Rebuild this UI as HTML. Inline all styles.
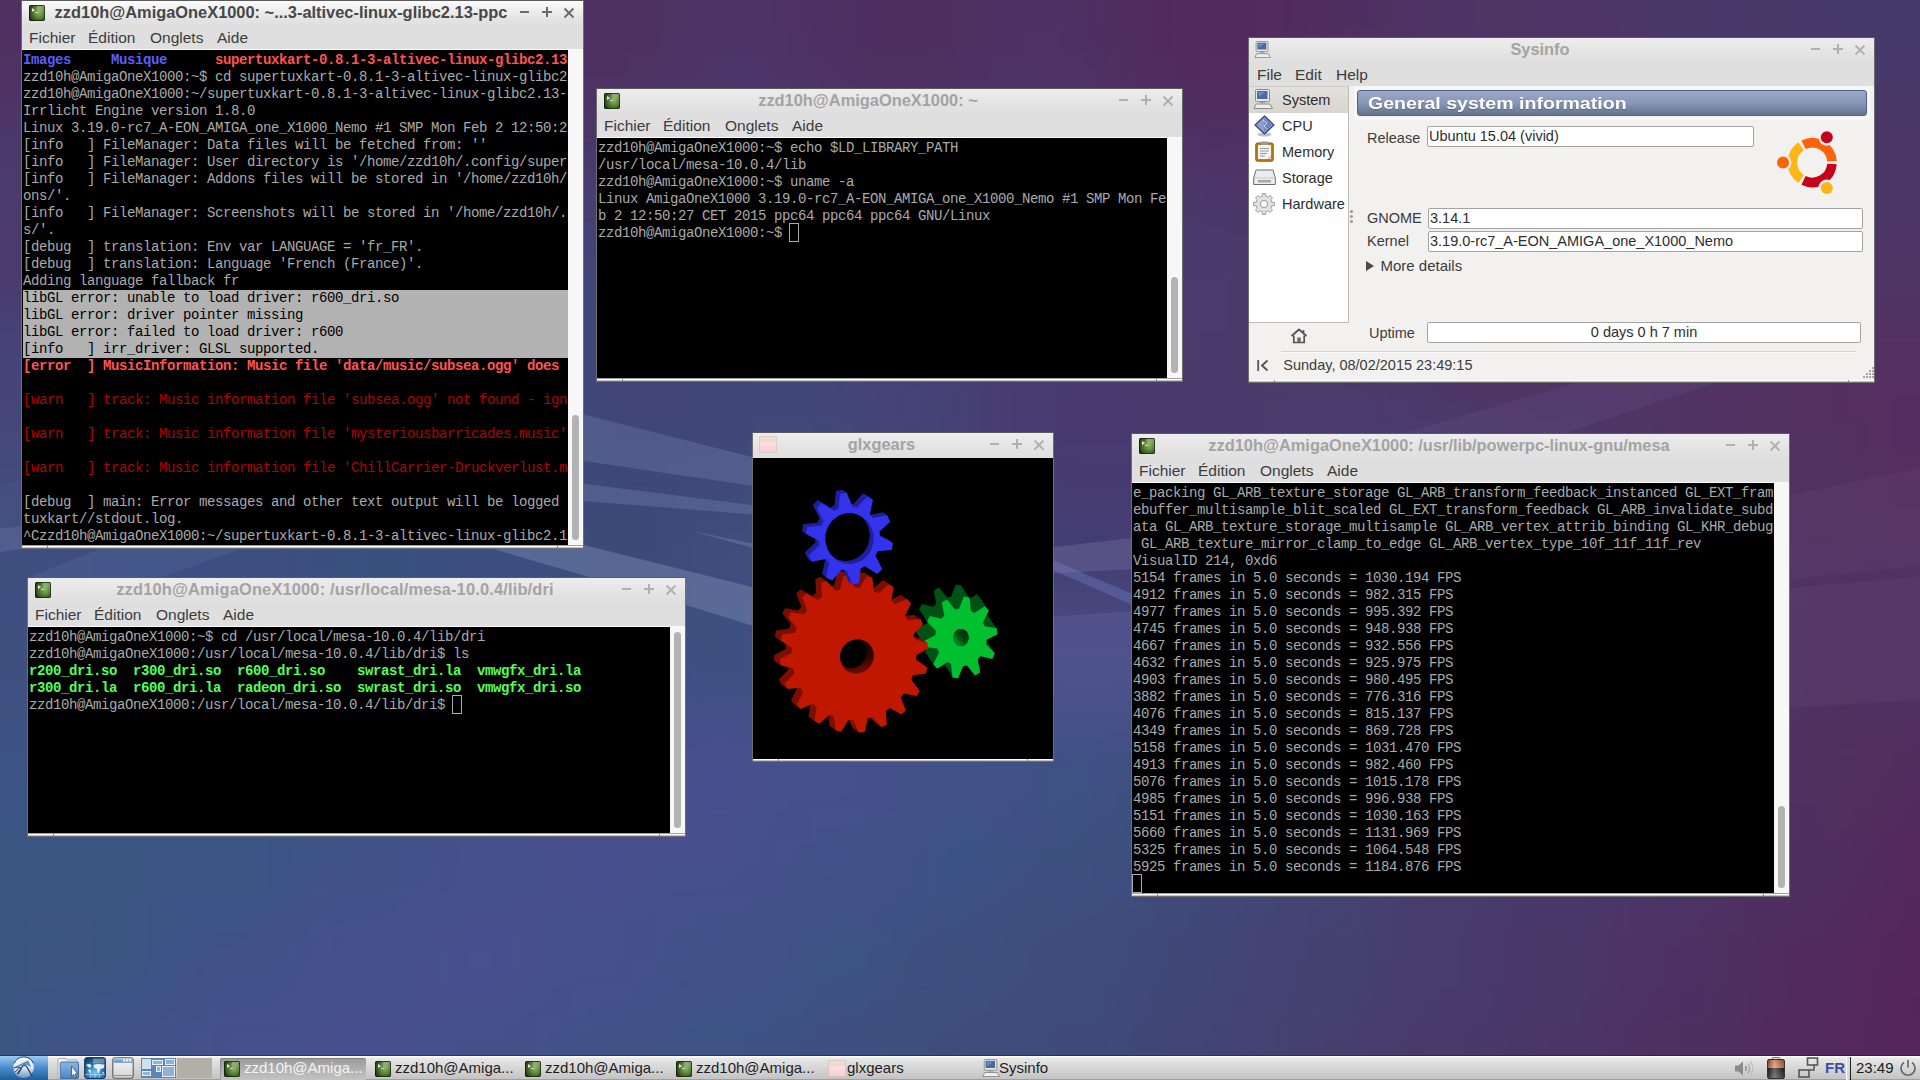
<!DOCTYPE html><html><head><meta charset="utf-8"><title>LXDE desktop</title><style>
*{box-sizing:border-box}
html,body{margin:0;padding:0}
body{width:1920px;height:1080px;overflow:hidden;position:relative;font-family:"Liberation Sans", sans-serif;background:#45407a}
.abs{position:absolute}
.win{position:absolute;background:#dfdfdf;border:1px solid #6e6e6e;border-top-color:#5a5a5a}
.tb{position:absolute;left:0;right:0;top:0;height:25px;background:linear-gradient(#fbfbfb,#e4e4e4 70%,#dfdfdf)}
.tb.in{background:linear-gradient(#ededed,#e2e2e2 70%,#dfdfdf)}
.ttl{position:absolute;top:1px;height:20px;line-height:20px;font-weight:bold;font-size:16.4px;white-space:pre;text-align:center;color:#a3a3a3;overflow:hidden}
.act .ttl{color:#474747}
.btn{position:absolute;background:#a9a9a9}
.act .btn{background:#6a6a6a}
.menu{position:absolute;top:24px;left:0;right:0;height:25px;background:#dfdfdf;font-size:15.5px;color:#3c3c3c}
.menu span{position:absolute;top:4px;line-height:17px;white-space:pre}
.wl{position:absolute;left:0;right:0;top:48px;height:1px;background:#fafafa}
.term{position:absolute;background:#000;overflow:hidden}
.tl{position:absolute;left:0;white-space:pre;font-family:"Liberation Mono", monospace;font-size:14px;letter-spacing:-0.4px;line-height:17px;height:17px;color:#aaaaaa}
.sb{position:absolute;background:#f7f7f7}
.th{position:absolute;background:#b3b3b3;border-radius:4px}
.bf{position:absolute;left:0;right:0;bottom:0;height:3px;background:linear-gradient(#a2a2a2 0,#a2a2a2 33%,#ffffff 34%,#ffffff 66%,#cfcfcf 67%,#b8b8b8 100%)}
.tick{position:absolute;bottom:0;width:1px;height:3px;background:#8a8a8a}
.B{font-weight:bold}
</style></head><body><svg class="abs" style="left:0;top:0" width="1920" height="1080" viewBox="0 0 1920 1080"><defs><filter id="bl" x="0" y="0" width="1920" height="1080" filterUnits="userSpaceOnUse" color-interpolation-filters="sRGB"><feGaussianBlur stdDeviation="24" edgeMode="duplicate" color-interpolation-filters="sRGB"/></filter></defs><g filter="url(#bl)" shape-rendering="crispEdges"><rect x="-60" y="-60" width="30" height="30" fill="#4f3163"/><rect x="-30" y="-60" width="30" height="30" fill="#503163"/><rect x="0" y="-60" width="30" height="30" fill="#503163"/><rect x="30" y="-60" width="30" height="30" fill="#4f3163"/><rect x="60" y="-60" width="30" height="30" fill="#4f3264"/><rect x="90" y="-60" width="30" height="30" fill="#4e3365"/><rect x="120" y="-60" width="30" height="30" fill="#4d3568"/><rect x="150" y="-60" width="30" height="30" fill="#4c376a"/><rect x="180" y="-60" width="30" height="30" fill="#4b396c"/><rect x="210" y="-60" width="30" height="30" fill="#4a3b6d"/><rect x="240" y="-60" width="30" height="30" fill="#493c6e"/><rect x="270" y="-60" width="30" height="30" fill="#493c6f"/><rect x="300" y="-60" width="30" height="30" fill="#493c6f"/><rect x="330" y="-60" width="30" height="30" fill="#493c6e"/><rect x="360" y="-60" width="30" height="30" fill="#493b6d"/><rect x="390" y="-60" width="30" height="30" fill="#4a396c"/><rect x="420" y="-60" width="30" height="30" fill="#4b376a"/><rect x="450" y="-60" width="30" height="30" fill="#4c3567"/><rect x="480" y="-60" width="30" height="30" fill="#4d3365"/><rect x="510" y="-60" width="30" height="30" fill="#4d3264"/><rect x="540" y="-60" width="30" height="30" fill="#4e3163"/><rect x="570" y="-60" width="30" height="30" fill="#4e3163"/><rect x="600" y="-60" width="30" height="30" fill="#4e3163"/><rect x="630" y="-60" width="30" height="30" fill="#4d3164"/><rect x="660" y="-60" width="30" height="30" fill="#4d3265"/><rect x="690" y="-60" width="30" height="30" fill="#4d3366"/><rect x="720" y="-60" width="30" height="30" fill="#4c3467"/><rect x="750" y="-60" width="30" height="30" fill="#4d3366"/><rect x="780" y="-60" width="30" height="30" fill="#4d3265"/><rect x="810" y="-60" width="30" height="30" fill="#4e3164"/><rect x="840" y="-60" width="30" height="30" fill="#4e3063"/><rect x="870" y="-60" width="30" height="30" fill="#4f3063"/><rect x="900" y="-60" width="30" height="30" fill="#4f3063"/><rect x="930" y="-60" width="30" height="30" fill="#4f3063"/><rect x="960" y="-60" width="30" height="30" fill="#4e3164"/><rect x="990" y="-60" width="30" height="30" fill="#4e3164"/><rect x="1020" y="-60" width="30" height="30" fill="#4e3265"/><rect x="1050" y="-60" width="30" height="30" fill="#4e3164"/><rect x="1080" y="-60" width="30" height="30" fill="#4f2f63"/><rect x="1110" y="-60" width="30" height="30" fill="#502d61"/><rect x="1140" y="-60" width="30" height="30" fill="#512c60"/><rect x="1170" y="-60" width="30" height="30" fill="#512b5f"/><rect x="1200" y="-60" width="30" height="30" fill="#522b5f"/><rect x="1230" y="-60" width="30" height="30" fill="#522b5f"/><rect x="1260" y="-60" width="30" height="30" fill="#512b5f"/><rect x="1290" y="-60" width="30" height="30" fill="#512c60"/><rect x="1320" y="-60" width="30" height="30" fill="#502e62"/><rect x="1350" y="-60" width="30" height="30" fill="#4f3063"/><rect x="1380" y="-60" width="30" height="30" fill="#4e3264"/><rect x="1410" y="-60" width="30" height="30" fill="#4e3366"/><rect x="1440" y="-60" width="30" height="30" fill="#4d3467"/><rect x="1470" y="-60" width="30" height="30" fill="#4d3567"/><rect x="1500" y="-60" width="30" height="30" fill="#4c3668"/><rect x="1530" y="-60" width="30" height="30" fill="#4c3668"/><rect x="1560" y="-60" width="30" height="30" fill="#4c3768"/><rect x="1590" y="-60" width="30" height="30" fill="#4b3768"/><rect x="1620" y="-60" width="30" height="30" fill="#4b3869"/><rect x="1650" y="-60" width="30" height="30" fill="#4a3869"/><rect x="1680" y="-60" width="30" height="30" fill="#4a3869"/><rect x="1710" y="-60" width="30" height="30" fill="#493969"/><rect x="1740" y="-60" width="30" height="30" fill="#483969"/><rect x="1770" y="-60" width="30" height="30" fill="#47396a"/><rect x="1800" y="-60" width="30" height="30" fill="#473a6a"/><rect x="1830" y="-60" width="30" height="30" fill="#463a6a"/><rect x="1860" y="-60" width="30" height="30" fill="#463a6a"/><rect x="1890" y="-60" width="30" height="30" fill="#463a6a"/><rect x="1920" y="-60" width="30" height="30" fill="#463a6a"/><rect x="1950" y="-60" width="30" height="30" fill="#463a6a"/><rect x="1980" y="-60" width="30" height="30" fill="#473a6a"/><rect x="-60" y="-30" width="30" height="30" fill="#503163"/><rect x="-30" y="-30" width="30" height="30" fill="#503062"/><rect x="0" y="-30" width="30" height="30" fill="#503062"/><rect x="30" y="-30" width="30" height="30" fill="#503062"/><rect x="60" y="-30" width="30" height="30" fill="#4f3163"/><rect x="90" y="-30" width="30" height="30" fill="#4f3365"/><rect x="120" y="-30" width="30" height="30" fill="#4d3567"/><rect x="150" y="-30" width="30" height="30" fill="#4c376a"/><rect x="180" y="-30" width="30" height="30" fill="#4b396c"/><rect x="210" y="-30" width="30" height="30" fill="#4a3b6d"/><rect x="240" y="-30" width="30" height="30" fill="#493c6f"/><rect x="270" y="-30" width="30" height="30" fill="#493d6f"/><rect x="300" y="-30" width="30" height="30" fill="#493d6f"/><rect x="330" y="-30" width="30" height="30" fill="#493c6f"/><rect x="360" y="-30" width="30" height="30" fill="#493b6e"/><rect x="390" y="-30" width="30" height="30" fill="#4a396c"/><rect x="420" y="-30" width="30" height="30" fill="#4b376a"/><rect x="450" y="-30" width="30" height="30" fill="#4c3567"/><rect x="480" y="-30" width="30" height="30" fill="#4d3365"/><rect x="510" y="-30" width="30" height="30" fill="#4d3163"/><rect x="540" y="-30" width="30" height="30" fill="#4e3062"/><rect x="570" y="-30" width="30" height="30" fill="#4e3062"/><rect x="600" y="-30" width="30" height="30" fill="#4e3062"/><rect x="630" y="-30" width="30" height="30" fill="#4e3163"/><rect x="660" y="-30" width="30" height="30" fill="#4d3264"/><rect x="690" y="-30" width="30" height="30" fill="#4d3365"/><rect x="720" y="-30" width="30" height="30" fill="#4c3466"/><rect x="750" y="-30" width="30" height="30" fill="#4d3366"/><rect x="780" y="-30" width="30" height="30" fill="#4e3265"/><rect x="810" y="-30" width="30" height="30" fill="#4e3063"/><rect x="840" y="-30" width="30" height="30" fill="#4f3063"/><rect x="870" y="-30" width="30" height="30" fill="#4f2f62"/><rect x="900" y="-30" width="30" height="30" fill="#4f2f62"/><rect x="930" y="-30" width="30" height="30" fill="#4f2f62"/><rect x="960" y="-30" width="30" height="30" fill="#4e3063"/><rect x="990" y="-30" width="30" height="30" fill="#4e3164"/><rect x="1020" y="-30" width="30" height="30" fill="#4e3165"/><rect x="1050" y="-30" width="30" height="30" fill="#4e3164"/><rect x="1080" y="-30" width="30" height="30" fill="#4f2f63"/><rect x="1110" y="-30" width="30" height="30" fill="#512d61"/><rect x="1140" y="-30" width="30" height="30" fill="#512b5f"/><rect x="1170" y="-30" width="30" height="30" fill="#522a5e"/><rect x="1200" y="-30" width="30" height="30" fill="#522a5e"/><rect x="1230" y="-30" width="30" height="30" fill="#522a5e"/><rect x="1260" y="-30" width="30" height="30" fill="#522b5f"/><rect x="1290" y="-30" width="30" height="30" fill="#512c60"/><rect x="1320" y="-30" width="30" height="30" fill="#502d61"/><rect x="1350" y="-30" width="30" height="30" fill="#4f2f63"/><rect x="1380" y="-30" width="30" height="30" fill="#4f3164"/><rect x="1410" y="-30" width="30" height="30" fill="#4e3365"/><rect x="1440" y="-30" width="30" height="30" fill="#4d3466"/><rect x="1470" y="-30" width="30" height="30" fill="#4d3567"/><rect x="1500" y="-30" width="30" height="30" fill="#4d3667"/><rect x="1530" y="-30" width="30" height="30" fill="#4c3667"/><rect x="1560" y="-30" width="30" height="30" fill="#4c3668"/><rect x="1590" y="-30" width="30" height="30" fill="#4c3768"/><rect x="1620" y="-30" width="30" height="30" fill="#4b3768"/><rect x="1650" y="-30" width="30" height="30" fill="#4b3869"/><rect x="1680" y="-30" width="30" height="30" fill="#4a3869"/><rect x="1710" y="-30" width="30" height="30" fill="#493869"/><rect x="1740" y="-30" width="30" height="30" fill="#483969"/><rect x="1770" y="-30" width="30" height="30" fill="#47396a"/><rect x="1800" y="-30" width="30" height="30" fill="#473a6a"/><rect x="1830" y="-30" width="30" height="30" fill="#463a6a"/><rect x="1860" y="-30" width="30" height="30" fill="#463a6a"/><rect x="1890" y="-30" width="30" height="30" fill="#463a6a"/><rect x="1920" y="-30" width="30" height="30" fill="#463a6a"/><rect x="1950" y="-30" width="30" height="30" fill="#463a6a"/><rect x="1980" y="-30" width="30" height="30" fill="#473a6a"/><rect x="-60" y="0" width="30" height="30" fill="#503163"/><rect x="-30" y="0" width="30" height="30" fill="#503062"/><rect x="0" y="0" width="30" height="30" fill="#503062"/><rect x="30" y="0" width="30" height="30" fill="#503062"/><rect x="60" y="0" width="30" height="30" fill="#4f3163"/><rect x="90" y="0" width="30" height="30" fill="#4f3365"/><rect x="120" y="0" width="30" height="30" fill="#4d3567"/><rect x="150" y="0" width="30" height="30" fill="#4c386a"/><rect x="180" y="0" width="30" height="30" fill="#4b3a6c"/><rect x="210" y="0" width="30" height="30" fill="#4a3b6e"/><rect x="240" y="0" width="30" height="30" fill="#493c6f"/><rect x="270" y="0" width="30" height="30" fill="#493d6f"/><rect x="300" y="0" width="30" height="30" fill="#493d6f"/><rect x="330" y="0" width="30" height="30" fill="#493c6f"/><rect x="360" y="0" width="30" height="30" fill="#493b6e"/><rect x="390" y="0" width="30" height="30" fill="#4a3a6c"/><rect x="420" y="0" width="30" height="30" fill="#4b376a"/><rect x="450" y="0" width="30" height="30" fill="#4c3567"/><rect x="480" y="0" width="30" height="30" fill="#4d3365"/><rect x="510" y="0" width="30" height="30" fill="#4e3163"/><rect x="540" y="0" width="30" height="30" fill="#4e3062"/><rect x="570" y="0" width="30" height="30" fill="#4e3062"/><rect x="600" y="0" width="30" height="30" fill="#4e3062"/><rect x="630" y="0" width="30" height="30" fill="#4e3163"/><rect x="660" y="0" width="30" height="30" fill="#4d3264"/><rect x="690" y="0" width="30" height="30" fill="#4d3365"/><rect x="720" y="0" width="30" height="30" fill="#4c3466"/><rect x="750" y="0" width="30" height="30" fill="#4d3366"/><rect x="780" y="0" width="30" height="30" fill="#4e3265"/><rect x="810" y="0" width="30" height="30" fill="#4e3063"/><rect x="840" y="0" width="30" height="30" fill="#4f2f62"/><rect x="870" y="0" width="30" height="30" fill="#4f2f62"/><rect x="900" y="0" width="30" height="30" fill="#4f2f62"/><rect x="930" y="0" width="30" height="30" fill="#4f2f62"/><rect x="960" y="0" width="30" height="30" fill="#4f3063"/><rect x="990" y="0" width="30" height="30" fill="#4e3164"/><rect x="1020" y="0" width="30" height="30" fill="#4e3165"/><rect x="1050" y="0" width="30" height="30" fill="#4e3164"/><rect x="1080" y="0" width="30" height="30" fill="#4f2f63"/><rect x="1110" y="0" width="30" height="30" fill="#512d60"/><rect x="1140" y="0" width="30" height="30" fill="#522b5f"/><rect x="1170" y="0" width="30" height="30" fill="#522a5e"/><rect x="1200" y="0" width="30" height="30" fill="#522a5e"/><rect x="1230" y="0" width="30" height="30" fill="#522a5e"/><rect x="1260" y="0" width="30" height="30" fill="#522b5e"/><rect x="1290" y="0" width="30" height="30" fill="#512c5f"/><rect x="1320" y="0" width="30" height="30" fill="#502d61"/><rect x="1350" y="0" width="30" height="30" fill="#502f63"/><rect x="1380" y="0" width="30" height="30" fill="#4f3164"/><rect x="1410" y="0" width="30" height="30" fill="#4e3365"/><rect x="1440" y="0" width="30" height="30" fill="#4e3466"/><rect x="1470" y="0" width="30" height="30" fill="#4d3566"/><rect x="1500" y="0" width="30" height="30" fill="#4d3566"/><rect x="1530" y="0" width="30" height="30" fill="#4d3667"/><rect x="1560" y="0" width="30" height="30" fill="#4d3667"/><rect x="1590" y="0" width="30" height="30" fill="#4c3667"/><rect x="1620" y="0" width="30" height="30" fill="#4c3768"/><rect x="1650" y="0" width="30" height="30" fill="#4b3768"/><rect x="1680" y="0" width="30" height="30" fill="#4a3869"/><rect x="1710" y="0" width="30" height="30" fill="#493869"/><rect x="1740" y="0" width="30" height="30" fill="#483969"/><rect x="1770" y="0" width="30" height="30" fill="#483969"/><rect x="1800" y="0" width="30" height="30" fill="#473a6a"/><rect x="1830" y="0" width="30" height="30" fill="#463a6a"/><rect x="1860" y="0" width="30" height="30" fill="#463a6a"/><rect x="1890" y="0" width="30" height="30" fill="#463a6a"/><rect x="1920" y="0" width="30" height="30" fill="#463a6a"/><rect x="1950" y="0" width="30" height="30" fill="#463a6a"/><rect x="1980" y="0" width="30" height="30" fill="#47396a"/><rect x="-60" y="30" width="30" height="30" fill="#503163"/><rect x="-30" y="30" width="30" height="30" fill="#503062"/><rect x="0" y="30" width="30" height="30" fill="#503062"/><rect x="30" y="30" width="30" height="30" fill="#503062"/><rect x="60" y="30" width="30" height="30" fill="#4f3164"/><rect x="90" y="30" width="30" height="30" fill="#4e3366"/><rect x="120" y="30" width="30" height="30" fill="#4d3668"/><rect x="150" y="30" width="30" height="30" fill="#4c386b"/><rect x="180" y="30" width="30" height="30" fill="#4a3a6d"/><rect x="210" y="30" width="30" height="30" fill="#4a3c6e"/><rect x="240" y="30" width="30" height="30" fill="#493d6f"/><rect x="270" y="30" width="30" height="30" fill="#493d6f"/><rect x="300" y="30" width="30" height="30" fill="#493d6f"/><rect x="330" y="30" width="30" height="30" fill="#493d6f"/><rect x="360" y="30" width="30" height="30" fill="#493c6e"/><rect x="390" y="30" width="30" height="30" fill="#4a3a6d"/><rect x="420" y="30" width="30" height="30" fill="#4a386b"/><rect x="450" y="30" width="30" height="30" fill="#4b3668"/><rect x="480" y="30" width="30" height="30" fill="#4d3365"/><rect x="510" y="30" width="30" height="30" fill="#4d3163"/><rect x="540" y="30" width="30" height="30" fill="#4e3062"/><rect x="570" y="30" width="30" height="30" fill="#4e3062"/><rect x="600" y="30" width="30" height="30" fill="#4e3062"/><rect x="630" y="30" width="30" height="30" fill="#4e3163"/><rect x="660" y="30" width="30" height="30" fill="#4d3264"/><rect x="690" y="30" width="30" height="30" fill="#4c3466"/><rect x="720" y="30" width="30" height="30" fill="#4c3467"/><rect x="750" y="30" width="30" height="30" fill="#4c3467"/><rect x="780" y="30" width="30" height="30" fill="#4d3265"/><rect x="810" y="30" width="30" height="30" fill="#4e3164"/><rect x="840" y="30" width="30" height="30" fill="#4f2f63"/><rect x="870" y="30" width="30" height="30" fill="#4f2f62"/><rect x="900" y="30" width="30" height="30" fill="#4f2f62"/><rect x="930" y="30" width="30" height="30" fill="#4f2f62"/><rect x="960" y="30" width="30" height="30" fill="#4e3063"/><rect x="990" y="30" width="30" height="30" fill="#4e3164"/><rect x="1020" y="30" width="30" height="30" fill="#4e3265"/><rect x="1050" y="30" width="30" height="30" fill="#4e3165"/><rect x="1080" y="30" width="30" height="30" fill="#4f2f63"/><rect x="1110" y="30" width="30" height="30" fill="#502d61"/><rect x="1140" y="30" width="30" height="30" fill="#512b5f"/><rect x="1170" y="30" width="30" height="30" fill="#522a5e"/><rect x="1200" y="30" width="30" height="30" fill="#522a5e"/><rect x="1230" y="30" width="30" height="30" fill="#522a5e"/><rect x="1260" y="30" width="30" height="30" fill="#522b5f"/><rect x="1290" y="30" width="30" height="30" fill="#512c60"/><rect x="1320" y="30" width="30" height="30" fill="#502e61"/><rect x="1350" y="30" width="30" height="30" fill="#4f3063"/><rect x="1380" y="30" width="30" height="30" fill="#4f3264"/><rect x="1410" y="30" width="30" height="30" fill="#4e3365"/><rect x="1440" y="30" width="30" height="30" fill="#4e3465"/><rect x="1470" y="30" width="30" height="30" fill="#4e3466"/><rect x="1500" y="30" width="30" height="30" fill="#4e3566"/><rect x="1530" y="30" width="30" height="30" fill="#4e3566"/><rect x="1560" y="30" width="30" height="30" fill="#4d3566"/><rect x="1590" y="30" width="30" height="30" fill="#4d3667"/><rect x="1620" y="30" width="30" height="30" fill="#4c3667"/><rect x="1650" y="30" width="30" height="30" fill="#4b3768"/><rect x="1680" y="30" width="30" height="30" fill="#4b3768"/><rect x="1710" y="30" width="30" height="30" fill="#4a3868"/><rect x="1740" y="30" width="30" height="30" fill="#493869"/><rect x="1770" y="30" width="30" height="30" fill="#483969"/><rect x="1800" y="30" width="30" height="30" fill="#473969"/><rect x="1830" y="30" width="30" height="30" fill="#473a6a"/><rect x="1860" y="30" width="30" height="30" fill="#463a6a"/><rect x="1890" y="30" width="30" height="30" fill="#463a6a"/><rect x="1920" y="30" width="30" height="30" fill="#463a6a"/><rect x="1950" y="30" width="30" height="30" fill="#473a6a"/><rect x="1980" y="30" width="30" height="30" fill="#473969"/><rect x="-60" y="60" width="30" height="30" fill="#4f3264"/><rect x="-30" y="60" width="30" height="30" fill="#4f3163"/><rect x="0" y="60" width="30" height="30" fill="#4f3163"/><rect x="30" y="60" width="30" height="30" fill="#4f3264"/><rect x="60" y="60" width="30" height="30" fill="#4e3365"/><rect x="90" y="60" width="30" height="30" fill="#4d3567"/><rect x="120" y="60" width="30" height="30" fill="#4c376a"/><rect x="150" y="60" width="30" height="30" fill="#4b3a6c"/><rect x="180" y="60" width="30" height="30" fill="#4a3b6e"/><rect x="210" y="60" width="30" height="30" fill="#493c6f"/><rect x="240" y="60" width="30" height="30" fill="#493d6f"/><rect x="270" y="60" width="30" height="30" fill="#493d6f"/><rect x="300" y="60" width="30" height="30" fill="#493d70"/><rect x="330" y="60" width="30" height="30" fill="#493d6f"/><rect x="360" y="60" width="30" height="30" fill="#493c6f"/><rect x="390" y="60" width="30" height="30" fill="#493b6e"/><rect x="420" y="60" width="30" height="30" fill="#4a396c"/><rect x="450" y="60" width="30" height="30" fill="#4b3769"/><rect x="480" y="60" width="30" height="30" fill="#4c3467"/><rect x="510" y="60" width="30" height="30" fill="#4d3265"/><rect x="540" y="60" width="30" height="30" fill="#4d3163"/><rect x="570" y="60" width="30" height="30" fill="#4e3163"/><rect x="600" y="60" width="30" height="30" fill="#4e3163"/><rect x="630" y="60" width="30" height="30" fill="#4d3264"/><rect x="660" y="60" width="30" height="30" fill="#4c3365"/><rect x="690" y="60" width="30" height="30" fill="#4c3567"/><rect x="720" y="60" width="30" height="30" fill="#4b3668"/><rect x="750" y="60" width="30" height="30" fill="#4c3568"/><rect x="780" y="60" width="30" height="30" fill="#4d3366"/><rect x="810" y="60" width="30" height="30" fill="#4e3265"/><rect x="840" y="60" width="30" height="30" fill="#4e3063"/><rect x="870" y="60" width="30" height="30" fill="#4f3063"/><rect x="900" y="60" width="30" height="30" fill="#4f3063"/><rect x="930" y="60" width="30" height="30" fill="#4e3063"/><rect x="960" y="60" width="30" height="30" fill="#4e3164"/><rect x="990" y="60" width="30" height="30" fill="#4d3265"/><rect x="1020" y="60" width="30" height="30" fill="#4d3366"/><rect x="1050" y="60" width="30" height="30" fill="#4e3266"/><rect x="1080" y="60" width="30" height="30" fill="#4f3164"/><rect x="1110" y="60" width="30" height="30" fill="#502e62"/><rect x="1140" y="60" width="30" height="30" fill="#512c60"/><rect x="1170" y="60" width="30" height="30" fill="#512b5f"/><rect x="1200" y="60" width="30" height="30" fill="#522b5f"/><rect x="1230" y="60" width="30" height="30" fill="#522b5f"/><rect x="1260" y="60" width="30" height="30" fill="#512c5f"/><rect x="1290" y="60" width="30" height="30" fill="#512d61"/><rect x="1320" y="60" width="30" height="30" fill="#502f62"/><rect x="1350" y="60" width="30" height="30" fill="#4f3163"/><rect x="1380" y="60" width="30" height="30" fill="#4f3264"/><rect x="1410" y="60" width="30" height="30" fill="#4e3365"/><rect x="1440" y="60" width="30" height="30" fill="#4e3465"/><rect x="1470" y="60" width="30" height="30" fill="#4f3465"/><rect x="1500" y="60" width="30" height="30" fill="#4e3465"/><rect x="1530" y="60" width="30" height="30" fill="#4e3465"/><rect x="1560" y="60" width="30" height="30" fill="#4e3565"/><rect x="1590" y="60" width="30" height="30" fill="#4d3566"/><rect x="1620" y="60" width="30" height="30" fill="#4d3667"/><rect x="1650" y="60" width="30" height="30" fill="#4c3667"/><rect x="1680" y="60" width="30" height="30" fill="#4b3768"/><rect x="1710" y="60" width="30" height="30" fill="#4a3768"/><rect x="1740" y="60" width="30" height="30" fill="#4a3868"/><rect x="1770" y="60" width="30" height="30" fill="#493869"/><rect x="1800" y="60" width="30" height="30" fill="#483969"/><rect x="1830" y="60" width="30" height="30" fill="#483969"/><rect x="1860" y="60" width="30" height="30" fill="#473969"/><rect x="1890" y="60" width="30" height="30" fill="#47396a"/><rect x="1920" y="60" width="30" height="30" fill="#473969"/><rect x="1950" y="60" width="30" height="30" fill="#483969"/><rect x="1980" y="60" width="30" height="30" fill="#483969"/><rect x="-60" y="90" width="30" height="30" fill="#4e3567"/><rect x="-30" y="90" width="30" height="30" fill="#4e3466"/><rect x="0" y="90" width="30" height="30" fill="#4e3466"/><rect x="30" y="90" width="30" height="30" fill="#4e3466"/><rect x="60" y="90" width="30" height="30" fill="#4d3668"/><rect x="90" y="90" width="30" height="30" fill="#4c376a"/><rect x="120" y="90" width="30" height="30" fill="#4b396c"/><rect x="150" y="90" width="30" height="30" fill="#4a3b6d"/><rect x="180" y="90" width="30" height="30" fill="#4a3c6e"/><rect x="210" y="90" width="30" height="30" fill="#493d6f"/><rect x="240" y="90" width="30" height="30" fill="#493d6f"/><rect x="270" y="90" width="30" height="30" fill="#493d6f"/><rect x="300" y="90" width="30" height="30" fill="#493d6f"/><rect x="330" y="90" width="30" height="30" fill="#493d6f"/><rect x="360" y="90" width="30" height="30" fill="#493d6f"/><rect x="390" y="90" width="30" height="30" fill="#493c6f"/><rect x="420" y="90" width="30" height="30" fill="#493b6d"/><rect x="450" y="90" width="30" height="30" fill="#4a396b"/><rect x="480" y="90" width="30" height="30" fill="#4b3769"/><rect x="510" y="90" width="30" height="30" fill="#4c3567"/><rect x="540" y="90" width="30" height="30" fill="#4c3365"/><rect x="570" y="90" width="30" height="30" fill="#4d3365"/><rect x="600" y="90" width="30" height="30" fill="#4d3365"/><rect x="630" y="90" width="30" height="30" fill="#4c3466"/><rect x="660" y="90" width="30" height="30" fill="#4b3568"/><rect x="690" y="90" width="30" height="30" fill="#4b3769"/><rect x="720" y="90" width="30" height="30" fill="#4b376a"/><rect x="750" y="90" width="30" height="30" fill="#4b376a"/><rect x="780" y="90" width="30" height="30" fill="#4c3568"/><rect x="810" y="90" width="30" height="30" fill="#4d3366"/><rect x="840" y="90" width="30" height="30" fill="#4d3265"/><rect x="870" y="90" width="30" height="30" fill="#4e3164"/><rect x="900" y="90" width="30" height="30" fill="#4e3164"/><rect x="930" y="90" width="30" height="30" fill="#4e3265"/><rect x="960" y="90" width="30" height="30" fill="#4d3366"/><rect x="990" y="90" width="30" height="30" fill="#4d3467"/><rect x="1020" y="90" width="30" height="30" fill="#4c3468"/><rect x="1050" y="90" width="30" height="30" fill="#4d3467"/><rect x="1080" y="90" width="30" height="30" fill="#4e3266"/><rect x="1110" y="90" width="30" height="30" fill="#4f3064"/><rect x="1140" y="90" width="30" height="30" fill="#502e62"/><rect x="1170" y="90" width="30" height="30" fill="#502d61"/><rect x="1200" y="90" width="30" height="30" fill="#512c60"/><rect x="1230" y="90" width="30" height="30" fill="#512d60"/><rect x="1260" y="90" width="30" height="30" fill="#502d61"/><rect x="1290" y="90" width="30" height="30" fill="#502f62"/><rect x="1320" y="90" width="30" height="30" fill="#4f3163"/><rect x="1350" y="90" width="30" height="30" fill="#4f3264"/><rect x="1380" y="90" width="30" height="30" fill="#4f3364"/><rect x="1410" y="90" width="30" height="30" fill="#4f3364"/><rect x="1440" y="90" width="30" height="30" fill="#4f3364"/><rect x="1470" y="90" width="30" height="30" fill="#4f3363"/><rect x="1500" y="90" width="30" height="30" fill="#4f3363"/><rect x="1530" y="90" width="30" height="30" fill="#4f3364"/><rect x="1560" y="90" width="30" height="30" fill="#4f3464"/><rect x="1590" y="90" width="30" height="30" fill="#4e3565"/><rect x="1620" y="90" width="30" height="30" fill="#4d3566"/><rect x="1650" y="90" width="30" height="30" fill="#4d3667"/><rect x="1680" y="90" width="30" height="30" fill="#4c3667"/><rect x="1710" y="90" width="30" height="30" fill="#4b3768"/><rect x="1740" y="90" width="30" height="30" fill="#4b3768"/><rect x="1770" y="90" width="30" height="30" fill="#4a3768"/><rect x="1800" y="90" width="30" height="30" fill="#4a3868"/><rect x="1830" y="90" width="30" height="30" fill="#493868"/><rect x="1860" y="90" width="30" height="30" fill="#493868"/><rect x="1890" y="90" width="30" height="30" fill="#493868"/><rect x="1920" y="90" width="30" height="30" fill="#493868"/><rect x="1950" y="90" width="30" height="30" fill="#493868"/><rect x="1980" y="90" width="30" height="30" fill="#4a3868"/><rect x="-60" y="120" width="30" height="30" fill="#4c386a"/><rect x="-30" y="120" width="30" height="30" fill="#4c386a"/><rect x="0" y="120" width="30" height="30" fill="#4c386a"/><rect x="30" y="120" width="30" height="30" fill="#4c386a"/><rect x="60" y="120" width="30" height="30" fill="#4b396b"/><rect x="90" y="120" width="30" height="30" fill="#4b3a6c"/><rect x="120" y="120" width="30" height="30" fill="#4a3b6d"/><rect x="150" y="120" width="30" height="30" fill="#4a3c6e"/><rect x="180" y="120" width="30" height="30" fill="#493d6f"/><rect x="210" y="120" width="30" height="30" fill="#493d6f"/><rect x="240" y="120" width="30" height="30" fill="#493c6f"/><rect x="270" y="120" width="30" height="30" fill="#4a3c6f"/><rect x="300" y="120" width="30" height="30" fill="#493c6f"/><rect x="330" y="120" width="30" height="30" fill="#493d6f"/><rect x="360" y="120" width="30" height="30" fill="#493d6f"/><rect x="390" y="120" width="30" height="30" fill="#493d6f"/><rect x="420" y="120" width="30" height="30" fill="#493c6f"/><rect x="450" y="120" width="30" height="30" fill="#493b6e"/><rect x="480" y="120" width="30" height="30" fill="#4a3a6c"/><rect x="510" y="120" width="30" height="30" fill="#4a386a"/><rect x="540" y="120" width="30" height="30" fill="#4b3769"/><rect x="570" y="120" width="30" height="30" fill="#4b3668"/><rect x="600" y="120" width="30" height="30" fill="#4b3669"/><rect x="630" y="120" width="30" height="30" fill="#4b376a"/><rect x="660" y="120" width="30" height="30" fill="#4a386b"/><rect x="690" y="120" width="30" height="30" fill="#4a396c"/><rect x="720" y="120" width="30" height="30" fill="#49396c"/><rect x="750" y="120" width="30" height="30" fill="#4a396c"/><rect x="780" y="120" width="30" height="30" fill="#4a386b"/><rect x="810" y="120" width="30" height="30" fill="#4b3669"/><rect x="840" y="120" width="30" height="30" fill="#4c3568"/><rect x="870" y="120" width="30" height="30" fill="#4d3467"/><rect x="900" y="120" width="30" height="30" fill="#4d3467"/><rect x="930" y="120" width="30" height="30" fill="#4c3467"/><rect x="960" y="120" width="30" height="30" fill="#4c3568"/><rect x="990" y="120" width="30" height="30" fill="#4c3669"/><rect x="1020" y="120" width="30" height="30" fill="#4c3669"/><rect x="1050" y="120" width="30" height="30" fill="#4c3669"/><rect x="1080" y="120" width="30" height="30" fill="#4c3568"/><rect x="1110" y="120" width="30" height="30" fill="#4d3366"/><rect x="1140" y="120" width="30" height="30" fill="#4e3165"/><rect x="1170" y="120" width="30" height="30" fill="#4f3064"/><rect x="1200" y="120" width="30" height="30" fill="#4f2f63"/><rect x="1230" y="120" width="30" height="30" fill="#4f2f63"/><rect x="1260" y="120" width="30" height="30" fill="#4f3063"/><rect x="1290" y="120" width="30" height="30" fill="#4f3164"/><rect x="1320" y="120" width="30" height="30" fill="#4e3265"/><rect x="1350" y="120" width="30" height="30" fill="#4e3365"/><rect x="1380" y="120" width="30" height="30" fill="#4f3364"/><rect x="1410" y="120" width="30" height="30" fill="#4f3363"/><rect x="1440" y="120" width="30" height="30" fill="#503262"/><rect x="1470" y="120" width="30" height="30" fill="#503262"/><rect x="1500" y="120" width="30" height="30" fill="#503262"/><rect x="1530" y="120" width="30" height="30" fill="#503262"/><rect x="1560" y="120" width="30" height="30" fill="#4f3363"/><rect x="1590" y="120" width="30" height="30" fill="#4f3464"/><rect x="1620" y="120" width="30" height="30" fill="#4e3565"/><rect x="1650" y="120" width="30" height="30" fill="#4d3566"/><rect x="1680" y="120" width="30" height="30" fill="#4c3667"/><rect x="1710" y="120" width="30" height="30" fill="#4c3667"/><rect x="1740" y="120" width="30" height="30" fill="#4b3767"/><rect x="1770" y="120" width="30" height="30" fill="#4b3767"/><rect x="1800" y="120" width="30" height="30" fill="#4b3768"/><rect x="1830" y="120" width="30" height="30" fill="#4b3767"/><rect x="1860" y="120" width="30" height="30" fill="#4b3667"/><rect x="1890" y="120" width="30" height="30" fill="#4b3667"/><rect x="1920" y="120" width="30" height="30" fill="#4b3767"/><rect x="1950" y="120" width="30" height="30" fill="#4b3768"/><rect x="1980" y="120" width="30" height="30" fill="#4b3768"/><rect x="-60" y="150" width="30" height="30" fill="#4b3a6d"/><rect x="-30" y="150" width="30" height="30" fill="#4b3a6c"/><rect x="0" y="150" width="30" height="30" fill="#4b3a6c"/><rect x="30" y="150" width="30" height="30" fill="#4b3a6d"/><rect x="60" y="150" width="30" height="30" fill="#4a3b6d"/><rect x="90" y="150" width="30" height="30" fill="#4a3c6e"/><rect x="120" y="150" width="30" height="30" fill="#4a3c6f"/><rect x="150" y="150" width="30" height="30" fill="#493d6f"/><rect x="180" y="150" width="30" height="30" fill="#493d6f"/><rect x="210" y="150" width="30" height="30" fill="#4a3c6f"/><rect x="240" y="150" width="30" height="30" fill="#4a3c6e"/><rect x="270" y="150" width="30" height="30" fill="#4a3b6e"/><rect x="300" y="150" width="30" height="30" fill="#4a3b6e"/><rect x="330" y="150" width="30" height="30" fill="#4a3c6e"/><rect x="360" y="150" width="30" height="30" fill="#493d6f"/><rect x="390" y="150" width="30" height="30" fill="#493d70"/><rect x="420" y="150" width="30" height="30" fill="#483e70"/><rect x="450" y="150" width="30" height="30" fill="#483d70"/><rect x="480" y="150" width="30" height="30" fill="#483c6f"/><rect x="510" y="150" width="30" height="30" fill="#483b6e"/><rect x="540" y="150" width="30" height="30" fill="#493b6d"/><rect x="570" y="150" width="30" height="30" fill="#493a6d"/><rect x="600" y="150" width="30" height="30" fill="#493a6d"/><rect x="630" y="150" width="30" height="30" fill="#483b6e"/><rect x="660" y="150" width="30" height="30" fill="#483c6e"/><rect x="690" y="150" width="30" height="30" fill="#483c6f"/><rect x="720" y="150" width="30" height="30" fill="#483c6f"/><rect x="750" y="150" width="30" height="30" fill="#483c6f"/><rect x="780" y="150" width="30" height="30" fill="#493a6e"/><rect x="810" y="150" width="30" height="30" fill="#4a396c"/><rect x="840" y="150" width="30" height="30" fill="#4a386b"/><rect x="870" y="150" width="30" height="30" fill="#4b376a"/><rect x="900" y="150" width="30" height="30" fill="#4b376a"/><rect x="930" y="150" width="30" height="30" fill="#4b376a"/><rect x="960" y="150" width="30" height="30" fill="#4b386b"/><rect x="990" y="150" width="30" height="30" fill="#4b386b"/><rect x="1020" y="150" width="30" height="30" fill="#4a386b"/><rect x="1050" y="150" width="30" height="30" fill="#4b386b"/><rect x="1080" y="150" width="30" height="30" fill="#4b376a"/><rect x="1110" y="150" width="30" height="30" fill="#4c3669"/><rect x="1140" y="150" width="30" height="30" fill="#4c3568"/><rect x="1170" y="150" width="30" height="30" fill="#4d3467"/><rect x="1200" y="150" width="30" height="30" fill="#4d3366"/><rect x="1230" y="150" width="30" height="30" fill="#4e3366"/><rect x="1260" y="150" width="30" height="30" fill="#4e3366"/><rect x="1290" y="150" width="30" height="30" fill="#4e3466"/><rect x="1320" y="150" width="30" height="30" fill="#4e3466"/><rect x="1350" y="150" width="30" height="30" fill="#4e3465"/><rect x="1380" y="150" width="30" height="30" fill="#4f3364"/><rect x="1410" y="150" width="30" height="30" fill="#503262"/><rect x="1440" y="150" width="30" height="30" fill="#513261"/><rect x="1470" y="150" width="30" height="30" fill="#513161"/><rect x="1500" y="150" width="30" height="30" fill="#513161"/><rect x="1530" y="150" width="30" height="30" fill="#513161"/><rect x="1560" y="150" width="30" height="30" fill="#503262"/><rect x="1590" y="150" width="30" height="30" fill="#4f3363"/><rect x="1620" y="150" width="30" height="30" fill="#4f3464"/><rect x="1650" y="150" width="30" height="30" fill="#4e3565"/><rect x="1680" y="150" width="30" height="30" fill="#4d3566"/><rect x="1710" y="150" width="30" height="30" fill="#4c3667"/><rect x="1740" y="150" width="30" height="30" fill="#4c3667"/><rect x="1770" y="150" width="30" height="30" fill="#4c3667"/><rect x="1800" y="150" width="30" height="30" fill="#4c3667"/><rect x="1830" y="150" width="30" height="30" fill="#4c3667"/><rect x="1860" y="150" width="30" height="30" fill="#4c3667"/><rect x="1890" y="150" width="30" height="30" fill="#4c3667"/><rect x="1920" y="150" width="30" height="30" fill="#4c3667"/><rect x="1950" y="150" width="30" height="30" fill="#4c3667"/><rect x="1980" y="150" width="30" height="30" fill="#4c3667"/><rect x="-60" y="180" width="30" height="30" fill="#4a3b6d"/><rect x="-30" y="180" width="30" height="30" fill="#4b3b6d"/><rect x="0" y="180" width="30" height="30" fill="#4b3a6d"/><rect x="30" y="180" width="30" height="30" fill="#4b3b6d"/><rect x="60" y="180" width="30" height="30" fill="#4a3b6e"/><rect x="90" y="180" width="30" height="30" fill="#4a3c6f"/><rect x="120" y="180" width="30" height="30" fill="#493d70"/><rect x="150" y="180" width="30" height="30" fill="#493e70"/><rect x="180" y="180" width="30" height="30" fill="#493d6f"/><rect x="210" y="180" width="30" height="30" fill="#4a3c6e"/><rect x="240" y="180" width="30" height="30" fill="#4a3b6d"/><rect x="270" y="180" width="30" height="30" fill="#4b3b6d"/><rect x="300" y="180" width="30" height="30" fill="#4b3b6d"/><rect x="330" y="180" width="30" height="30" fill="#4a3b6d"/><rect x="360" y="180" width="30" height="30" fill="#4a3c6e"/><rect x="390" y="180" width="30" height="30" fill="#493d70"/><rect x="420" y="180" width="30" height="30" fill="#483e71"/><rect x="450" y="180" width="30" height="30" fill="#473f71"/><rect x="480" y="180" width="30" height="30" fill="#473f72"/><rect x="510" y="180" width="30" height="30" fill="#473f71"/><rect x="540" y="180" width="30" height="30" fill="#473e71"/><rect x="570" y="180" width="30" height="30" fill="#473e71"/><rect x="600" y="180" width="30" height="30" fill="#473e71"/><rect x="630" y="180" width="30" height="30" fill="#463f72"/><rect x="660" y="180" width="30" height="30" fill="#463f72"/><rect x="690" y="180" width="30" height="30" fill="#463f72"/><rect x="720" y="180" width="30" height="30" fill="#463f72"/><rect x="750" y="180" width="30" height="30" fill="#473e71"/><rect x="780" y="180" width="30" height="30" fill="#473d71"/><rect x="810" y="180" width="30" height="30" fill="#483c70"/><rect x="840" y="180" width="30" height="30" fill="#493b6f"/><rect x="870" y="180" width="30" height="30" fill="#493b6e"/><rect x="900" y="180" width="30" height="30" fill="#493a6e"/><rect x="930" y="180" width="30" height="30" fill="#493a6d"/><rect x="960" y="180" width="30" height="30" fill="#493a6d"/><rect x="990" y="180" width="30" height="30" fill="#493a6d"/><rect x="1020" y="180" width="30" height="30" fill="#493a6d"/><rect x="1050" y="180" width="30" height="30" fill="#4a3a6d"/><rect x="1080" y="180" width="30" height="30" fill="#4a396c"/><rect x="1110" y="180" width="30" height="30" fill="#4a386b"/><rect x="1140" y="180" width="30" height="30" fill="#4b386b"/><rect x="1170" y="180" width="30" height="30" fill="#4b376a"/><rect x="1200" y="180" width="30" height="30" fill="#4c3669"/><rect x="1230" y="180" width="30" height="30" fill="#4c3669"/><rect x="1260" y="180" width="30" height="30" fill="#4c3668"/><rect x="1290" y="180" width="30" height="30" fill="#4d3668"/><rect x="1320" y="180" width="30" height="30" fill="#4d3567"/><rect x="1350" y="180" width="30" height="30" fill="#4e3465"/><rect x="1380" y="180" width="30" height="30" fill="#503363"/><rect x="1410" y="180" width="30" height="30" fill="#513261"/><rect x="1440" y="180" width="30" height="30" fill="#513160"/><rect x="1470" y="180" width="30" height="30" fill="#523060"/><rect x="1500" y="180" width="30" height="30" fill="#523060"/><rect x="1530" y="180" width="30" height="30" fill="#513160"/><rect x="1560" y="180" width="30" height="30" fill="#513161"/><rect x="1590" y="180" width="30" height="30" fill="#503262"/><rect x="1620" y="180" width="30" height="30" fill="#4f3364"/><rect x="1650" y="180" width="30" height="30" fill="#4e3465"/><rect x="1680" y="180" width="30" height="30" fill="#4d3566"/><rect x="1710" y="180" width="30" height="30" fill="#4d3566"/><rect x="1740" y="180" width="30" height="30" fill="#4d3666"/><rect x="1770" y="180" width="30" height="30" fill="#4c3667"/><rect x="1800" y="180" width="30" height="30" fill="#4c3667"/><rect x="1830" y="180" width="30" height="30" fill="#4c3667"/><rect x="1860" y="180" width="30" height="30" fill="#4c3667"/><rect x="1890" y="180" width="30" height="30" fill="#4c3667"/><rect x="1920" y="180" width="30" height="30" fill="#4c3667"/><rect x="1950" y="180" width="30" height="30" fill="#4c3667"/><rect x="1980" y="180" width="30" height="30" fill="#4c3667"/><rect x="-60" y="210" width="30" height="30" fill="#4a3b6d"/><rect x="-30" y="210" width="30" height="30" fill="#4b3a6c"/><rect x="0" y="210" width="30" height="30" fill="#4b3a6c"/><rect x="30" y="210" width="30" height="30" fill="#4b3b6d"/><rect x="60" y="210" width="30" height="30" fill="#4a3b6e"/><rect x="90" y="210" width="30" height="30" fill="#493d6f"/><rect x="120" y="210" width="30" height="30" fill="#493e70"/><rect x="150" y="210" width="30" height="30" fill="#493e71"/><rect x="180" y="210" width="30" height="30" fill="#493d6f"/><rect x="210" y="210" width="30" height="30" fill="#4a3c6e"/><rect x="240" y="210" width="30" height="30" fill="#4b3b6d"/><rect x="270" y="210" width="30" height="30" fill="#4b3a6c"/><rect x="300" y="210" width="30" height="30" fill="#4b3a6c"/><rect x="330" y="210" width="30" height="30" fill="#4b3b6d"/><rect x="360" y="210" width="30" height="30" fill="#4a3c6e"/><rect x="390" y="210" width="30" height="30" fill="#493d70"/><rect x="420" y="210" width="30" height="30" fill="#473f71"/><rect x="450" y="210" width="30" height="30" fill="#464073"/><rect x="480" y="210" width="30" height="30" fill="#464174"/><rect x="510" y="210" width="30" height="30" fill="#454174"/><rect x="540" y="210" width="30" height="30" fill="#454174"/><rect x="570" y="210" width="30" height="30" fill="#454174"/><rect x="600" y="210" width="30" height="30" fill="#454175"/><rect x="630" y="210" width="30" height="30" fill="#454275"/><rect x="660" y="210" width="30" height="30" fill="#454275"/><rect x="690" y="210" width="30" height="30" fill="#454175"/><rect x="720" y="210" width="30" height="30" fill="#454175"/><rect x="750" y="210" width="30" height="30" fill="#454174"/><rect x="780" y="210" width="30" height="30" fill="#464073"/><rect x="810" y="210" width="30" height="30" fill="#473f72"/><rect x="840" y="210" width="30" height="30" fill="#473e72"/><rect x="870" y="210" width="30" height="30" fill="#483d71"/><rect x="900" y="210" width="30" height="30" fill="#483d70"/><rect x="930" y="210" width="30" height="30" fill="#483c70"/><rect x="960" y="210" width="30" height="30" fill="#483c70"/><rect x="990" y="210" width="30" height="30" fill="#483c6f"/><rect x="1020" y="210" width="30" height="30" fill="#493c6f"/><rect x="1050" y="210" width="30" height="30" fill="#493b6e"/><rect x="1080" y="210" width="30" height="30" fill="#493b6e"/><rect x="1110" y="210" width="30" height="30" fill="#493a6d"/><rect x="1140" y="210" width="30" height="30" fill="#4a3a6c"/><rect x="1170" y="210" width="30" height="30" fill="#4a396c"/><rect x="1200" y="210" width="30" height="30" fill="#4a396b"/><rect x="1230" y="210" width="30" height="30" fill="#4b386a"/><rect x="1260" y="210" width="30" height="30" fill="#4b386a"/><rect x="1290" y="210" width="30" height="30" fill="#4c3769"/><rect x="1320" y="210" width="30" height="30" fill="#4d3667"/><rect x="1350" y="210" width="30" height="30" fill="#4e3565"/><rect x="1380" y="210" width="30" height="30" fill="#503363"/><rect x="1410" y="210" width="30" height="30" fill="#513161"/><rect x="1440" y="210" width="30" height="30" fill="#523060"/><rect x="1470" y="210" width="30" height="30" fill="#52305f"/><rect x="1500" y="210" width="30" height="30" fill="#52305f"/><rect x="1530" y="210" width="30" height="30" fill="#52305f"/><rect x="1560" y="210" width="30" height="30" fill="#513160"/><rect x="1590" y="210" width="30" height="30" fill="#503262"/><rect x="1620" y="210" width="30" height="30" fill="#4f3363"/><rect x="1650" y="210" width="30" height="30" fill="#4f3464"/><rect x="1680" y="210" width="30" height="30" fill="#4e3565"/><rect x="1710" y="210" width="30" height="30" fill="#4e3566"/><rect x="1740" y="210" width="30" height="30" fill="#4d3566"/><rect x="1770" y="210" width="30" height="30" fill="#4d3566"/><rect x="1800" y="210" width="30" height="30" fill="#4d3667"/><rect x="1830" y="210" width="30" height="30" fill="#4c3667"/><rect x="1860" y="210" width="30" height="30" fill="#4c3667"/><rect x="1890" y="210" width="30" height="30" fill="#4c3667"/><rect x="1920" y="210" width="30" height="30" fill="#4c3667"/><rect x="1950" y="210" width="30" height="30" fill="#4c3667"/><rect x="1980" y="210" width="30" height="30" fill="#4d3667"/><rect x="-60" y="240" width="30" height="30" fill="#4a3b6e"/><rect x="-30" y="240" width="30" height="30" fill="#4b3a6c"/><rect x="0" y="240" width="30" height="30" fill="#4b3a6c"/><rect x="30" y="240" width="30" height="30" fill="#4b3b6d"/><rect x="60" y="240" width="30" height="30" fill="#4a3c6e"/><rect x="90" y="240" width="30" height="30" fill="#493e70"/><rect x="120" y="240" width="30" height="30" fill="#483f72"/><rect x="150" y="240" width="30" height="30" fill="#483f71"/><rect x="180" y="240" width="30" height="30" fill="#493e70"/><rect x="210" y="240" width="30" height="30" fill="#4a3c6e"/><rect x="240" y="240" width="30" height="30" fill="#4b3b6d"/><rect x="270" y="240" width="30" height="30" fill="#4b3a6c"/><rect x="300" y="240" width="30" height="30" fill="#4b3a6c"/><rect x="330" y="240" width="30" height="30" fill="#4b3b6d"/><rect x="360" y="240" width="30" height="30" fill="#4a3c6e"/><rect x="390" y="240" width="30" height="30" fill="#483e70"/><rect x="420" y="240" width="30" height="30" fill="#474072"/><rect x="450" y="240" width="30" height="30" fill="#454274"/><rect x="480" y="240" width="30" height="30" fill="#454375"/><rect x="510" y="240" width="30" height="30" fill="#444376"/><rect x="540" y="240" width="30" height="30" fill="#444377"/><rect x="570" y="240" width="30" height="30" fill="#434477"/><rect x="600" y="240" width="30" height="30" fill="#434477"/><rect x="630" y="240" width="30" height="30" fill="#434477"/><rect x="660" y="240" width="30" height="30" fill="#434477"/><rect x="690" y="240" width="30" height="30" fill="#434377"/><rect x="720" y="240" width="30" height="30" fill="#444377"/><rect x="750" y="240" width="30" height="30" fill="#444376"/><rect x="780" y="240" width="30" height="30" fill="#454275"/><rect x="810" y="240" width="30" height="30" fill="#454175"/><rect x="840" y="240" width="30" height="30" fill="#464074"/><rect x="870" y="240" width="30" height="30" fill="#473f73"/><rect x="900" y="240" width="30" height="30" fill="#473f72"/><rect x="930" y="240" width="30" height="30" fill="#473e72"/><rect x="960" y="240" width="30" height="30" fill="#473e71"/><rect x="990" y="240" width="30" height="30" fill="#483d70"/><rect x="1020" y="240" width="30" height="30" fill="#483c70"/><rect x="1050" y="240" width="30" height="30" fill="#483c6f"/><rect x="1080" y="240" width="30" height="30" fill="#483c6f"/><rect x="1110" y="240" width="30" height="30" fill="#493b6e"/><rect x="1140" y="240" width="30" height="30" fill="#493b6d"/><rect x="1170" y="240" width="30" height="30" fill="#493a6d"/><rect x="1200" y="240" width="30" height="30" fill="#4a3a6c"/><rect x="1230" y="240" width="30" height="30" fill="#4a3a6c"/><rect x="1260" y="240" width="30" height="30" fill="#4b396b"/><rect x="1290" y="240" width="30" height="30" fill="#4b386a"/><rect x="1320" y="240" width="30" height="30" fill="#4c3768"/><rect x="1350" y="240" width="30" height="30" fill="#4e3566"/><rect x="1380" y="240" width="30" height="30" fill="#503363"/><rect x="1410" y="240" width="30" height="30" fill="#513161"/><rect x="1440" y="240" width="30" height="30" fill="#52305f"/><rect x="1470" y="240" width="30" height="30" fill="#52305f"/><rect x="1500" y="240" width="30" height="30" fill="#52305f"/><rect x="1530" y="240" width="30" height="30" fill="#52305f"/><rect x="1560" y="240" width="30" height="30" fill="#513160"/><rect x="1590" y="240" width="30" height="30" fill="#503262"/><rect x="1620" y="240" width="30" height="30" fill="#4f3363"/><rect x="1650" y="240" width="30" height="30" fill="#4f3464"/><rect x="1680" y="240" width="30" height="30" fill="#4e3465"/><rect x="1710" y="240" width="30" height="30" fill="#4e3465"/><rect x="1740" y="240" width="30" height="30" fill="#4e3565"/><rect x="1770" y="240" width="30" height="30" fill="#4e3566"/><rect x="1800" y="240" width="30" height="30" fill="#4d3566"/><rect x="1830" y="240" width="30" height="30" fill="#4d3566"/><rect x="1860" y="240" width="30" height="30" fill="#4d3667"/><rect x="1890" y="240" width="30" height="30" fill="#4c3667"/><rect x="1920" y="240" width="30" height="30" fill="#4d3667"/><rect x="1950" y="240" width="30" height="30" fill="#4d3566"/><rect x="1980" y="240" width="30" height="30" fill="#4d3566"/><rect x="-60" y="270" width="30" height="30" fill="#4a3d6f"/><rect x="-30" y="270" width="30" height="30" fill="#4a3b6e"/><rect x="0" y="270" width="30" height="30" fill="#4a3b6d"/><rect x="30" y="270" width="30" height="30" fill="#4a3c6e"/><rect x="60" y="270" width="30" height="30" fill="#493e70"/><rect x="90" y="270" width="30" height="30" fill="#483f72"/><rect x="120" y="270" width="30" height="30" fill="#484073"/><rect x="150" y="270" width="30" height="30" fill="#484073"/><rect x="180" y="270" width="30" height="30" fill="#483f71"/><rect x="210" y="270" width="30" height="30" fill="#493d6f"/><rect x="240" y="270" width="30" height="30" fill="#4a3b6d"/><rect x="270" y="270" width="30" height="30" fill="#4b3a6c"/><rect x="300" y="270" width="30" height="30" fill="#4b3a6c"/><rect x="330" y="270" width="30" height="30" fill="#4a3b6d"/><rect x="360" y="270" width="30" height="30" fill="#493d6f"/><rect x="390" y="270" width="30" height="30" fill="#483f71"/><rect x="420" y="270" width="30" height="30" fill="#464174"/><rect x="450" y="270" width="30" height="30" fill="#444376"/><rect x="480" y="270" width="30" height="30" fill="#434477"/><rect x="510" y="270" width="30" height="30" fill="#434578"/><rect x="540" y="270" width="30" height="30" fill="#424578"/><rect x="570" y="270" width="30" height="30" fill="#424579"/><rect x="600" y="270" width="30" height="30" fill="#424579"/><rect x="630" y="270" width="30" height="30" fill="#424579"/><rect x="660" y="270" width="30" height="30" fill="#424579"/><rect x="690" y="270" width="30" height="30" fill="#424579"/><rect x="720" y="270" width="30" height="30" fill="#434478"/><rect x="750" y="270" width="30" height="30" fill="#434478"/><rect x="780" y="270" width="30" height="30" fill="#444377"/><rect x="810" y="270" width="30" height="30" fill="#454376"/><rect x="840" y="270" width="30" height="30" fill="#454276"/><rect x="870" y="270" width="30" height="30" fill="#464175"/><rect x="900" y="270" width="30" height="30" fill="#464074"/><rect x="930" y="270" width="30" height="30" fill="#473f73"/><rect x="960" y="270" width="30" height="30" fill="#473e72"/><rect x="990" y="270" width="30" height="30" fill="#473d71"/><rect x="1020" y="270" width="30" height="30" fill="#473d70"/><rect x="1050" y="270" width="30" height="30" fill="#483c70"/><rect x="1080" y="270" width="30" height="30" fill="#483c6f"/><rect x="1110" y="270" width="30" height="30" fill="#483c6e"/><rect x="1140" y="270" width="30" height="30" fill="#493b6e"/><rect x="1170" y="270" width="30" height="30" fill="#493b6d"/><rect x="1200" y="270" width="30" height="30" fill="#493b6c"/><rect x="1230" y="270" width="30" height="30" fill="#4a3a6c"/><rect x="1260" y="270" width="30" height="30" fill="#4a3a6c"/><rect x="1290" y="270" width="30" height="30" fill="#4b396b"/><rect x="1320" y="270" width="30" height="30" fill="#4c3869"/><rect x="1350" y="270" width="30" height="30" fill="#4d3667"/><rect x="1380" y="270" width="30" height="30" fill="#4f3464"/><rect x="1410" y="270" width="30" height="30" fill="#513261"/><rect x="1440" y="270" width="30" height="30" fill="#513160"/><rect x="1470" y="270" width="30" height="30" fill="#52305f"/><rect x="1500" y="270" width="30" height="30" fill="#52305f"/><rect x="1530" y="270" width="30" height="30" fill="#523160"/><rect x="1560" y="270" width="30" height="30" fill="#513161"/><rect x="1590" y="270" width="30" height="30" fill="#503262"/><rect x="1620" y="270" width="30" height="30" fill="#4f3363"/><rect x="1650" y="270" width="30" height="30" fill="#4f3464"/><rect x="1680" y="270" width="30" height="30" fill="#4f3465"/><rect x="1710" y="270" width="30" height="30" fill="#4f3465"/><rect x="1740" y="270" width="30" height="30" fill="#4f3465"/><rect x="1770" y="270" width="30" height="30" fill="#4f3464"/><rect x="1800" y="270" width="30" height="30" fill="#4f3465"/><rect x="1830" y="270" width="30" height="30" fill="#4f3465"/><rect x="1860" y="270" width="30" height="30" fill="#4e3465"/><rect x="1890" y="270" width="30" height="30" fill="#4e3465"/><rect x="1920" y="270" width="30" height="30" fill="#4e3465"/><rect x="1950" y="270" width="30" height="30" fill="#4e3465"/><rect x="1980" y="270" width="30" height="30" fill="#4f3465"/><rect x="-60" y="300" width="30" height="30" fill="#484074"/><rect x="-30" y="300" width="30" height="30" fill="#484074"/><rect x="0" y="300" width="30" height="30" fill="#484074"/><rect x="30" y="300" width="30" height="30" fill="#484074"/><rect x="60" y="300" width="30" height="30" fill="#484174"/><rect x="90" y="300" width="30" height="30" fill="#474175"/><rect x="120" y="300" width="30" height="30" fill="#474275"/><rect x="150" y="300" width="30" height="30" fill="#474275"/><rect x="180" y="300" width="30" height="30" fill="#474173"/><rect x="210" y="300" width="30" height="30" fill="#483f71"/><rect x="240" y="300" width="30" height="30" fill="#493d6f"/><rect x="270" y="300" width="30" height="30" fill="#4a3c6e"/><rect x="300" y="300" width="30" height="30" fill="#4a3c6e"/><rect x="330" y="300" width="30" height="30" fill="#493d6f"/><rect x="360" y="300" width="30" height="30" fill="#483f71"/><rect x="390" y="300" width="30" height="30" fill="#464173"/><rect x="420" y="300" width="30" height="30" fill="#454376"/><rect x="450" y="300" width="30" height="30" fill="#434577"/><rect x="480" y="300" width="30" height="30" fill="#424678"/><rect x="510" y="300" width="30" height="30" fill="#424679"/><rect x="540" y="300" width="30" height="30" fill="#424679"/><rect x="570" y="300" width="30" height="30" fill="#41467a"/><rect x="600" y="300" width="30" height="30" fill="#41457a"/><rect x="630" y="300" width="30" height="30" fill="#41457a"/><rect x="660" y="300" width="30" height="30" fill="#41457a"/><rect x="690" y="300" width="30" height="30" fill="#42457a"/><rect x="720" y="300" width="30" height="30" fill="#424579"/><rect x="750" y="300" width="30" height="30" fill="#434579"/><rect x="780" y="300" width="30" height="30" fill="#434578"/><rect x="810" y="300" width="30" height="30" fill="#444478"/><rect x="840" y="300" width="30" height="30" fill="#444377"/><rect x="870" y="300" width="30" height="30" fill="#454276"/><rect x="900" y="300" width="30" height="30" fill="#464175"/><rect x="930" y="300" width="30" height="30" fill="#464074"/><rect x="960" y="300" width="30" height="30" fill="#473f72"/><rect x="990" y="300" width="30" height="30" fill="#473e71"/><rect x="1020" y="300" width="30" height="30" fill="#473d70"/><rect x="1050" y="300" width="30" height="30" fill="#483c70"/><rect x="1080" y="300" width="30" height="30" fill="#483c6f"/><rect x="1110" y="300" width="30" height="30" fill="#483b6e"/><rect x="1140" y="300" width="30" height="30" fill="#493b6d"/><rect x="1170" y="300" width="30" height="30" fill="#493b6d"/><rect x="1200" y="300" width="30" height="30" fill="#493b6c"/><rect x="1230" y="300" width="30" height="30" fill="#493b6c"/><rect x="1260" y="300" width="30" height="30" fill="#4a3a6c"/><rect x="1290" y="300" width="30" height="30" fill="#4a3a6b"/><rect x="1320" y="300" width="30" height="30" fill="#4b396a"/><rect x="1350" y="300" width="30" height="30" fill="#4c3768"/><rect x="1380" y="300" width="30" height="30" fill="#4e3565"/><rect x="1410" y="300" width="30" height="30" fill="#503363"/><rect x="1440" y="300" width="30" height="30" fill="#513261"/><rect x="1470" y="300" width="30" height="30" fill="#513160"/><rect x="1500" y="300" width="30" height="30" fill="#513160"/><rect x="1530" y="300" width="30" height="30" fill="#513161"/><rect x="1560" y="300" width="30" height="30" fill="#503262"/><rect x="1590" y="300" width="30" height="30" fill="#503363"/><rect x="1620" y="300" width="30" height="30" fill="#4f3464"/><rect x="1650" y="300" width="30" height="30" fill="#4f3464"/><rect x="1680" y="300" width="30" height="30" fill="#4f3464"/><rect x="1710" y="300" width="30" height="30" fill="#4f3364"/><rect x="1740" y="300" width="30" height="30" fill="#503364"/><rect x="1770" y="300" width="30" height="30" fill="#503263"/><rect x="1800" y="300" width="30" height="30" fill="#513263"/><rect x="1830" y="300" width="30" height="30" fill="#513263"/><rect x="1860" y="300" width="30" height="30" fill="#513263"/><rect x="1890" y="300" width="30" height="30" fill="#513263"/><rect x="1920" y="300" width="30" height="30" fill="#513263"/><rect x="1950" y="300" width="30" height="30" fill="#513264"/><rect x="1980" y="300" width="30" height="30" fill="#503264"/><rect x="-60" y="330" width="30" height="30" fill="#464378"/><rect x="-30" y="330" width="30" height="30" fill="#464479"/><rect x="0" y="330" width="30" height="30" fill="#464479"/><rect x="30" y="330" width="30" height="30" fill="#464379"/><rect x="60" y="330" width="30" height="30" fill="#464378"/><rect x="90" y="330" width="30" height="30" fill="#464477"/><rect x="120" y="330" width="30" height="30" fill="#464477"/><rect x="150" y="330" width="30" height="30" fill="#454477"/><rect x="180" y="330" width="30" height="30" fill="#464376"/><rect x="210" y="330" width="30" height="30" fill="#464274"/><rect x="240" y="330" width="30" height="30" fill="#474072"/><rect x="270" y="330" width="30" height="30" fill="#483f71"/><rect x="300" y="330" width="30" height="30" fill="#483f71"/><rect x="330" y="330" width="30" height="30" fill="#474072"/><rect x="360" y="330" width="30" height="30" fill="#464274"/><rect x="390" y="330" width="30" height="30" fill="#444476"/><rect x="420" y="330" width="30" height="30" fill="#434578"/><rect x="450" y="330" width="30" height="30" fill="#424679"/><rect x="480" y="330" width="30" height="30" fill="#414779"/><rect x="510" y="330" width="30" height="30" fill="#41477a"/><rect x="540" y="330" width="30" height="30" fill="#41467a"/><rect x="570" y="330" width="30" height="30" fill="#41467a"/><rect x="600" y="330" width="30" height="30" fill="#41457a"/><rect x="630" y="330" width="30" height="30" fill="#41457a"/><rect x="660" y="330" width="30" height="30" fill="#41457a"/><rect x="690" y="330" width="30" height="30" fill="#41457a"/><rect x="720" y="330" width="30" height="30" fill="#41467a"/><rect x="750" y="330" width="30" height="30" fill="#42467a"/><rect x="780" y="330" width="30" height="30" fill="#434579"/><rect x="810" y="330" width="30" height="30" fill="#434579"/><rect x="840" y="330" width="30" height="30" fill="#444478"/><rect x="870" y="330" width="30" height="30" fill="#454377"/><rect x="900" y="330" width="30" height="30" fill="#454276"/><rect x="930" y="330" width="30" height="30" fill="#464074"/><rect x="960" y="330" width="30" height="30" fill="#463f73"/><rect x="990" y="330" width="30" height="30" fill="#473d71"/><rect x="1020" y="330" width="30" height="30" fill="#473c70"/><rect x="1050" y="330" width="30" height="30" fill="#483b6f"/><rect x="1080" y="330" width="30" height="30" fill="#483b6f"/><rect x="1110" y="330" width="30" height="30" fill="#483b6e"/><rect x="1140" y="330" width="30" height="30" fill="#493b6d"/><rect x="1170" y="330" width="30" height="30" fill="#493b6c"/><rect x="1200" y="330" width="30" height="30" fill="#4a3a6b"/><rect x="1230" y="330" width="30" height="30" fill="#4a3a6b"/><rect x="1260" y="330" width="30" height="30" fill="#4a3b6b"/><rect x="1290" y="330" width="30" height="30" fill="#4a3a6c"/><rect x="1320" y="330" width="30" height="30" fill="#4a3a6b"/><rect x="1350" y="330" width="30" height="30" fill="#4b396a"/><rect x="1380" y="330" width="30" height="30" fill="#4d3767"/><rect x="1410" y="330" width="30" height="30" fill="#4e3565"/><rect x="1440" y="330" width="30" height="30" fill="#4f3363"/><rect x="1470" y="330" width="30" height="30" fill="#503362"/><rect x="1500" y="330" width="30" height="30" fill="#503262"/><rect x="1530" y="330" width="30" height="30" fill="#503362"/><rect x="1560" y="330" width="30" height="30" fill="#503363"/><rect x="1590" y="330" width="30" height="30" fill="#4f3464"/><rect x="1620" y="330" width="30" height="30" fill="#4f3465"/><rect x="1650" y="330" width="30" height="30" fill="#4f3465"/><rect x="1680" y="330" width="30" height="30" fill="#4f3464"/><rect x="1710" y="330" width="30" height="30" fill="#503363"/><rect x="1740" y="330" width="30" height="30" fill="#513263"/><rect x="1770" y="330" width="30" height="30" fill="#513162"/><rect x="1800" y="330" width="30" height="30" fill="#523161"/><rect x="1830" y="330" width="30" height="30" fill="#533061"/><rect x="1860" y="330" width="30" height="30" fill="#533061"/><rect x="1890" y="330" width="30" height="30" fill="#543061"/><rect x="1920" y="330" width="30" height="30" fill="#533062"/><rect x="1950" y="330" width="30" height="30" fill="#533062"/><rect x="1980" y="330" width="30" height="30" fill="#523163"/><rect x="-60" y="360" width="30" height="30" fill="#46447a"/><rect x="-30" y="360" width="30" height="30" fill="#46447a"/><rect x="0" y="360" width="30" height="30" fill="#46447a"/><rect x="30" y="360" width="30" height="30" fill="#46447a"/><rect x="60" y="360" width="30" height="30" fill="#464579"/><rect x="90" y="360" width="30" height="30" fill="#454579"/><rect x="120" y="360" width="30" height="30" fill="#454679"/><rect x="150" y="360" width="30" height="30" fill="#444679"/><rect x="180" y="360" width="30" height="30" fill="#444678"/><rect x="210" y="360" width="30" height="30" fill="#444577"/><rect x="240" y="360" width="30" height="30" fill="#454476"/><rect x="270" y="360" width="30" height="30" fill="#454375"/><rect x="300" y="360" width="30" height="30" fill="#454375"/><rect x="330" y="360" width="30" height="30" fill="#444476"/><rect x="360" y="360" width="30" height="30" fill="#434577"/><rect x="390" y="360" width="30" height="30" fill="#424779"/><rect x="420" y="360" width="30" height="30" fill="#41487a"/><rect x="450" y="360" width="30" height="30" fill="#41487a"/><rect x="480" y="360" width="30" height="30" fill="#40487a"/><rect x="510" y="360" width="30" height="30" fill="#40487a"/><rect x="540" y="360" width="30" height="30" fill="#40477a"/><rect x="570" y="360" width="30" height="30" fill="#41467a"/><rect x="600" y="360" width="30" height="30" fill="#41457a"/><rect x="630" y="360" width="30" height="30" fill="#41457a"/><rect x="660" y="360" width="30" height="30" fill="#41457a"/><rect x="690" y="360" width="30" height="30" fill="#41457a"/><rect x="720" y="360" width="30" height="30" fill="#41467a"/><rect x="750" y="360" width="30" height="30" fill="#42467a"/><rect x="780" y="360" width="30" height="30" fill="#42467a"/><rect x="810" y="360" width="30" height="30" fill="#43467a"/><rect x="840" y="360" width="30" height="30" fill="#444579"/><rect x="870" y="360" width="30" height="30" fill="#444478"/><rect x="900" y="360" width="30" height="30" fill="#454276"/><rect x="930" y="360" width="30" height="30" fill="#464074"/><rect x="960" y="360" width="30" height="30" fill="#463f73"/><rect x="990" y="360" width="30" height="30" fill="#473d71"/><rect x="1020" y="360" width="30" height="30" fill="#473b6f"/><rect x="1050" y="360" width="30" height="30" fill="#483b6f"/><rect x="1080" y="360" width="30" height="30" fill="#483a6e"/><rect x="1110" y="360" width="30" height="30" fill="#483b6e"/><rect x="1140" y="360" width="30" height="30" fill="#493b6d"/><rect x="1170" y="360" width="30" height="30" fill="#4a3a6b"/><rect x="1200" y="360" width="30" height="30" fill="#4a3a6a"/><rect x="1230" y="360" width="30" height="30" fill="#4a3a6b"/><rect x="1260" y="360" width="30" height="30" fill="#4a3b6b"/><rect x="1290" y="360" width="30" height="30" fill="#4a3b6c"/><rect x="1320" y="360" width="30" height="30" fill="#4a3b6c"/><rect x="1350" y="360" width="30" height="30" fill="#4a3a6b"/><rect x="1380" y="360" width="30" height="30" fill="#4c386a"/><rect x="1410" y="360" width="30" height="30" fill="#4d3768"/><rect x="1440" y="360" width="30" height="30" fill="#4e3666"/><rect x="1470" y="360" width="30" height="30" fill="#4e3565"/><rect x="1500" y="360" width="30" height="30" fill="#4f3465"/><rect x="1530" y="360" width="30" height="30" fill="#4f3465"/><rect x="1560" y="360" width="30" height="30" fill="#4e3565"/><rect x="1590" y="360" width="30" height="30" fill="#4e3565"/><rect x="1620" y="360" width="30" height="30" fill="#4e3565"/><rect x="1650" y="360" width="30" height="30" fill="#4f3465"/><rect x="1680" y="360" width="30" height="30" fill="#4f3364"/><rect x="1710" y="360" width="30" height="30" fill="#503263"/><rect x="1740" y="360" width="30" height="30" fill="#513162"/><rect x="1770" y="360" width="30" height="30" fill="#523161"/><rect x="1800" y="360" width="30" height="30" fill="#533060"/><rect x="1830" y="360" width="30" height="30" fill="#542f60"/><rect x="1860" y="360" width="30" height="30" fill="#552f61"/><rect x="1890" y="360" width="30" height="30" fill="#552f61"/><rect x="1920" y="360" width="30" height="30" fill="#552f61"/><rect x="1950" y="360" width="30" height="30" fill="#542f61"/><rect x="1980" y="360" width="30" height="30" fill="#533062"/><rect x="-60" y="390" width="30" height="30" fill="#45467a"/><rect x="-30" y="390" width="30" height="30" fill="#46457a"/><rect x="0" y="390" width="30" height="30" fill="#46457a"/><rect x="30" y="390" width="30" height="30" fill="#45457a"/><rect x="60" y="390" width="30" height="30" fill="#45467a"/><rect x="90" y="390" width="30" height="30" fill="#44477a"/><rect x="120" y="390" width="30" height="30" fill="#43487b"/><rect x="150" y="390" width="30" height="30" fill="#43487b"/><rect x="180" y="390" width="30" height="30" fill="#43487a"/><rect x="210" y="390" width="30" height="30" fill="#43487a"/><rect x="240" y="390" width="30" height="30" fill="#434779"/><rect x="270" y="390" width="30" height="30" fill="#424779"/><rect x="300" y="390" width="30" height="30" fill="#424779"/><rect x="330" y="390" width="30" height="30" fill="#41487a"/><rect x="360" y="390" width="30" height="30" fill="#41497a"/><rect x="390" y="390" width="30" height="30" fill="#40497b"/><rect x="420" y="390" width="30" height="30" fill="#404a7b"/><rect x="450" y="390" width="30" height="30" fill="#3f4a7b"/><rect x="480" y="390" width="30" height="30" fill="#3f497b"/><rect x="510" y="390" width="30" height="30" fill="#3f497b"/><rect x="540" y="390" width="30" height="30" fill="#40487a"/><rect x="570" y="390" width="30" height="30" fill="#40467a"/><rect x="600" y="390" width="30" height="30" fill="#41457a"/><rect x="630" y="390" width="30" height="30" fill="#41457a"/><rect x="660" y="390" width="30" height="30" fill="#41457a"/><rect x="690" y="390" width="30" height="30" fill="#41467a"/><rect x="720" y="390" width="30" height="30" fill="#41467a"/><rect x="750" y="390" width="30" height="30" fill="#41477b"/><rect x="780" y="390" width="30" height="30" fill="#42477b"/><rect x="810" y="390" width="30" height="30" fill="#43467a"/><rect x="840" y="390" width="30" height="30" fill="#43467a"/><rect x="870" y="390" width="30" height="30" fill="#444479"/><rect x="900" y="390" width="30" height="30" fill="#454377"/><rect x="930" y="390" width="30" height="30" fill="#454175"/><rect x="960" y="390" width="30" height="30" fill="#463f73"/><rect x="990" y="390" width="30" height="30" fill="#473d71"/><rect x="1020" y="390" width="30" height="30" fill="#473b6f"/><rect x="1050" y="390" width="30" height="30" fill="#483a6e"/><rect x="1080" y="390" width="30" height="30" fill="#483a6e"/><rect x="1110" y="390" width="30" height="30" fill="#483a6e"/><rect x="1140" y="390" width="30" height="30" fill="#493b6d"/><rect x="1170" y="390" width="30" height="30" fill="#4a3a6a"/><rect x="1200" y="390" width="30" height="30" fill="#4a3a6a"/><rect x="1230" y="390" width="30" height="30" fill="#4a3a6a"/><rect x="1260" y="390" width="30" height="30" fill="#4a3a6b"/><rect x="1290" y="390" width="30" height="30" fill="#493b6c"/><rect x="1320" y="390" width="30" height="30" fill="#493b6c"/><rect x="1350" y="390" width="30" height="30" fill="#4a3b6c"/><rect x="1380" y="390" width="30" height="30" fill="#4b3a6b"/><rect x="1410" y="390" width="30" height="30" fill="#4b396a"/><rect x="1440" y="390" width="30" height="30" fill="#4c3869"/><rect x="1470" y="390" width="30" height="30" fill="#4d3768"/><rect x="1500" y="390" width="30" height="30" fill="#4d3667"/><rect x="1530" y="390" width="30" height="30" fill="#4d3667"/><rect x="1560" y="390" width="30" height="30" fill="#4d3667"/><rect x="1590" y="390" width="30" height="30" fill="#4e3666"/><rect x="1620" y="390" width="30" height="30" fill="#4e3566"/><rect x="1650" y="390" width="30" height="30" fill="#4f3465"/><rect x="1680" y="390" width="30" height="30" fill="#503364"/><rect x="1710" y="390" width="30" height="30" fill="#513262"/><rect x="1740" y="390" width="30" height="30" fill="#523161"/><rect x="1770" y="390" width="30" height="30" fill="#523060"/><rect x="1800" y="390" width="30" height="30" fill="#53305f"/><rect x="1830" y="390" width="30" height="30" fill="#532f5f"/><rect x="1860" y="390" width="30" height="30" fill="#552e60"/><rect x="1890" y="390" width="30" height="30" fill="#562e61"/><rect x="1920" y="390" width="30" height="30" fill="#552e61"/><rect x="1950" y="390" width="30" height="30" fill="#552f61"/><rect x="1980" y="390" width="30" height="30" fill="#543061"/><rect x="-60" y="420" width="30" height="30" fill="#44487b"/><rect x="-30" y="420" width="30" height="30" fill="#44487b"/><rect x="0" y="420" width="30" height="30" fill="#44497b"/><rect x="30" y="420" width="30" height="30" fill="#44487b"/><rect x="60" y="420" width="30" height="30" fill="#44487b"/><rect x="90" y="420" width="30" height="30" fill="#43497c"/><rect x="120" y="420" width="30" height="30" fill="#424a7c"/><rect x="150" y="420" width="30" height="30" fill="#414a7c"/><rect x="180" y="420" width="30" height="30" fill="#414a7c"/><rect x="210" y="420" width="30" height="30" fill="#414a7c"/><rect x="240" y="420" width="30" height="30" fill="#414a7c"/><rect x="270" y="420" width="30" height="30" fill="#404a7c"/><rect x="300" y="420" width="30" height="30" fill="#404a7c"/><rect x="330" y="420" width="30" height="30" fill="#3f4b7c"/><rect x="360" y="420" width="30" height="30" fill="#3f4b7d"/><rect x="390" y="420" width="30" height="30" fill="#3e4b7d"/><rect x="420" y="420" width="30" height="30" fill="#3e4b7d"/><rect x="450" y="420" width="30" height="30" fill="#3e4b7c"/><rect x="480" y="420" width="30" height="30" fill="#3e4a7c"/><rect x="510" y="420" width="30" height="30" fill="#3e4a7b"/><rect x="540" y="420" width="30" height="30" fill="#3f497a"/><rect x="570" y="420" width="30" height="30" fill="#3f487a"/><rect x="600" y="420" width="30" height="30" fill="#40467a"/><rect x="630" y="420" width="30" height="30" fill="#41467a"/><rect x="660" y="420" width="30" height="30" fill="#41467a"/><rect x="690" y="420" width="30" height="30" fill="#41467a"/><rect x="720" y="420" width="30" height="30" fill="#41477b"/><rect x="750" y="420" width="30" height="30" fill="#41487b"/><rect x="780" y="420" width="30" height="30" fill="#42487b"/><rect x="810" y="420" width="30" height="30" fill="#42477b"/><rect x="840" y="420" width="30" height="30" fill="#43477b"/><rect x="870" y="420" width="30" height="30" fill="#444579"/><rect x="900" y="420" width="30" height="30" fill="#444378"/><rect x="930" y="420" width="30" height="30" fill="#454176"/><rect x="960" y="420" width="30" height="30" fill="#463f74"/><rect x="990" y="420" width="30" height="30" fill="#473d71"/><rect x="1020" y="420" width="30" height="30" fill="#473b70"/><rect x="1050" y="420" width="30" height="30" fill="#483a6e"/><rect x="1080" y="420" width="30" height="30" fill="#483a6e"/><rect x="1110" y="420" width="30" height="30" fill="#483a6e"/><rect x="1140" y="420" width="30" height="30" fill="#483b6d"/><rect x="1170" y="420" width="30" height="30" fill="#4a3a6b"/><rect x="1200" y="420" width="30" height="30" fill="#4a3a6a"/><rect x="1230" y="420" width="30" height="30" fill="#4a3a6b"/><rect x="1260" y="420" width="30" height="30" fill="#493b6b"/><rect x="1290" y="420" width="30" height="30" fill="#493b6c"/><rect x="1320" y="420" width="30" height="30" fill="#493c6d"/><rect x="1350" y="420" width="30" height="30" fill="#493c6d"/><rect x="1380" y="420" width="30" height="30" fill="#4a3b6d"/><rect x="1410" y="420" width="30" height="30" fill="#4a3a6c"/><rect x="1440" y="420" width="30" height="30" fill="#4b396b"/><rect x="1470" y="420" width="30" height="30" fill="#4b396a"/><rect x="1500" y="420" width="30" height="30" fill="#4c3869"/><rect x="1530" y="420" width="30" height="30" fill="#4c3768"/><rect x="1560" y="420" width="30" height="30" fill="#4d3768"/><rect x="1590" y="420" width="30" height="30" fill="#4d3667"/><rect x="1620" y="420" width="30" height="30" fill="#4e3566"/><rect x="1650" y="420" width="30" height="30" fill="#4e3465"/><rect x="1680" y="420" width="30" height="30" fill="#503364"/><rect x="1710" y="420" width="30" height="30" fill="#513262"/><rect x="1740" y="420" width="30" height="30" fill="#523160"/><rect x="1770" y="420" width="30" height="30" fill="#52305f"/><rect x="1800" y="420" width="30" height="30" fill="#52305f"/><rect x="1830" y="420" width="30" height="30" fill="#52305e"/><rect x="1860" y="420" width="30" height="30" fill="#542f60"/><rect x="1890" y="420" width="30" height="30" fill="#562e61"/><rect x="1920" y="420" width="30" height="30" fill="#552e61"/><rect x="1950" y="420" width="30" height="30" fill="#552f61"/><rect x="1980" y="420" width="30" height="30" fill="#542f61"/><rect x="-60" y="450" width="30" height="30" fill="#44497c"/><rect x="-30" y="450" width="30" height="30" fill="#444a7c"/><rect x="0" y="450" width="30" height="30" fill="#444a7c"/><rect x="30" y="450" width="30" height="30" fill="#444a7c"/><rect x="60" y="450" width="30" height="30" fill="#434a7c"/><rect x="90" y="450" width="30" height="30" fill="#424b7d"/><rect x="120" y="450" width="30" height="30" fill="#404c7e"/><rect x="150" y="450" width="30" height="30" fill="#3f4c7e"/><rect x="180" y="450" width="30" height="30" fill="#3f4c7e"/><rect x="210" y="450" width="30" height="30" fill="#3f4c7e"/><rect x="240" y="450" width="30" height="30" fill="#3f4c7d"/><rect x="270" y="450" width="30" height="30" fill="#3f4c7d"/><rect x="300" y="450" width="30" height="30" fill="#3e4c7e"/><rect x="330" y="450" width="30" height="30" fill="#3d4d7e"/><rect x="360" y="450" width="30" height="30" fill="#3c4d7e"/><rect x="390" y="450" width="30" height="30" fill="#3d4d7e"/><rect x="420" y="450" width="30" height="30" fill="#3d4d7e"/><rect x="450" y="450" width="30" height="30" fill="#3d4c7d"/><rect x="480" y="450" width="30" height="30" fill="#3d4b7c"/><rect x="510" y="450" width="30" height="30" fill="#3d4b7b"/><rect x="540" y="450" width="30" height="30" fill="#3d4a7a"/><rect x="570" y="450" width="30" height="30" fill="#3e4978"/><rect x="600" y="450" width="30" height="30" fill="#3e4878"/><rect x="630" y="450" width="30" height="30" fill="#3f4879"/><rect x="660" y="450" width="30" height="30" fill="#40477a"/><rect x="690" y="450" width="30" height="30" fill="#40487b"/><rect x="720" y="450" width="30" height="30" fill="#40487b"/><rect x="750" y="450" width="30" height="30" fill="#41497c"/><rect x="780" y="450" width="30" height="30" fill="#41497c"/><rect x="810" y="450" width="30" height="30" fill="#42487c"/><rect x="840" y="450" width="30" height="30" fill="#43477c"/><rect x="870" y="450" width="30" height="30" fill="#43467b"/><rect x="900" y="450" width="30" height="30" fill="#444479"/><rect x="930" y="450" width="30" height="30" fill="#454277"/><rect x="960" y="450" width="30" height="30" fill="#454075"/><rect x="990" y="450" width="30" height="30" fill="#463e73"/><rect x="1020" y="450" width="30" height="30" fill="#463c71"/><rect x="1050" y="450" width="30" height="30" fill="#463b70"/><rect x="1080" y="450" width="30" height="30" fill="#473b70"/><rect x="1110" y="450" width="30" height="30" fill="#473b70"/><rect x="1140" y="450" width="30" height="30" fill="#473c6f"/><rect x="1170" y="450" width="30" height="30" fill="#493b6d"/><rect x="1200" y="450" width="30" height="30" fill="#493b6c"/><rect x="1230" y="450" width="30" height="30" fill="#493b6c"/><rect x="1260" y="450" width="30" height="30" fill="#493c6d"/><rect x="1290" y="450" width="30" height="30" fill="#493c6e"/><rect x="1320" y="450" width="30" height="30" fill="#493c6e"/><rect x="1350" y="450" width="30" height="30" fill="#493c6e"/><rect x="1380" y="450" width="30" height="30" fill="#493c6e"/><rect x="1410" y="450" width="30" height="30" fill="#4a3b6d"/><rect x="1440" y="450" width="30" height="30" fill="#4a3b6c"/><rect x="1470" y="450" width="30" height="30" fill="#4b3a6b"/><rect x="1500" y="450" width="30" height="30" fill="#4b396a"/><rect x="1530" y="450" width="30" height="30" fill="#4b386a"/><rect x="1560" y="450" width="30" height="30" fill="#4c3869"/><rect x="1590" y="450" width="30" height="30" fill="#4c3768"/><rect x="1620" y="450" width="30" height="30" fill="#4d3667"/><rect x="1650" y="450" width="30" height="30" fill="#4e3566"/><rect x="1680" y="450" width="30" height="30" fill="#4f3364"/><rect x="1710" y="450" width="30" height="30" fill="#503262"/><rect x="1740" y="450" width="30" height="30" fill="#513161"/><rect x="1770" y="450" width="30" height="30" fill="#52305f"/><rect x="1800" y="450" width="30" height="30" fill="#52305e"/><rect x="1830" y="450" width="30" height="30" fill="#52305e"/><rect x="1860" y="450" width="30" height="30" fill="#53305f"/><rect x="1890" y="450" width="30" height="30" fill="#542f60"/><rect x="1920" y="450" width="30" height="30" fill="#552f61"/><rect x="1950" y="450" width="30" height="30" fill="#542f61"/><rect x="1980" y="450" width="30" height="30" fill="#543061"/><rect x="-60" y="480" width="30" height="30" fill="#434a7c"/><rect x="-30" y="480" width="30" height="30" fill="#444a7c"/><rect x="0" y="480" width="30" height="30" fill="#444a7c"/><rect x="30" y="480" width="30" height="30" fill="#434a7c"/><rect x="60" y="480" width="30" height="30" fill="#424b7d"/><rect x="90" y="480" width="30" height="30" fill="#404c7e"/><rect x="120" y="480" width="30" height="30" fill="#3e4d7f"/><rect x="150" y="480" width="30" height="30" fill="#3e4e7f"/><rect x="180" y="480" width="30" height="30" fill="#3e4e7f"/><rect x="210" y="480" width="30" height="30" fill="#3e4d7f"/><rect x="240" y="480" width="30" height="30" fill="#3e4d7f"/><rect x="270" y="480" width="30" height="30" fill="#3d4d7e"/><rect x="300" y="480" width="30" height="30" fill="#3c4e7f"/><rect x="330" y="480" width="30" height="30" fill="#3b4f7f"/><rect x="360" y="480" width="30" height="30" fill="#3b4f7f"/><rect x="390" y="480" width="30" height="30" fill="#3b4f7f"/><rect x="420" y="480" width="30" height="30" fill="#3c4e7e"/><rect x="450" y="480" width="30" height="30" fill="#3c4d7e"/><rect x="480" y="480" width="30" height="30" fill="#3c4c7d"/><rect x="510" y="480" width="30" height="30" fill="#3c4c7c"/><rect x="540" y="480" width="30" height="30" fill="#3c4b79"/><rect x="570" y="480" width="30" height="30" fill="#3d4976"/><rect x="600" y="480" width="30" height="30" fill="#3d4976"/><rect x="630" y="480" width="30" height="30" fill="#3e4977"/><rect x="660" y="480" width="30" height="30" fill="#3f4979"/><rect x="690" y="480" width="30" height="30" fill="#3f497b"/><rect x="720" y="480" width="30" height="30" fill="#404a7c"/><rect x="750" y="480" width="30" height="30" fill="#414a7d"/><rect x="780" y="480" width="30" height="30" fill="#414a7d"/><rect x="810" y="480" width="30" height="30" fill="#42497d"/><rect x="840" y="480" width="30" height="30" fill="#43497d"/><rect x="870" y="480" width="30" height="30" fill="#43477c"/><rect x="900" y="480" width="30" height="30" fill="#44467a"/><rect x="930" y="480" width="30" height="30" fill="#444478"/><rect x="960" y="480" width="30" height="30" fill="#454176"/><rect x="990" y="480" width="30" height="30" fill="#453f74"/><rect x="1020" y="480" width="30" height="30" fill="#453d72"/><rect x="1050" y="480" width="30" height="30" fill="#453c72"/><rect x="1080" y="480" width="30" height="30" fill="#443c72"/><rect x="1110" y="480" width="30" height="30" fill="#453c72"/><rect x="1140" y="480" width="30" height="30" fill="#463d71"/><rect x="1170" y="480" width="30" height="30" fill="#473d70"/><rect x="1200" y="480" width="30" height="30" fill="#483c6f"/><rect x="1230" y="480" width="30" height="30" fill="#483d6e"/><rect x="1260" y="480" width="30" height="30" fill="#483d6f"/><rect x="1290" y="480" width="30" height="30" fill="#483d6f"/><rect x="1320" y="480" width="30" height="30" fill="#483d6f"/><rect x="1350" y="480" width="30" height="30" fill="#483d6f"/><rect x="1380" y="480" width="30" height="30" fill="#493d6f"/><rect x="1410" y="480" width="30" height="30" fill="#493c6e"/><rect x="1440" y="480" width="30" height="30" fill="#493b6d"/><rect x="1470" y="480" width="30" height="30" fill="#4a3b6c"/><rect x="1500" y="480" width="30" height="30" fill="#4a3a6b"/><rect x="1530" y="480" width="30" height="30" fill="#4b396b"/><rect x="1560" y="480" width="30" height="30" fill="#4b386a"/><rect x="1590" y="480" width="30" height="30" fill="#4c3769"/><rect x="1620" y="480" width="30" height="30" fill="#4d3668"/><rect x="1650" y="480" width="30" height="30" fill="#4e3566"/><rect x="1680" y="480" width="30" height="30" fill="#4f3464"/><rect x="1710" y="480" width="30" height="30" fill="#503263"/><rect x="1740" y="480" width="30" height="30" fill="#513161"/><rect x="1770" y="480" width="30" height="30" fill="#523060"/><rect x="1800" y="480" width="30" height="30" fill="#52305f"/><rect x="1830" y="480" width="30" height="30" fill="#52305f"/><rect x="1860" y="480" width="30" height="30" fill="#53305f"/><rect x="1890" y="480" width="30" height="30" fill="#532f60"/><rect x="1920" y="480" width="30" height="30" fill="#542f60"/><rect x="1950" y="480" width="30" height="30" fill="#542f61"/><rect x="1980" y="480" width="30" height="30" fill="#533061"/><rect x="-60" y="510" width="30" height="30" fill="#424c7e"/><rect x="-30" y="510" width="30" height="30" fill="#424c7e"/><rect x="0" y="510" width="30" height="30" fill="#424c7e"/><rect x="30" y="510" width="30" height="30" fill="#414c7e"/><rect x="60" y="510" width="30" height="30" fill="#404d7e"/><rect x="90" y="510" width="30" height="30" fill="#3e4e7f"/><rect x="120" y="510" width="30" height="30" fill="#3d4f80"/><rect x="150" y="510" width="30" height="30" fill="#3c4f80"/><rect x="180" y="510" width="30" height="30" fill="#3d4e80"/><rect x="210" y="510" width="30" height="30" fill="#3d4e7f"/><rect x="240" y="510" width="30" height="30" fill="#3e4e7f"/><rect x="270" y="510" width="30" height="30" fill="#3d4e7f"/><rect x="300" y="510" width="30" height="30" fill="#3b4f7f"/><rect x="330" y="510" width="30" height="30" fill="#3a4f7f"/><rect x="360" y="510" width="30" height="30" fill="#39507f"/><rect x="390" y="510" width="30" height="30" fill="#3a507f"/><rect x="420" y="510" width="30" height="30" fill="#3b4f7f"/><rect x="450" y="510" width="30" height="30" fill="#3c4e7e"/><rect x="480" y="510" width="30" height="30" fill="#3c4d7e"/><rect x="510" y="510" width="30" height="30" fill="#3b4d7d"/><rect x="540" y="510" width="30" height="30" fill="#3b4c7b"/><rect x="570" y="510" width="30" height="30" fill="#3d4976"/><rect x="600" y="510" width="30" height="30" fill="#3d4875"/><rect x="630" y="510" width="30" height="30" fill="#3d4977"/><rect x="660" y="510" width="30" height="30" fill="#3e4a79"/><rect x="690" y="510" width="30" height="30" fill="#3f4b7c"/><rect x="720" y="510" width="30" height="30" fill="#404b7d"/><rect x="750" y="510" width="30" height="30" fill="#404b7e"/><rect x="780" y="510" width="30" height="30" fill="#414b7f"/><rect x="810" y="510" width="30" height="30" fill="#424b7f"/><rect x="840" y="510" width="30" height="30" fill="#424a7e"/><rect x="870" y="510" width="30" height="30" fill="#43497d"/><rect x="900" y="510" width="30" height="30" fill="#44477c"/><rect x="930" y="510" width="30" height="30" fill="#44457a"/><rect x="960" y="510" width="30" height="30" fill="#454378"/><rect x="990" y="510" width="30" height="30" fill="#454075"/><rect x="1020" y="510" width="30" height="30" fill="#443e73"/><rect x="1050" y="510" width="30" height="30" fill="#443c72"/><rect x="1080" y="510" width="30" height="30" fill="#443c72"/><rect x="1110" y="510" width="30" height="30" fill="#443c72"/><rect x="1140" y="510" width="30" height="30" fill="#453d73"/><rect x="1170" y="510" width="30" height="30" fill="#463e72"/><rect x="1200" y="510" width="30" height="30" fill="#473e72"/><rect x="1230" y="510" width="30" height="30" fill="#473e71"/><rect x="1260" y="510" width="30" height="30" fill="#473f71"/><rect x="1290" y="510" width="30" height="30" fill="#473f71"/><rect x="1320" y="510" width="30" height="30" fill="#483e71"/><rect x="1350" y="510" width="30" height="30" fill="#483e70"/><rect x="1380" y="510" width="30" height="30" fill="#483d6f"/><rect x="1410" y="510" width="30" height="30" fill="#493d6e"/><rect x="1440" y="510" width="30" height="30" fill="#493c6e"/><rect x="1470" y="510" width="30" height="30" fill="#493b6d"/><rect x="1500" y="510" width="30" height="30" fill="#4a3a6c"/><rect x="1530" y="510" width="30" height="30" fill="#4a3a6b"/><rect x="1560" y="510" width="30" height="30" fill="#4b396a"/><rect x="1590" y="510" width="30" height="30" fill="#4c3869"/><rect x="1620" y="510" width="30" height="30" fill="#4c3768"/><rect x="1650" y="510" width="30" height="30" fill="#4d3667"/><rect x="1680" y="510" width="30" height="30" fill="#4e3465"/><rect x="1710" y="510" width="30" height="30" fill="#4f3363"/><rect x="1740" y="510" width="30" height="30" fill="#503262"/><rect x="1770" y="510" width="30" height="30" fill="#513161"/><rect x="1800" y="510" width="30" height="30" fill="#523060"/><rect x="1830" y="510" width="30" height="30" fill="#52305f"/><rect x="1860" y="510" width="30" height="30" fill="#523060"/><rect x="1890" y="510" width="30" height="30" fill="#533060"/><rect x="1920" y="510" width="30" height="30" fill="#533061"/><rect x="1950" y="510" width="30" height="30" fill="#533061"/><rect x="1980" y="510" width="30" height="30" fill="#523062"/><rect x="-60" y="540" width="30" height="30" fill="#404e7f"/><rect x="-30" y="540" width="30" height="30" fill="#3f4f7f"/><rect x="0" y="540" width="30" height="30" fill="#3f4f80"/><rect x="30" y="540" width="30" height="30" fill="#3f4f7f"/><rect x="60" y="540" width="30" height="30" fill="#3e4e7f"/><rect x="90" y="540" width="30" height="30" fill="#3d4f80"/><rect x="120" y="540" width="30" height="30" fill="#3c4f80"/><rect x="150" y="540" width="30" height="30" fill="#3c4f80"/><rect x="180" y="540" width="30" height="30" fill="#3c4f80"/><rect x="210" y="540" width="30" height="30" fill="#3d4e80"/><rect x="240" y="540" width="30" height="30" fill="#3d4e80"/><rect x="270" y="540" width="30" height="30" fill="#3c4e7f"/><rect x="300" y="540" width="30" height="30" fill="#3b4f7f"/><rect x="330" y="540" width="30" height="30" fill="#39507f"/><rect x="360" y="540" width="30" height="30" fill="#39507f"/><rect x="390" y="540" width="30" height="30" fill="#39507f"/><rect x="420" y="540" width="30" height="30" fill="#3a4f7f"/><rect x="450" y="540" width="30" height="30" fill="#3b4e7f"/><rect x="480" y="540" width="30" height="30" fill="#3b4e7e"/><rect x="510" y="540" width="30" height="30" fill="#3b4e7f"/><rect x="540" y="540" width="30" height="30" fill="#3a4f7f"/><rect x="570" y="540" width="30" height="30" fill="#3b4c7b"/><rect x="600" y="540" width="30" height="30" fill="#3d4977"/><rect x="630" y="540" width="30" height="30" fill="#3d4a78"/><rect x="660" y="540" width="30" height="30" fill="#3e4b7b"/><rect x="690" y="540" width="30" height="30" fill="#3f4c7d"/><rect x="720" y="540" width="30" height="30" fill="#3f4d7f"/><rect x="750" y="540" width="30" height="30" fill="#404d80"/><rect x="780" y="540" width="30" height="30" fill="#414c80"/><rect x="810" y="540" width="30" height="30" fill="#424c80"/><rect x="840" y="540" width="30" height="30" fill="#424b80"/><rect x="870" y="540" width="30" height="30" fill="#434a7f"/><rect x="900" y="540" width="30" height="30" fill="#43497e"/><rect x="930" y="540" width="30" height="30" fill="#44477c"/><rect x="960" y="540" width="30" height="30" fill="#44457a"/><rect x="990" y="540" width="30" height="30" fill="#454278"/><rect x="1020" y="540" width="30" height="30" fill="#453f75"/><rect x="1050" y="540" width="30" height="30" fill="#443d73"/><rect x="1080" y="540" width="30" height="30" fill="#443d73"/><rect x="1110" y="540" width="30" height="30" fill="#453e73"/><rect x="1140" y="540" width="30" height="30" fill="#453f74"/><rect x="1170" y="540" width="30" height="30" fill="#464075"/><rect x="1200" y="540" width="30" height="30" fill="#464074"/><rect x="1230" y="540" width="30" height="30" fill="#464074"/><rect x="1260" y="540" width="30" height="30" fill="#474073"/><rect x="1290" y="540" width="30" height="30" fill="#474072"/><rect x="1320" y="540" width="30" height="30" fill="#473f72"/><rect x="1350" y="540" width="30" height="30" fill="#473f71"/><rect x="1380" y="540" width="30" height="30" fill="#483e70"/><rect x="1410" y="540" width="30" height="30" fill="#483d6f"/><rect x="1440" y="540" width="30" height="30" fill="#493c6e"/><rect x="1470" y="540" width="30" height="30" fill="#493b6d"/><rect x="1500" y="540" width="30" height="30" fill="#4a3b6c"/><rect x="1530" y="540" width="30" height="30" fill="#4a3a6c"/><rect x="1560" y="540" width="30" height="30" fill="#4b396b"/><rect x="1590" y="540" width="30" height="30" fill="#4b386a"/><rect x="1620" y="540" width="30" height="30" fill="#4c3769"/><rect x="1650" y="540" width="30" height="30" fill="#4d3667"/><rect x="1680" y="540" width="30" height="30" fill="#4e3566"/><rect x="1710" y="540" width="30" height="30" fill="#4f3464"/><rect x="1740" y="540" width="30" height="30" fill="#503263"/><rect x="1770" y="540" width="30" height="30" fill="#513262"/><rect x="1800" y="540" width="30" height="30" fill="#513161"/><rect x="1830" y="540" width="30" height="30" fill="#523161"/><rect x="1860" y="540" width="30" height="30" fill="#523061"/><rect x="1890" y="540" width="30" height="30" fill="#523061"/><rect x="1920" y="540" width="30" height="30" fill="#523061"/><rect x="1950" y="540" width="30" height="30" fill="#523061"/><rect x="1980" y="540" width="30" height="30" fill="#523062"/><rect x="-60" y="570" width="30" height="30" fill="#3f4f80"/><rect x="-30" y="570" width="30" height="30" fill="#3e5080"/><rect x="0" y="570" width="30" height="30" fill="#3e5080"/><rect x="30" y="570" width="30" height="30" fill="#3e5080"/><rect x="60" y="570" width="30" height="30" fill="#3e4f80"/><rect x="90" y="570" width="30" height="30" fill="#3d4f80"/><rect x="120" y="570" width="30" height="30" fill="#3c4f80"/><rect x="150" y="570" width="30" height="30" fill="#3c4f80"/><rect x="180" y="570" width="30" height="30" fill="#3d4f80"/><rect x="210" y="570" width="30" height="30" fill="#3d4e80"/><rect x="240" y="570" width="30" height="30" fill="#3d4e80"/><rect x="270" y="570" width="30" height="30" fill="#3d4f80"/><rect x="300" y="570" width="30" height="30" fill="#3b4f80"/><rect x="330" y="570" width="30" height="30" fill="#3a507f"/><rect x="360" y="570" width="30" height="30" fill="#39507f"/><rect x="390" y="570" width="30" height="30" fill="#39507f"/><rect x="420" y="570" width="30" height="30" fill="#3a4f7f"/><rect x="450" y="570" width="30" height="30" fill="#3c4e7f"/><rect x="480" y="570" width="30" height="30" fill="#3c4e7f"/><rect x="510" y="570" width="30" height="30" fill="#3b4e7f"/><rect x="540" y="570" width="30" height="30" fill="#3a4f7f"/><rect x="570" y="570" width="30" height="30" fill="#3b4e7e"/><rect x="600" y="570" width="30" height="30" fill="#3c4c7b"/><rect x="630" y="570" width="30" height="30" fill="#3d4c7b"/><rect x="660" y="570" width="30" height="30" fill="#3e4d7d"/><rect x="690" y="570" width="30" height="30" fill="#3e4e7f"/><rect x="720" y="570" width="30" height="30" fill="#3f4e80"/><rect x="750" y="570" width="30" height="30" fill="#3f4e81"/><rect x="780" y="570" width="30" height="30" fill="#404d81"/><rect x="810" y="570" width="30" height="30" fill="#414d82"/><rect x="840" y="570" width="30" height="30" fill="#424c81"/><rect x="870" y="570" width="30" height="30" fill="#434b81"/><rect x="900" y="570" width="30" height="30" fill="#434a80"/><rect x="930" y="570" width="30" height="30" fill="#44497f"/><rect x="960" y="570" width="30" height="30" fill="#44477d"/><rect x="990" y="570" width="30" height="30" fill="#45467b"/><rect x="1020" y="570" width="30" height="30" fill="#45447a"/><rect x="1050" y="570" width="30" height="30" fill="#454278"/><rect x="1080" y="570" width="30" height="30" fill="#454178"/><rect x="1110" y="570" width="30" height="30" fill="#454278"/><rect x="1140" y="570" width="30" height="30" fill="#454378"/><rect x="1170" y="570" width="30" height="30" fill="#464378"/><rect x="1200" y="570" width="30" height="30" fill="#464377"/><rect x="1230" y="570" width="30" height="30" fill="#464276"/><rect x="1260" y="570" width="30" height="30" fill="#464275"/><rect x="1290" y="570" width="30" height="30" fill="#464174"/><rect x="1320" y="570" width="30" height="30" fill="#474072"/><rect x="1350" y="570" width="30" height="30" fill="#473f71"/><rect x="1380" y="570" width="30" height="30" fill="#483e70"/><rect x="1410" y="570" width="30" height="30" fill="#483d6f"/><rect x="1440" y="570" width="30" height="30" fill="#493c6e"/><rect x="1470" y="570" width="30" height="30" fill="#493b6d"/><rect x="1500" y="570" width="30" height="30" fill="#4a3b6c"/><rect x="1530" y="570" width="30" height="30" fill="#4a3a6c"/><rect x="1560" y="570" width="30" height="30" fill="#4a396b"/><rect x="1590" y="570" width="30" height="30" fill="#4b386a"/><rect x="1620" y="570" width="30" height="30" fill="#4b3769"/><rect x="1650" y="570" width="30" height="30" fill="#4c3668"/><rect x="1680" y="570" width="30" height="30" fill="#4d3566"/><rect x="1710" y="570" width="30" height="30" fill="#4e3465"/><rect x="1740" y="570" width="30" height="30" fill="#4f3364"/><rect x="1770" y="570" width="30" height="30" fill="#503263"/><rect x="1800" y="570" width="30" height="30" fill="#503162"/><rect x="1830" y="570" width="30" height="30" fill="#513162"/><rect x="1860" y="570" width="30" height="30" fill="#513161"/><rect x="1890" y="570" width="30" height="30" fill="#513161"/><rect x="1920" y="570" width="30" height="30" fill="#513061"/><rect x="1950" y="570" width="30" height="30" fill="#513062"/><rect x="1980" y="570" width="30" height="30" fill="#513162"/><rect x="-60" y="600" width="30" height="30" fill="#3e4f80"/><rect x="-30" y="600" width="30" height="30" fill="#3e5080"/><rect x="0" y="600" width="30" height="30" fill="#3e5080"/><rect x="30" y="600" width="30" height="30" fill="#3e5080"/><rect x="60" y="600" width="30" height="30" fill="#3e4f80"/><rect x="90" y="600" width="30" height="30" fill="#3d4f80"/><rect x="120" y="600" width="30" height="30" fill="#3d4f80"/><rect x="150" y="600" width="30" height="30" fill="#3d4f80"/><rect x="180" y="600" width="30" height="30" fill="#3d4f80"/><rect x="210" y="600" width="30" height="30" fill="#3e4e80"/><rect x="240" y="600" width="30" height="30" fill="#3e4e80"/><rect x="270" y="600" width="30" height="30" fill="#3e4e80"/><rect x="300" y="600" width="30" height="30" fill="#3d4f80"/><rect x="330" y="600" width="30" height="30" fill="#3b4f80"/><rect x="360" y="600" width="30" height="30" fill="#3a4f7f"/><rect x="390" y="600" width="30" height="30" fill="#3b4f80"/><rect x="420" y="600" width="30" height="30" fill="#3c4f80"/><rect x="450" y="600" width="30" height="30" fill="#3c4e80"/><rect x="480" y="600" width="30" height="30" fill="#3c4e80"/><rect x="510" y="600" width="30" height="30" fill="#3c4e7f"/><rect x="540" y="600" width="30" height="30" fill="#3b4e7f"/><rect x="570" y="600" width="30" height="30" fill="#3c4d7e"/><rect x="600" y="600" width="30" height="30" fill="#3d4d7e"/><rect x="630" y="600" width="30" height="30" fill="#3e4d7e"/><rect x="660" y="600" width="30" height="30" fill="#3e4e80"/><rect x="690" y="600" width="30" height="30" fill="#3e4f80"/><rect x="720" y="600" width="30" height="30" fill="#3e4f81"/><rect x="750" y="600" width="30" height="30" fill="#3f4f81"/><rect x="780" y="600" width="30" height="30" fill="#404e82"/><rect x="810" y="600" width="30" height="30" fill="#414e83"/><rect x="840" y="600" width="30" height="30" fill="#424d83"/><rect x="870" y="600" width="30" height="30" fill="#434d83"/><rect x="900" y="600" width="30" height="30" fill="#434c82"/><rect x="930" y="600" width="30" height="30" fill="#434b81"/><rect x="960" y="600" width="30" height="30" fill="#444a80"/><rect x="990" y="600" width="30" height="30" fill="#45497f"/><rect x="1020" y="600" width="30" height="30" fill="#46487f"/><rect x="1050" y="600" width="30" height="30" fill="#474880"/><rect x="1080" y="600" width="30" height="30" fill="#474880"/><rect x="1110" y="600" width="30" height="30" fill="#47487f"/><rect x="1140" y="600" width="30" height="30" fill="#46477d"/><rect x="1170" y="600" width="30" height="30" fill="#46467b"/><rect x="1200" y="600" width="30" height="30" fill="#454579"/><rect x="1230" y="600" width="30" height="30" fill="#454478"/><rect x="1260" y="600" width="30" height="30" fill="#454376"/><rect x="1290" y="600" width="30" height="30" fill="#464274"/><rect x="1320" y="600" width="30" height="30" fill="#464173"/><rect x="1350" y="600" width="30" height="30" fill="#473f71"/><rect x="1380" y="600" width="30" height="30" fill="#483e70"/><rect x="1410" y="600" width="30" height="30" fill="#483c6e"/><rect x="1440" y="600" width="30" height="30" fill="#493b6d"/><rect x="1470" y="600" width="30" height="30" fill="#493b6d"/><rect x="1500" y="600" width="30" height="30" fill="#4a3a6c"/><rect x="1530" y="600" width="30" height="30" fill="#4a3a6c"/><rect x="1560" y="600" width="30" height="30" fill="#4a396b"/><rect x="1590" y="600" width="30" height="30" fill="#4b396a"/><rect x="1620" y="600" width="30" height="30" fill="#4b3869"/><rect x="1650" y="600" width="30" height="30" fill="#4c3668"/><rect x="1680" y="600" width="30" height="30" fill="#4d3567"/><rect x="1710" y="600" width="30" height="30" fill="#4e3465"/><rect x="1740" y="600" width="30" height="30" fill="#4e3364"/><rect x="1770" y="600" width="30" height="30" fill="#4f3263"/><rect x="1800" y="600" width="30" height="30" fill="#503263"/><rect x="1830" y="600" width="30" height="30" fill="#503162"/><rect x="1860" y="600" width="30" height="30" fill="#503162"/><rect x="1890" y="600" width="30" height="30" fill="#513162"/><rect x="1920" y="600" width="30" height="30" fill="#513062"/><rect x="1950" y="600" width="30" height="30" fill="#513062"/><rect x="1980" y="600" width="30" height="30" fill="#513062"/><rect x="-60" y="630" width="30" height="30" fill="#3f4f80"/><rect x="-30" y="630" width="30" height="30" fill="#3e5080"/><rect x="0" y="630" width="30" height="30" fill="#3e5080"/><rect x="30" y="630" width="30" height="30" fill="#3e5080"/><rect x="60" y="630" width="30" height="30" fill="#3e4f80"/><rect x="90" y="630" width="30" height="30" fill="#3e4f80"/><rect x="120" y="630" width="30" height="30" fill="#3d4f80"/><rect x="150" y="630" width="30" height="30" fill="#3d4f80"/><rect x="180" y="630" width="30" height="30" fill="#3e4f81"/><rect x="210" y="630" width="30" height="30" fill="#3e4e81"/><rect x="240" y="630" width="30" height="30" fill="#3f4e80"/><rect x="270" y="630" width="30" height="30" fill="#3f4e80"/><rect x="300" y="630" width="30" height="30" fill="#3e4e80"/><rect x="330" y="630" width="30" height="30" fill="#3e4e80"/><rect x="360" y="630" width="30" height="30" fill="#3d4f80"/><rect x="390" y="630" width="30" height="30" fill="#3d4f81"/><rect x="420" y="630" width="30" height="30" fill="#3d4f81"/><rect x="450" y="630" width="30" height="30" fill="#3e4e81"/><rect x="480" y="630" width="30" height="30" fill="#3e4e81"/><rect x="510" y="630" width="30" height="30" fill="#3d4e80"/><rect x="540" y="630" width="30" height="30" fill="#3d4e80"/><rect x="570" y="630" width="30" height="30" fill="#3e4e80"/><rect x="600" y="630" width="30" height="30" fill="#3e4e80"/><rect x="630" y="630" width="30" height="30" fill="#3f4e81"/><rect x="660" y="630" width="30" height="30" fill="#3e4f81"/><rect x="690" y="630" width="30" height="30" fill="#3d5080"/><rect x="720" y="630" width="30" height="30" fill="#3d5080"/><rect x="750" y="630" width="30" height="30" fill="#3e5081"/><rect x="780" y="630" width="30" height="30" fill="#404f83"/><rect x="810" y="630" width="30" height="30" fill="#424e84"/><rect x="840" y="630" width="30" height="30" fill="#434e85"/><rect x="870" y="630" width="30" height="30" fill="#434e84"/><rect x="900" y="630" width="30" height="30" fill="#434d84"/><rect x="930" y="630" width="30" height="30" fill="#434d83"/><rect x="960" y="630" width="30" height="30" fill="#444c82"/><rect x="990" y="630" width="30" height="30" fill="#454b82"/><rect x="1020" y="630" width="30" height="30" fill="#474b83"/><rect x="1050" y="630" width="30" height="30" fill="#484b84"/><rect x="1080" y="630" width="30" height="30" fill="#494c85"/><rect x="1110" y="630" width="30" height="30" fill="#484b83"/><rect x="1140" y="630" width="30" height="30" fill="#474a81"/><rect x="1170" y="630" width="30" height="30" fill="#46487e"/><rect x="1200" y="630" width="30" height="30" fill="#45477b"/><rect x="1230" y="630" width="30" height="30" fill="#454579"/><rect x="1260" y="630" width="30" height="30" fill="#454477"/><rect x="1290" y="630" width="30" height="30" fill="#454375"/><rect x="1320" y="630" width="30" height="30" fill="#464173"/><rect x="1350" y="630" width="30" height="30" fill="#473f71"/><rect x="1380" y="630" width="30" height="30" fill="#483e6f"/><rect x="1410" y="630" width="30" height="30" fill="#493c6e"/><rect x="1440" y="630" width="30" height="30" fill="#493b6d"/><rect x="1470" y="630" width="30" height="30" fill="#4a3a6c"/><rect x="1500" y="630" width="30" height="30" fill="#4a3a6c"/><rect x="1530" y="630" width="30" height="30" fill="#4a3a6c"/><rect x="1560" y="630" width="30" height="30" fill="#4a3a6b"/><rect x="1590" y="630" width="30" height="30" fill="#4a396a"/><rect x="1620" y="630" width="30" height="30" fill="#4b3869"/><rect x="1650" y="630" width="30" height="30" fill="#4c3668"/><rect x="1680" y="630" width="30" height="30" fill="#4d3567"/><rect x="1710" y="630" width="30" height="30" fill="#4d3465"/><rect x="1740" y="630" width="30" height="30" fill="#4e3364"/><rect x="1770" y="630" width="30" height="30" fill="#4f3263"/><rect x="1800" y="630" width="30" height="30" fill="#4f3162"/><rect x="1830" y="630" width="30" height="30" fill="#503162"/><rect x="1860" y="630" width="30" height="30" fill="#503062"/><rect x="1890" y="630" width="30" height="30" fill="#503061"/><rect x="1920" y="630" width="30" height="30" fill="#503061"/><rect x="1950" y="630" width="30" height="30" fill="#503061"/><rect x="1980" y="630" width="30" height="30" fill="#503062"/><rect x="-60" y="660" width="30" height="30" fill="#3e5080"/><rect x="-30" y="660" width="30" height="30" fill="#3e5080"/><rect x="0" y="660" width="30" height="30" fill="#3e5080"/><rect x="30" y="660" width="30" height="30" fill="#3e5081"/><rect x="60" y="660" width="30" height="30" fill="#3e5081"/><rect x="90" y="660" width="30" height="30" fill="#3e5081"/><rect x="120" y="660" width="30" height="30" fill="#3e5081"/><rect x="150" y="660" width="30" height="30" fill="#3e4f81"/><rect x="180" y="660" width="30" height="30" fill="#3e4f81"/><rect x="210" y="660" width="30" height="30" fill="#3f4e81"/><rect x="240" y="660" width="30" height="30" fill="#3f4e80"/><rect x="270" y="660" width="30" height="30" fill="#3f4d80"/><rect x="300" y="660" width="30" height="30" fill="#3f4d80"/><rect x="330" y="660" width="30" height="30" fill="#3f4e81"/><rect x="360" y="660" width="30" height="30" fill="#3e4e81"/><rect x="390" y="660" width="30" height="30" fill="#3e4f82"/><rect x="420" y="660" width="30" height="30" fill="#3f4f82"/><rect x="450" y="660" width="30" height="30" fill="#3f4f83"/><rect x="480" y="660" width="30" height="30" fill="#3f4e83"/><rect x="510" y="660" width="30" height="30" fill="#3f4e82"/><rect x="540" y="660" width="30" height="30" fill="#3f4e82"/><rect x="570" y="660" width="30" height="30" fill="#404e82"/><rect x="600" y="660" width="30" height="30" fill="#404e83"/><rect x="630" y="660" width="30" height="30" fill="#404f83"/><rect x="660" y="660" width="30" height="30" fill="#3f5082"/><rect x="690" y="660" width="30" height="30" fill="#3d5081"/><rect x="720" y="660" width="30" height="30" fill="#3e5081"/><rect x="750" y="660" width="30" height="30" fill="#3f5082"/><rect x="780" y="660" width="30" height="30" fill="#414f85"/><rect x="810" y="660" width="30" height="30" fill="#434f86"/><rect x="840" y="660" width="30" height="30" fill="#434f87"/><rect x="870" y="660" width="30" height="30" fill="#434f86"/><rect x="900" y="660" width="30" height="30" fill="#434e86"/><rect x="930" y="660" width="30" height="30" fill="#434e85"/><rect x="960" y="660" width="30" height="30" fill="#434e84"/><rect x="990" y="660" width="30" height="30" fill="#444d84"/><rect x="1020" y="660" width="30" height="30" fill="#474c84"/><rect x="1050" y="660" width="30" height="30" fill="#494c86"/><rect x="1080" y="660" width="30" height="30" fill="#4a4c86"/><rect x="1110" y="660" width="30" height="30" fill="#494c85"/><rect x="1140" y="660" width="30" height="30" fill="#474b82"/><rect x="1170" y="660" width="30" height="30" fill="#454a7f"/><rect x="1200" y="660" width="30" height="30" fill="#44487c"/><rect x="1230" y="660" width="30" height="30" fill="#444679"/><rect x="1260" y="660" width="30" height="30" fill="#444577"/><rect x="1290" y="660" width="30" height="30" fill="#454375"/><rect x="1320" y="660" width="30" height="30" fill="#464173"/><rect x="1350" y="660" width="30" height="30" fill="#473f71"/><rect x="1380" y="660" width="30" height="30" fill="#483d6f"/><rect x="1410" y="660" width="30" height="30" fill="#493c6d"/><rect x="1440" y="660" width="30" height="30" fill="#4a3a6c"/><rect x="1470" y="660" width="30" height="30" fill="#4a3a6c"/><rect x="1500" y="660" width="30" height="30" fill="#4a3a6c"/><rect x="1530" y="660" width="30" height="30" fill="#4a3a6c"/><rect x="1560" y="660" width="30" height="30" fill="#4a3a6b"/><rect x="1590" y="660" width="30" height="30" fill="#4a396a"/><rect x="1620" y="660" width="30" height="30" fill="#4b3769"/><rect x="1650" y="660" width="30" height="30" fill="#4c3668"/><rect x="1680" y="660" width="30" height="30" fill="#4d3566"/><rect x="1710" y="660" width="30" height="30" fill="#4d3365"/><rect x="1740" y="660" width="30" height="30" fill="#4e3264"/><rect x="1770" y="660" width="30" height="30" fill="#4f3263"/><rect x="1800" y="660" width="30" height="30" fill="#503162"/><rect x="1830" y="660" width="30" height="30" fill="#503061"/><rect x="1860" y="660" width="30" height="30" fill="#503061"/><rect x="1890" y="660" width="30" height="30" fill="#503061"/><rect x="1920" y="660" width="30" height="30" fill="#512f61"/><rect x="1950" y="660" width="30" height="30" fill="#502f61"/><rect x="1980" y="660" width="30" height="30" fill="#502f61"/><rect x="-60" y="690" width="30" height="30" fill="#3e5181"/><rect x="-30" y="690" width="30" height="30" fill="#3e5181"/><rect x="0" y="690" width="30" height="30" fill="#3e5181"/><rect x="30" y="690" width="30" height="30" fill="#3e5181"/><rect x="60" y="690" width="30" height="30" fill="#3e5181"/><rect x="90" y="690" width="30" height="30" fill="#3e5182"/><rect x="120" y="690" width="30" height="30" fill="#3e5082"/><rect x="150" y="690" width="30" height="30" fill="#3e5082"/><rect x="180" y="690" width="30" height="30" fill="#3e5082"/><rect x="210" y="690" width="30" height="30" fill="#3f4f81"/><rect x="240" y="690" width="30" height="30" fill="#3f4e81"/><rect x="270" y="690" width="30" height="30" fill="#3f4d80"/><rect x="300" y="690" width="30" height="30" fill="#3f4d80"/><rect x="330" y="690" width="30" height="30" fill="#3f4e81"/><rect x="360" y="690" width="30" height="30" fill="#3f4e82"/><rect x="390" y="690" width="30" height="30" fill="#404f83"/><rect x="420" y="690" width="30" height="30" fill="#404f84"/><rect x="450" y="690" width="30" height="30" fill="#414f84"/><rect x="480" y="690" width="30" height="30" fill="#414f85"/><rect x="510" y="690" width="30" height="30" fill="#414f85"/><rect x="540" y="690" width="30" height="30" fill="#414f85"/><rect x="570" y="690" width="30" height="30" fill="#424f85"/><rect x="600" y="690" width="30" height="30" fill="#424f85"/><rect x="630" y="690" width="30" height="30" fill="#424f86"/><rect x="660" y="690" width="30" height="30" fill="#424f85"/><rect x="690" y="690" width="30" height="30" fill="#415085"/><rect x="720" y="690" width="30" height="30" fill="#415085"/><rect x="750" y="690" width="30" height="30" fill="#424f86"/><rect x="780" y="690" width="30" height="30" fill="#444f88"/><rect x="810" y="690" width="30" height="30" fill="#454f89"/><rect x="840" y="690" width="30" height="30" fill="#454f89"/><rect x="870" y="690" width="30" height="30" fill="#444f88"/><rect x="900" y="690" width="30" height="30" fill="#434f87"/><rect x="930" y="690" width="30" height="30" fill="#425087"/><rect x="960" y="690" width="30" height="30" fill="#424f86"/><rect x="990" y="690" width="30" height="30" fill="#434f85"/><rect x="1020" y="690" width="30" height="30" fill="#444e84"/><rect x="1050" y="690" width="30" height="30" fill="#474d85"/><rect x="1080" y="690" width="30" height="30" fill="#484d85"/><rect x="1110" y="690" width="30" height="30" fill="#474d84"/><rect x="1140" y="690" width="30" height="30" fill="#454c82"/><rect x="1170" y="690" width="30" height="30" fill="#444b7f"/><rect x="1200" y="690" width="30" height="30" fill="#43497c"/><rect x="1230" y="690" width="30" height="30" fill="#44477a"/><rect x="1260" y="690" width="30" height="30" fill="#444577"/><rect x="1290" y="690" width="30" height="30" fill="#454375"/><rect x="1320" y="690" width="30" height="30" fill="#454273"/><rect x="1350" y="690" width="30" height="30" fill="#464071"/><rect x="1380" y="690" width="30" height="30" fill="#473e6f"/><rect x="1410" y="690" width="30" height="30" fill="#493c6d"/><rect x="1440" y="690" width="30" height="30" fill="#4a3a6c"/><rect x="1470" y="690" width="30" height="30" fill="#4a3a6c"/><rect x="1500" y="690" width="30" height="30" fill="#4a3a6c"/><rect x="1530" y="690" width="30" height="30" fill="#4a3a6c"/><rect x="1560" y="690" width="30" height="30" fill="#4a396b"/><rect x="1590" y="690" width="30" height="30" fill="#4a386a"/><rect x="1620" y="690" width="30" height="30" fill="#4b3769"/><rect x="1650" y="690" width="30" height="30" fill="#4c3667"/><rect x="1680" y="690" width="30" height="30" fill="#4d3466"/><rect x="1710" y="690" width="30" height="30" fill="#4e3365"/><rect x="1740" y="690" width="30" height="30" fill="#4e3263"/><rect x="1770" y="690" width="30" height="30" fill="#4f3162"/><rect x="1800" y="690" width="30" height="30" fill="#503061"/><rect x="1830" y="690" width="30" height="30" fill="#513060"/><rect x="1860" y="690" width="30" height="30" fill="#512f60"/><rect x="1890" y="690" width="30" height="30" fill="#512f60"/><rect x="1920" y="690" width="30" height="30" fill="#512f60"/><rect x="1950" y="690" width="30" height="30" fill="#512e60"/><rect x="1980" y="690" width="30" height="30" fill="#512e61"/><rect x="-60" y="720" width="30" height="30" fill="#3d5282"/><rect x="-30" y="720" width="30" height="30" fill="#3d5282"/><rect x="0" y="720" width="30" height="30" fill="#3d5282"/><rect x="30" y="720" width="30" height="30" fill="#3d5282"/><rect x="60" y="720" width="30" height="30" fill="#3d5282"/><rect x="90" y="720" width="30" height="30" fill="#3d5282"/><rect x="120" y="720" width="30" height="30" fill="#3d5283"/><rect x="150" y="720" width="30" height="30" fill="#3e5183"/><rect x="180" y="720" width="30" height="30" fill="#3e5182"/><rect x="210" y="720" width="30" height="30" fill="#3e5082"/><rect x="240" y="720" width="30" height="30" fill="#3f4e81"/><rect x="270" y="720" width="30" height="30" fill="#3f4e81"/><rect x="300" y="720" width="30" height="30" fill="#3f4e81"/><rect x="330" y="720" width="30" height="30" fill="#3f4e82"/><rect x="360" y="720" width="30" height="30" fill="#404f83"/><rect x="390" y="720" width="30" height="30" fill="#404f85"/><rect x="420" y="720" width="30" height="30" fill="#414f86"/><rect x="450" y="720" width="30" height="30" fill="#424f86"/><rect x="480" y="720" width="30" height="30" fill="#424f87"/><rect x="510" y="720" width="30" height="30" fill="#434f87"/><rect x="540" y="720" width="30" height="30" fill="#434f87"/><rect x="570" y="720" width="30" height="30" fill="#434f88"/><rect x="600" y="720" width="30" height="30" fill="#444f88"/><rect x="630" y="720" width="30" height="30" fill="#444f89"/><rect x="660" y="720" width="30" height="30" fill="#464f8a"/><rect x="690" y="720" width="30" height="30" fill="#474f8c"/><rect x="720" y="720" width="30" height="30" fill="#474f8c"/><rect x="750" y="720" width="30" height="30" fill="#464f8b"/><rect x="780" y="720" width="30" height="30" fill="#45508b"/><rect x="810" y="720" width="30" height="30" fill="#46508c"/><rect x="840" y="720" width="30" height="30" fill="#46508c"/><rect x="870" y="720" width="30" height="30" fill="#44508a"/><rect x="900" y="720" width="30" height="30" fill="#435088"/><rect x="930" y="720" width="30" height="30" fill="#425188"/><rect x="960" y="720" width="30" height="30" fill="#425188"/><rect x="990" y="720" width="30" height="30" fill="#425086"/><rect x="1020" y="720" width="30" height="30" fill="#415084"/><rect x="1050" y="720" width="30" height="30" fill="#405184"/><rect x="1080" y="720" width="30" height="30" fill="#415084"/><rect x="1110" y="720" width="30" height="30" fill="#424f83"/><rect x="1140" y="720" width="30" height="30" fill="#424d81"/><rect x="1170" y="720" width="30" height="30" fill="#424b7e"/><rect x="1200" y="720" width="30" height="30" fill="#42497c"/><rect x="1230" y="720" width="30" height="30" fill="#434779"/><rect x="1260" y="720" width="30" height="30" fill="#434577"/><rect x="1290" y="720" width="30" height="30" fill="#444475"/><rect x="1320" y="720" width="30" height="30" fill="#454273"/><rect x="1350" y="720" width="30" height="30" fill="#464071"/><rect x="1380" y="720" width="30" height="30" fill="#473e6f"/><rect x="1410" y="720" width="30" height="30" fill="#483c6e"/><rect x="1440" y="720" width="30" height="30" fill="#493b6d"/><rect x="1470" y="720" width="30" height="30" fill="#4a3a6c"/><rect x="1500" y="720" width="30" height="30" fill="#4a3a6c"/><rect x="1530" y="720" width="30" height="30" fill="#4a3a6c"/><rect x="1560" y="720" width="30" height="30" fill="#4a396b"/><rect x="1590" y="720" width="30" height="30" fill="#4a386a"/><rect x="1620" y="720" width="30" height="30" fill="#4b3768"/><rect x="1650" y="720" width="30" height="30" fill="#4c3567"/><rect x="1680" y="720" width="30" height="30" fill="#4d3466"/><rect x="1710" y="720" width="30" height="30" fill="#4e3264"/><rect x="1740" y="720" width="30" height="30" fill="#4f3163"/><rect x="1770" y="720" width="30" height="30" fill="#503061"/><rect x="1800" y="720" width="30" height="30" fill="#513060"/><rect x="1830" y="720" width="30" height="30" fill="#51305f"/><rect x="1860" y="720" width="30" height="30" fill="#512f5f"/><rect x="1890" y="720" width="30" height="30" fill="#512f5f"/><rect x="1920" y="720" width="30" height="30" fill="#512e5f"/><rect x="1950" y="720" width="30" height="30" fill="#512d60"/><rect x="1980" y="720" width="30" height="30" fill="#512d60"/><rect x="-60" y="750" width="30" height="30" fill="#3d5383"/><rect x="-30" y="750" width="30" height="30" fill="#3c5383"/><rect x="0" y="750" width="30" height="30" fill="#3c5383"/><rect x="30" y="750" width="30" height="30" fill="#3d5383"/><rect x="60" y="750" width="30" height="30" fill="#3d5383"/><rect x="90" y="750" width="30" height="30" fill="#3d5383"/><rect x="120" y="750" width="30" height="30" fill="#3d5383"/><rect x="150" y="750" width="30" height="30" fill="#3d5283"/><rect x="180" y="750" width="30" height="30" fill="#3d5283"/><rect x="210" y="750" width="30" height="30" fill="#3e5183"/><rect x="240" y="750" width="30" height="30" fill="#3e5083"/><rect x="270" y="750" width="30" height="30" fill="#3f4f82"/><rect x="300" y="750" width="30" height="30" fill="#3f4f83"/><rect x="330" y="750" width="30" height="30" fill="#405084"/><rect x="360" y="750" width="30" height="30" fill="#405085"/><rect x="390" y="750" width="30" height="30" fill="#415086"/><rect x="420" y="750" width="30" height="30" fill="#425087"/><rect x="450" y="750" width="30" height="30" fill="#435088"/><rect x="480" y="750" width="30" height="30" fill="#435089"/><rect x="510" y="750" width="30" height="30" fill="#444f89"/><rect x="540" y="750" width="30" height="30" fill="#454f8a"/><rect x="570" y="750" width="30" height="30" fill="#454f8a"/><rect x="600" y="750" width="30" height="30" fill="#454f8a"/><rect x="630" y="750" width="30" height="30" fill="#464f8b"/><rect x="660" y="750" width="30" height="30" fill="#474f8d"/><rect x="690" y="750" width="30" height="30" fill="#494f8f"/><rect x="720" y="750" width="30" height="30" fill="#494f8f"/><rect x="750" y="750" width="30" height="30" fill="#474f8d"/><rect x="780" y="750" width="30" height="30" fill="#46508c"/><rect x="810" y="750" width="30" height="30" fill="#47508d"/><rect x="840" y="750" width="30" height="30" fill="#47508d"/><rect x="870" y="750" width="30" height="30" fill="#45508b"/><rect x="900" y="750" width="30" height="30" fill="#425188"/><rect x="930" y="750" width="30" height="30" fill="#425189"/><rect x="960" y="750" width="30" height="30" fill="#425189"/><rect x="990" y="750" width="30" height="30" fill="#415187"/><rect x="1020" y="750" width="30" height="30" fill="#3f5184"/><rect x="1050" y="750" width="30" height="30" fill="#3d5384"/><rect x="1080" y="750" width="30" height="30" fill="#3d5384"/><rect x="1110" y="750" width="30" height="30" fill="#3f5183"/><rect x="1140" y="750" width="30" height="30" fill="#404e80"/><rect x="1170" y="750" width="30" height="30" fill="#414b7d"/><rect x="1200" y="750" width="30" height="30" fill="#41497b"/><rect x="1230" y="750" width="30" height="30" fill="#424779"/><rect x="1260" y="750" width="30" height="30" fill="#434676"/><rect x="1290" y="750" width="30" height="30" fill="#444474"/><rect x="1320" y="750" width="30" height="30" fill="#444273"/><rect x="1350" y="750" width="30" height="30" fill="#454171"/><rect x="1380" y="750" width="30" height="30" fill="#463f70"/><rect x="1410" y="750" width="30" height="30" fill="#473d6e"/><rect x="1440" y="750" width="30" height="30" fill="#483c6d"/><rect x="1470" y="750" width="30" height="30" fill="#493b6c"/><rect x="1500" y="750" width="30" height="30" fill="#493a6c"/><rect x="1530" y="750" width="30" height="30" fill="#493a6b"/><rect x="1560" y="750" width="30" height="30" fill="#4a396a"/><rect x="1590" y="750" width="30" height="30" fill="#4a3869"/><rect x="1620" y="750" width="30" height="30" fill="#4b3668"/><rect x="1650" y="750" width="30" height="30" fill="#4c3567"/><rect x="1680" y="750" width="30" height="30" fill="#4d3365"/><rect x="1710" y="750" width="30" height="30" fill="#4e3264"/><rect x="1740" y="750" width="30" height="30" fill="#4f3162"/><rect x="1770" y="750" width="30" height="30" fill="#503060"/><rect x="1800" y="750" width="30" height="30" fill="#51305f"/><rect x="1830" y="750" width="30" height="30" fill="#52305e"/><rect x="1860" y="750" width="30" height="30" fill="#522f5e"/><rect x="1890" y="750" width="30" height="30" fill="#522e5f"/><rect x="1920" y="750" width="30" height="30" fill="#522d5f"/><rect x="1950" y="750" width="30" height="30" fill="#522c5f"/><rect x="1980" y="750" width="30" height="30" fill="#512c5f"/><rect x="-60" y="780" width="30" height="30" fill="#3c5483"/><rect x="-30" y="780" width="30" height="30" fill="#3c5483"/><rect x="0" y="780" width="30" height="30" fill="#3c5483"/><rect x="30" y="780" width="30" height="30" fill="#3c5483"/><rect x="60" y="780" width="30" height="30" fill="#3c5483"/><rect x="90" y="780" width="30" height="30" fill="#3c5483"/><rect x="120" y="780" width="30" height="30" fill="#3c5483"/><rect x="150" y="780" width="30" height="30" fill="#3c5483"/><rect x="180" y="780" width="30" height="30" fill="#3d5384"/><rect x="210" y="780" width="30" height="30" fill="#3d5384"/><rect x="240" y="780" width="30" height="30" fill="#3d5384"/><rect x="270" y="780" width="30" height="30" fill="#3e5284"/><rect x="300" y="780" width="30" height="30" fill="#3f5185"/><rect x="330" y="780" width="30" height="30" fill="#405286"/><rect x="360" y="780" width="30" height="30" fill="#405187"/><rect x="390" y="780" width="30" height="30" fill="#415188"/><rect x="420" y="780" width="30" height="30" fill="#435089"/><rect x="450" y="780" width="30" height="30" fill="#44508a"/><rect x="480" y="780" width="30" height="30" fill="#44508b"/><rect x="510" y="780" width="30" height="30" fill="#45508b"/><rect x="540" y="780" width="30" height="30" fill="#464f8b"/><rect x="570" y="780" width="30" height="30" fill="#474f8c"/><rect x="600" y="780" width="30" height="30" fill="#474f8c"/><rect x="630" y="780" width="30" height="30" fill="#474f8c"/><rect x="660" y="780" width="30" height="30" fill="#474f8d"/><rect x="690" y="780" width="30" height="30" fill="#484f8e"/><rect x="720" y="780" width="30" height="30" fill="#484f8e"/><rect x="750" y="780" width="30" height="30" fill="#47508c"/><rect x="780" y="780" width="30" height="30" fill="#45508b"/><rect x="810" y="780" width="30" height="30" fill="#46508c"/><rect x="840" y="780" width="30" height="30" fill="#46508c"/><rect x="870" y="780" width="30" height="30" fill="#44508a"/><rect x="900" y="780" width="30" height="30" fill="#425188"/><rect x="930" y="780" width="30" height="30" fill="#415188"/><rect x="960" y="780" width="30" height="30" fill="#415188"/><rect x="990" y="780" width="30" height="30" fill="#405186"/><rect x="1020" y="780" width="30" height="30" fill="#3f5184"/><rect x="1050" y="780" width="30" height="30" fill="#3e5283"/><rect x="1080" y="780" width="30" height="30" fill="#3d5283"/><rect x="1110" y="780" width="30" height="30" fill="#3e5082"/><rect x="1140" y="780" width="30" height="30" fill="#3f4d7e"/><rect x="1170" y="780" width="30" height="30" fill="#404b7c"/><rect x="1200" y="780" width="30" height="30" fill="#40497a"/><rect x="1230" y="780" width="30" height="30" fill="#414878"/><rect x="1260" y="780" width="30" height="30" fill="#424576"/><rect x="1290" y="780" width="30" height="30" fill="#434474"/><rect x="1320" y="780" width="30" height="30" fill="#444373"/><rect x="1350" y="780" width="30" height="30" fill="#454171"/><rect x="1380" y="780" width="30" height="30" fill="#463f70"/><rect x="1410" y="780" width="30" height="30" fill="#463e6e"/><rect x="1440" y="780" width="30" height="30" fill="#473d6e"/><rect x="1470" y="780" width="30" height="30" fill="#483c6d"/><rect x="1500" y="780" width="30" height="30" fill="#493a6b"/><rect x="1530" y="780" width="30" height="30" fill="#49396b"/><rect x="1560" y="780" width="30" height="30" fill="#49396a"/><rect x="1590" y="780" width="30" height="30" fill="#4a3769"/><rect x="1620" y="780" width="30" height="30" fill="#4b3667"/><rect x="1650" y="780" width="30" height="30" fill="#4c3466"/><rect x="1680" y="780" width="30" height="30" fill="#4d3365"/><rect x="1710" y="780" width="30" height="30" fill="#4d3264"/><rect x="1740" y="780" width="30" height="30" fill="#4f3062"/><rect x="1770" y="780" width="30" height="30" fill="#502f60"/><rect x="1800" y="780" width="30" height="30" fill="#51305f"/><rect x="1830" y="780" width="30" height="30" fill="#52305e"/><rect x="1860" y="780" width="30" height="30" fill="#522f5e"/><rect x="1890" y="780" width="30" height="30" fill="#522d5e"/><rect x="1920" y="780" width="30" height="30" fill="#522b5e"/><rect x="1950" y="780" width="30" height="30" fill="#522b5e"/><rect x="1980" y="780" width="30" height="30" fill="#522b5f"/><rect x="-60" y="810" width="30" height="30" fill="#3b5583"/><rect x="-30" y="810" width="30" height="30" fill="#3b5583"/><rect x="0" y="810" width="30" height="30" fill="#3b5583"/><rect x="30" y="810" width="30" height="30" fill="#3b5583"/><rect x="60" y="810" width="30" height="30" fill="#3c5483"/><rect x="90" y="810" width="30" height="30" fill="#3b5583"/><rect x="120" y="810" width="30" height="30" fill="#3b5583"/><rect x="150" y="810" width="30" height="30" fill="#3c5483"/><rect x="180" y="810" width="30" height="30" fill="#3c5484"/><rect x="210" y="810" width="30" height="30" fill="#3c5483"/><rect x="240" y="810" width="30" height="30" fill="#3c5484"/><rect x="270" y="810" width="30" height="30" fill="#3d5385"/><rect x="300" y="810" width="30" height="30" fill="#3f5286"/><rect x="330" y="810" width="30" height="30" fill="#3f5387"/><rect x="360" y="810" width="30" height="30" fill="#405287"/><rect x="390" y="810" width="30" height="30" fill="#415288"/><rect x="420" y="810" width="30" height="30" fill="#43508a"/><rect x="450" y="810" width="30" height="30" fill="#45508b"/><rect x="480" y="810" width="30" height="30" fill="#45508c"/><rect x="510" y="810" width="30" height="30" fill="#45508c"/><rect x="540" y="810" width="30" height="30" fill="#474f8d"/><rect x="570" y="810" width="30" height="30" fill="#484f8e"/><rect x="600" y="810" width="30" height="30" fill="#484f8e"/><rect x="630" y="810" width="30" height="30" fill="#474f8d"/><rect x="660" y="810" width="30" height="30" fill="#47508c"/><rect x="690" y="810" width="30" height="30" fill="#47508d"/><rect x="720" y="810" width="30" height="30" fill="#47508d"/><rect x="750" y="810" width="30" height="30" fill="#46508b"/><rect x="780" y="810" width="30" height="30" fill="#44508a"/><rect x="810" y="810" width="30" height="30" fill="#43518a"/><rect x="840" y="810" width="30" height="30" fill="#435189"/><rect x="870" y="810" width="30" height="30" fill="#425188"/><rect x="900" y="810" width="30" height="30" fill="#405186"/><rect x="930" y="810" width="30" height="30" fill="#3e5285"/><rect x="960" y="810" width="30" height="30" fill="#3e5285"/><rect x="990" y="810" width="30" height="30" fill="#3e5184"/><rect x="1020" y="810" width="30" height="30" fill="#3e5182"/><rect x="1050" y="810" width="30" height="30" fill="#3d5182"/><rect x="1080" y="810" width="30" height="30" fill="#3d5181"/><rect x="1110" y="810" width="30" height="30" fill="#3e4f80"/><rect x="1140" y="810" width="30" height="30" fill="#3f4c7d"/><rect x="1170" y="810" width="30" height="30" fill="#3f4a7a"/><rect x="1200" y="810" width="30" height="30" fill="#404a7a"/><rect x="1230" y="810" width="30" height="30" fill="#414878"/><rect x="1260" y="810" width="30" height="30" fill="#424575"/><rect x="1290" y="810" width="30" height="30" fill="#434473"/><rect x="1320" y="810" width="30" height="30" fill="#434473"/><rect x="1350" y="810" width="30" height="30" fill="#444272"/><rect x="1380" y="810" width="30" height="30" fill="#463f6f"/><rect x="1410" y="810" width="30" height="30" fill="#463e6e"/><rect x="1440" y="810" width="30" height="30" fill="#463e6e"/><rect x="1470" y="810" width="30" height="30" fill="#473c6d"/><rect x="1500" y="810" width="30" height="30" fill="#483a6b"/><rect x="1530" y="810" width="30" height="30" fill="#49396a"/><rect x="1560" y="810" width="30" height="30" fill="#49396a"/><rect x="1590" y="810" width="30" height="30" fill="#4a3769"/><rect x="1620" y="810" width="30" height="30" fill="#4b3567"/><rect x="1650" y="810" width="30" height="30" fill="#4c3466"/><rect x="1680" y="810" width="30" height="30" fill="#4c3466"/><rect x="1710" y="810" width="30" height="30" fill="#4d3264"/><rect x="1740" y="810" width="30" height="30" fill="#4f3062"/><rect x="1770" y="810" width="30" height="30" fill="#4f2f61"/><rect x="1800" y="810" width="30" height="30" fill="#502f60"/><rect x="1830" y="810" width="30" height="30" fill="#522f5e"/><rect x="1860" y="810" width="30" height="30" fill="#522e5e"/><rect x="1890" y="810" width="30" height="30" fill="#522a5e"/><rect x="1920" y="810" width="30" height="30" fill="#53295d"/><rect x="1950" y="810" width="30" height="30" fill="#52295e"/><rect x="1980" y="810" width="30" height="30" fill="#522a5e"/><rect x="-60" y="840" width="30" height="30" fill="#3b5583"/><rect x="-30" y="840" width="30" height="30" fill="#3b5583"/><rect x="0" y="840" width="30" height="30" fill="#3b5583"/><rect x="30" y="840" width="30" height="30" fill="#3b5583"/><rect x="60" y="840" width="30" height="30" fill="#3b5583"/><rect x="90" y="840" width="30" height="30" fill="#3b5583"/><rect x="120" y="840" width="30" height="30" fill="#3b5583"/><rect x="150" y="840" width="30" height="30" fill="#3c5483"/><rect x="180" y="840" width="30" height="30" fill="#3c5484"/><rect x="210" y="840" width="30" height="30" fill="#3b5583"/><rect x="240" y="840" width="30" height="30" fill="#3b5583"/><rect x="270" y="840" width="30" height="30" fill="#3d5485"/><rect x="300" y="840" width="30" height="30" fill="#3f5387"/><rect x="330" y="840" width="30" height="30" fill="#3f5387"/><rect x="360" y="840" width="30" height="30" fill="#3f5387"/><rect x="390" y="840" width="30" height="30" fill="#415288"/><rect x="420" y="840" width="30" height="30" fill="#44508b"/><rect x="450" y="840" width="30" height="30" fill="#45508c"/><rect x="480" y="840" width="30" height="30" fill="#45508c"/><rect x="510" y="840" width="30" height="30" fill="#46508c"/><rect x="540" y="840" width="30" height="30" fill="#474f8d"/><rect x="570" y="840" width="30" height="30" fill="#494f8f"/><rect x="600" y="840" width="30" height="30" fill="#494f8f"/><rect x="630" y="840" width="30" height="30" fill="#474f8d"/><rect x="660" y="840" width="30" height="30" fill="#46508c"/><rect x="690" y="840" width="30" height="30" fill="#47508d"/><rect x="720" y="840" width="30" height="30" fill="#47508d"/><rect x="750" y="840" width="30" height="30" fill="#45508b"/><rect x="780" y="840" width="30" height="30" fill="#435189"/><rect x="810" y="840" width="30" height="30" fill="#425189"/><rect x="840" y="840" width="30" height="30" fill="#425189"/><rect x="870" y="840" width="30" height="30" fill="#415187"/><rect x="900" y="840" width="30" height="30" fill="#3e5285"/><rect x="930" y="840" width="30" height="30" fill="#3c5384"/><rect x="960" y="840" width="30" height="30" fill="#3c5384"/><rect x="990" y="840" width="30" height="30" fill="#3d5183"/><rect x="1020" y="840" width="30" height="30" fill="#3d5081"/><rect x="1050" y="840" width="30" height="30" fill="#3c5181"/><rect x="1080" y="840" width="30" height="30" fill="#3c5181"/><rect x="1110" y="840" width="30" height="30" fill="#3e4f7f"/><rect x="1140" y="840" width="30" height="30" fill="#3f4b7c"/><rect x="1170" y="840" width="30" height="30" fill="#3f4a7a"/><rect x="1200" y="840" width="30" height="30" fill="#3f4a7a"/><rect x="1230" y="840" width="30" height="30" fill="#404878"/><rect x="1260" y="840" width="30" height="30" fill="#424574"/><rect x="1290" y="840" width="30" height="30" fill="#434473"/><rect x="1320" y="840" width="30" height="30" fill="#434473"/><rect x="1350" y="840" width="30" height="30" fill="#444272"/><rect x="1380" y="840" width="30" height="30" fill="#463f6f"/><rect x="1410" y="840" width="30" height="30" fill="#463e6e"/><rect x="1440" y="840" width="30" height="30" fill="#463e6e"/><rect x="1470" y="840" width="30" height="30" fill="#473d6d"/><rect x="1500" y="840" width="30" height="30" fill="#493a6b"/><rect x="1530" y="840" width="30" height="30" fill="#49396a"/><rect x="1560" y="840" width="30" height="30" fill="#49396a"/><rect x="1590" y="840" width="30" height="30" fill="#4a3869"/><rect x="1620" y="840" width="30" height="30" fill="#4b3567"/><rect x="1650" y="840" width="30" height="30" fill="#4c3466"/><rect x="1680" y="840" width="30" height="30" fill="#4c3466"/><rect x="1710" y="840" width="30" height="30" fill="#4d3265"/><rect x="1740" y="840" width="30" height="30" fill="#4f2f62"/><rect x="1770" y="840" width="30" height="30" fill="#4f2e61"/><rect x="1800" y="840" width="30" height="30" fill="#4f2e61"/><rect x="1830" y="840" width="30" height="30" fill="#502e60"/><rect x="1860" y="840" width="30" height="30" fill="#522b5e"/><rect x="1890" y="840" width="30" height="30" fill="#53285d"/><rect x="1920" y="840" width="30" height="30" fill="#53285d"/><rect x="1950" y="840" width="30" height="30" fill="#53295d"/><rect x="1980" y="840" width="30" height="30" fill="#52295e"/><rect x="-60" y="870" width="30" height="30" fill="#3b5583"/><rect x="-30" y="870" width="30" height="30" fill="#3b5583"/><rect x="0" y="870" width="30" height="30" fill="#3b5583"/><rect x="30" y="870" width="30" height="30" fill="#3b5583"/><rect x="60" y="870" width="30" height="30" fill="#3b5583"/><rect x="90" y="870" width="30" height="30" fill="#3b5583"/><rect x="120" y="870" width="30" height="30" fill="#3b5583"/><rect x="150" y="870" width="30" height="30" fill="#3c5484"/><rect x="180" y="870" width="30" height="30" fill="#3c5484"/><rect x="210" y="870" width="30" height="30" fill="#3c5484"/><rect x="240" y="870" width="30" height="30" fill="#3c5484"/><rect x="270" y="870" width="30" height="30" fill="#3e5385"/><rect x="300" y="870" width="30" height="30" fill="#405287"/><rect x="330" y="870" width="30" height="30" fill="#405387"/><rect x="360" y="870" width="30" height="30" fill="#405288"/><rect x="390" y="870" width="30" height="30" fill="#425289"/><rect x="420" y="870" width="30" height="30" fill="#44508b"/><rect x="450" y="870" width="30" height="30" fill="#45508c"/><rect x="480" y="870" width="30" height="30" fill="#45508c"/><rect x="510" y="870" width="30" height="30" fill="#46508c"/><rect x="540" y="870" width="30" height="30" fill="#474f8d"/><rect x="570" y="870" width="30" height="30" fill="#484f8e"/><rect x="600" y="870" width="30" height="30" fill="#484f8e"/><rect x="630" y="870" width="30" height="30" fill="#47508d"/><rect x="660" y="870" width="30" height="30" fill="#46508c"/><rect x="690" y="870" width="30" height="30" fill="#46508c"/><rect x="720" y="870" width="30" height="30" fill="#46508c"/><rect x="750" y="870" width="30" height="30" fill="#44508a"/><rect x="780" y="870" width="30" height="30" fill="#425188"/><rect x="810" y="870" width="30" height="30" fill="#425188"/><rect x="840" y="870" width="30" height="30" fill="#415188"/><rect x="870" y="870" width="30" height="30" fill="#405186"/><rect x="900" y="870" width="30" height="30" fill="#3e5184"/><rect x="930" y="870" width="30" height="30" fill="#3d5284"/><rect x="960" y="870" width="30" height="30" fill="#3d5283"/><rect x="990" y="870" width="30" height="30" fill="#3d5182"/><rect x="1020" y="870" width="30" height="30" fill="#3d5081"/><rect x="1050" y="870" width="30" height="30" fill="#3d5081"/><rect x="1080" y="870" width="30" height="30" fill="#3d5080"/><rect x="1110" y="870" width="30" height="30" fill="#3e4e7e"/><rect x="1140" y="870" width="30" height="30" fill="#3f4b7b"/><rect x="1170" y="870" width="30" height="30" fill="#3f4a7a"/><rect x="1200" y="870" width="30" height="30" fill="#3f4979"/><rect x="1230" y="870" width="30" height="30" fill="#414878"/><rect x="1260" y="870" width="30" height="30" fill="#424574"/><rect x="1290" y="870" width="30" height="30" fill="#434473"/><rect x="1320" y="870" width="30" height="30" fill="#434373"/><rect x="1350" y="870" width="30" height="30" fill="#444271"/><rect x="1380" y="870" width="30" height="30" fill="#463f6f"/><rect x="1410" y="870" width="30" height="30" fill="#463e6e"/><rect x="1440" y="870" width="30" height="30" fill="#463e6e"/><rect x="1470" y="870" width="30" height="30" fill="#473c6d"/><rect x="1500" y="870" width="30" height="30" fill="#493a6b"/><rect x="1530" y="870" width="30" height="30" fill="#49396a"/><rect x="1560" y="870" width="30" height="30" fill="#49396a"/><rect x="1590" y="870" width="30" height="30" fill="#4a3769"/><rect x="1620" y="870" width="30" height="30" fill="#4b3567"/><rect x="1650" y="870" width="30" height="30" fill="#4c3466"/><rect x="1680" y="870" width="30" height="30" fill="#4c3466"/><rect x="1710" y="870" width="30" height="30" fill="#4d3264"/><rect x="1740" y="870" width="30" height="30" fill="#4f2f62"/><rect x="1770" y="870" width="30" height="30" fill="#4f2e61"/><rect x="1800" y="870" width="30" height="30" fill="#4f2e61"/><rect x="1830" y="870" width="30" height="30" fill="#502d60"/><rect x="1860" y="870" width="30" height="30" fill="#522a5e"/><rect x="1890" y="870" width="30" height="30" fill="#53285d"/><rect x="1920" y="870" width="30" height="30" fill="#53285d"/><rect x="1950" y="870" width="30" height="30" fill="#53285d"/><rect x="1980" y="870" width="30" height="30" fill="#53295d"/><rect x="-60" y="900" width="30" height="30" fill="#3b5583"/><rect x="-30" y="900" width="30" height="30" fill="#3b5583"/><rect x="0" y="900" width="30" height="30" fill="#3b5583"/><rect x="30" y="900" width="30" height="30" fill="#3c5583"/><rect x="60" y="900" width="30" height="30" fill="#3c5583"/><rect x="90" y="900" width="30" height="30" fill="#3c5583"/><rect x="120" y="900" width="30" height="30" fill="#3c5584"/><rect x="150" y="900" width="30" height="30" fill="#3d5484"/><rect x="180" y="900" width="30" height="30" fill="#3e5386"/><rect x="210" y="900" width="30" height="30" fill="#3e5386"/><rect x="240" y="900" width="30" height="30" fill="#3f5387"/><rect x="270" y="900" width="30" height="30" fill="#405287"/><rect x="300" y="900" width="30" height="30" fill="#425289"/><rect x="330" y="900" width="30" height="30" fill="#43518a"/><rect x="360" y="900" width="30" height="30" fill="#43518b"/><rect x="390" y="900" width="30" height="30" fill="#44518b"/><rect x="420" y="900" width="30" height="30" fill="#46508c"/><rect x="450" y="900" width="30" height="30" fill="#47508d"/><rect x="480" y="900" width="30" height="30" fill="#47508d"/><rect x="510" y="900" width="30" height="30" fill="#47508d"/><rect x="540" y="900" width="30" height="30" fill="#46508c"/><rect x="570" y="900" width="30" height="30" fill="#46508c"/><rect x="600" y="900" width="30" height="30" fill="#46508c"/><rect x="630" y="900" width="30" height="30" fill="#45508b"/><rect x="660" y="900" width="30" height="30" fill="#44518a"/><rect x="690" y="900" width="30" height="30" fill="#43518a"/><rect x="720" y="900" width="30" height="30" fill="#435189"/><rect x="750" y="900" width="30" height="30" fill="#425188"/><rect x="780" y="900" width="30" height="30" fill="#405287"/><rect x="810" y="900" width="30" height="30" fill="#3f5285"/><rect x="840" y="900" width="30" height="30" fill="#3f5285"/><rect x="870" y="900" width="30" height="30" fill="#3f5184"/><rect x="900" y="900" width="30" height="30" fill="#3e5183"/><rect x="930" y="900" width="30" height="30" fill="#3d5182"/><rect x="960" y="900" width="30" height="30" fill="#3d5081"/><rect x="990" y="900" width="30" height="30" fill="#3e5081"/><rect x="1020" y="900" width="30" height="30" fill="#3e4e7f"/><rect x="1050" y="900" width="30" height="30" fill="#3e4e7f"/><rect x="1080" y="900" width="30" height="30" fill="#3e4d7e"/><rect x="1110" y="900" width="30" height="30" fill="#3f4c7d"/><rect x="1140" y="900" width="30" height="30" fill="#404a7a"/><rect x="1170" y="900" width="30" height="30" fill="#404879"/><rect x="1200" y="900" width="30" height="30" fill="#414878"/><rect x="1230" y="900" width="30" height="30" fill="#414676"/><rect x="1260" y="900" width="30" height="30" fill="#434474"/><rect x="1290" y="900" width="30" height="30" fill="#444272"/><rect x="1320" y="900" width="30" height="30" fill="#444272"/><rect x="1350" y="900" width="30" height="30" fill="#454170"/><rect x="1380" y="900" width="30" height="30" fill="#463e6e"/><rect x="1410" y="900" width="30" height="30" fill="#473d6d"/><rect x="1440" y="900" width="30" height="30" fill="#473c6d"/><rect x="1470" y="900" width="30" height="30" fill="#483b6c"/><rect x="1500" y="900" width="30" height="30" fill="#49396a"/><rect x="1530" y="900" width="30" height="30" fill="#493869"/><rect x="1560" y="900" width="30" height="30" fill="#4a3769"/><rect x="1590" y="900" width="30" height="30" fill="#4b3668"/><rect x="1620" y="900" width="30" height="30" fill="#4c3466"/><rect x="1650" y="900" width="30" height="30" fill="#4c3365"/><rect x="1680" y="900" width="30" height="30" fill="#4d3265"/><rect x="1710" y="900" width="30" height="30" fill="#4e3163"/><rect x="1740" y="900" width="30" height="30" fill="#4f2e62"/><rect x="1770" y="900" width="30" height="30" fill="#502d60"/><rect x="1800" y="900" width="30" height="30" fill="#502c60"/><rect x="1830" y="900" width="30" height="30" fill="#512b5f"/><rect x="1860" y="900" width="30" height="30" fill="#52295e"/><rect x="1890" y="900" width="30" height="30" fill="#53275d"/><rect x="1920" y="900" width="30" height="30" fill="#53275c"/><rect x="1950" y="900" width="30" height="30" fill="#53275d"/><rect x="1980" y="900" width="30" height="30" fill="#53285d"/><rect x="-60" y="930" width="30" height="30" fill="#3b5583"/><rect x="-30" y="930" width="30" height="30" fill="#3b5583"/><rect x="0" y="930" width="30" height="30" fill="#3b5583"/><rect x="30" y="930" width="30" height="30" fill="#3b5583"/><rect x="60" y="930" width="30" height="30" fill="#3c5583"/><rect x="90" y="930" width="30" height="30" fill="#3b5583"/><rect x="120" y="930" width="30" height="30" fill="#3b5583"/><rect x="150" y="930" width="30" height="30" fill="#3d5485"/><rect x="180" y="930" width="30" height="30" fill="#3f5387"/><rect x="210" y="930" width="30" height="30" fill="#405288"/><rect x="240" y="930" width="30" height="30" fill="#405288"/><rect x="270" y="930" width="30" height="30" fill="#415289"/><rect x="300" y="930" width="30" height="30" fill="#44518b"/><rect x="330" y="930" width="30" height="30" fill="#46508d"/><rect x="360" y="930" width="30" height="30" fill="#46508d"/><rect x="390" y="930" width="30" height="30" fill="#46508c"/><rect x="420" y="930" width="30" height="30" fill="#47508e"/><rect x="450" y="930" width="30" height="30" fill="#494f8f"/><rect x="480" y="930" width="30" height="30" fill="#494f8f"/><rect x="510" y="930" width="30" height="30" fill="#484f8e"/><rect x="540" y="930" width="30" height="30" fill="#46508c"/><rect x="570" y="930" width="30" height="30" fill="#46508c"/><rect x="600" y="930" width="30" height="30" fill="#46508c"/><rect x="630" y="930" width="30" height="30" fill="#45508b"/><rect x="660" y="930" width="30" height="30" fill="#425189"/><rect x="690" y="930" width="30" height="30" fill="#415288"/><rect x="720" y="930" width="30" height="30" fill="#415288"/><rect x="750" y="930" width="30" height="30" fill="#415287"/><rect x="780" y="930" width="30" height="30" fill="#3f5285"/><rect x="810" y="930" width="30" height="30" fill="#3d5483"/><rect x="840" y="930" width="30" height="30" fill="#3d5483"/><rect x="870" y="930" width="30" height="30" fill="#3d5283"/><rect x="900" y="930" width="30" height="30" fill="#3e5081"/><rect x="930" y="930" width="30" height="30" fill="#3d5080"/><rect x="960" y="930" width="30" height="30" fill="#3d5080"/><rect x="990" y="930" width="30" height="30" fill="#3e4f80"/><rect x="1020" y="930" width="30" height="30" fill="#3e4d7e"/><rect x="1050" y="930" width="30" height="30" fill="#3e4c7d"/><rect x="1080" y="930" width="30" height="30" fill="#3e4c7d"/><rect x="1110" y="930" width="30" height="30" fill="#3f4b7c"/><rect x="1140" y="930" width="30" height="30" fill="#404979"/><rect x="1170" y="930" width="30" height="30" fill="#414777"/><rect x="1200" y="930" width="30" height="30" fill="#414777"/><rect x="1230" y="930" width="30" height="30" fill="#424676"/><rect x="1260" y="930" width="30" height="30" fill="#434373"/><rect x="1290" y="930" width="30" height="30" fill="#444171"/><rect x="1320" y="930" width="30" height="30" fill="#444171"/><rect x="1350" y="930" width="30" height="30" fill="#454070"/><rect x="1380" y="930" width="30" height="30" fill="#463e6e"/><rect x="1410" y="930" width="30" height="30" fill="#473c6c"/><rect x="1440" y="930" width="30" height="30" fill="#473c6c"/><rect x="1470" y="930" width="30" height="30" fill="#483b6b"/><rect x="1500" y="930" width="30" height="30" fill="#493869"/><rect x="1530" y="930" width="30" height="30" fill="#4a3768"/><rect x="1560" y="930" width="30" height="30" fill="#4a3768"/><rect x="1590" y="930" width="30" height="30" fill="#4b3667"/><rect x="1620" y="930" width="30" height="30" fill="#4c3365"/><rect x="1650" y="930" width="30" height="30" fill="#4d3164"/><rect x="1680" y="930" width="30" height="30" fill="#4d3164"/><rect x="1710" y="930" width="30" height="30" fill="#4e3063"/><rect x="1740" y="930" width="30" height="30" fill="#502d61"/><rect x="1770" y="930" width="30" height="30" fill="#512b5f"/><rect x="1800" y="930" width="30" height="30" fill="#512b5f"/><rect x="1830" y="930" width="30" height="30" fill="#512b5f"/><rect x="1860" y="930" width="30" height="30" fill="#53285d"/><rect x="1890" y="930" width="30" height="30" fill="#54265b"/><rect x="1920" y="930" width="30" height="30" fill="#54255b"/><rect x="1950" y="930" width="30" height="30" fill="#53265c"/><rect x="1980" y="930" width="30" height="30" fill="#53275d"/><rect x="-60" y="960" width="30" height="30" fill="#3b5583"/><rect x="-30" y="960" width="30" height="30" fill="#3b5583"/><rect x="0" y="960" width="30" height="30" fill="#3b5583"/><rect x="30" y="960" width="30" height="30" fill="#3c5583"/><rect x="60" y="960" width="30" height="30" fill="#3c5484"/><rect x="90" y="960" width="30" height="30" fill="#3b5583"/><rect x="120" y="960" width="30" height="30" fill="#3b5583"/><rect x="150" y="960" width="30" height="30" fill="#3d5485"/><rect x="180" y="960" width="30" height="30" fill="#405287"/><rect x="210" y="960" width="30" height="30" fill="#405288"/><rect x="240" y="960" width="30" height="30" fill="#405288"/><rect x="270" y="960" width="30" height="30" fill="#425189"/><rect x="300" y="960" width="30" height="30" fill="#44518b"/><rect x="330" y="960" width="30" height="30" fill="#46508d"/><rect x="360" y="960" width="30" height="30" fill="#46508d"/><rect x="390" y="960" width="30" height="30" fill="#46508d"/><rect x="420" y="960" width="30" height="30" fill="#48508e"/><rect x="450" y="960" width="30" height="30" fill="#494f8f"/><rect x="480" y="960" width="30" height="30" fill="#494f8f"/><rect x="510" y="960" width="30" height="30" fill="#47508d"/><rect x="540" y="960" width="30" height="30" fill="#46508c"/><rect x="570" y="960" width="30" height="30" fill="#46508c"/><rect x="600" y="960" width="30" height="30" fill="#46508c"/><rect x="630" y="960" width="30" height="30" fill="#44518a"/><rect x="660" y="960" width="30" height="30" fill="#425188"/><rect x="690" y="960" width="30" height="30" fill="#415288"/><rect x="720" y="960" width="30" height="30" fill="#415288"/><rect x="750" y="960" width="30" height="30" fill="#405286"/><rect x="780" y="960" width="30" height="30" fill="#3e5284"/><rect x="810" y="960" width="30" height="30" fill="#3c5483"/><rect x="840" y="960" width="30" height="30" fill="#3c5383"/><rect x="870" y="960" width="30" height="30" fill="#3d5282"/><rect x="900" y="960" width="30" height="30" fill="#3e5081"/><rect x="930" y="960" width="30" height="30" fill="#3d5080"/><rect x="960" y="960" width="30" height="30" fill="#3d5080"/><rect x="990" y="960" width="30" height="30" fill="#3e4f7f"/><rect x="1020" y="960" width="30" height="30" fill="#3e4d7e"/><rect x="1050" y="960" width="30" height="30" fill="#3e4c7d"/><rect x="1080" y="960" width="30" height="30" fill="#3e4c7d"/><rect x="1110" y="960" width="30" height="30" fill="#3f4b7b"/><rect x="1140" y="960" width="30" height="30" fill="#404878"/><rect x="1170" y="960" width="30" height="30" fill="#414777"/><rect x="1200" y="960" width="30" height="30" fill="#414777"/><rect x="1230" y="960" width="30" height="30" fill="#424575"/><rect x="1260" y="960" width="30" height="30" fill="#434272"/><rect x="1290" y="960" width="30" height="30" fill="#444171"/><rect x="1320" y="960" width="30" height="30" fill="#444171"/><rect x="1350" y="960" width="30" height="30" fill="#454070"/><rect x="1380" y="960" width="30" height="30" fill="#463d6d"/><rect x="1410" y="960" width="30" height="30" fill="#473c6c"/><rect x="1440" y="960" width="30" height="30" fill="#473c6c"/><rect x="1470" y="960" width="30" height="30" fill="#483b6b"/><rect x="1500" y="960" width="30" height="30" fill="#493869"/><rect x="1530" y="960" width="30" height="30" fill="#4a3768"/><rect x="1560" y="960" width="30" height="30" fill="#4a3768"/><rect x="1590" y="960" width="30" height="30" fill="#4b3667"/><rect x="1620" y="960" width="30" height="30" fill="#4c3365"/><rect x="1650" y="960" width="30" height="30" fill="#4d3164"/><rect x="1680" y="960" width="30" height="30" fill="#4d3164"/><rect x="1710" y="960" width="30" height="30" fill="#4e3063"/><rect x="1740" y="960" width="30" height="30" fill="#502d60"/><rect x="1770" y="960" width="30" height="30" fill="#512b5f"/><rect x="1800" y="960" width="30" height="30" fill="#512b5f"/><rect x="1830" y="960" width="30" height="30" fill="#512a5f"/><rect x="1860" y="960" width="30" height="30" fill="#53275d"/><rect x="1890" y="960" width="30" height="30" fill="#54255b"/><rect x="1920" y="960" width="30" height="30" fill="#54255b"/><rect x="1950" y="960" width="30" height="30" fill="#54265c"/><rect x="1980" y="960" width="30" height="30" fill="#53275c"/><rect x="-60" y="990" width="30" height="30" fill="#3b5583"/><rect x="-30" y="990" width="30" height="30" fill="#3b5583"/><rect x="0" y="990" width="30" height="30" fill="#3b5583"/><rect x="30" y="990" width="30" height="30" fill="#3c5484"/><rect x="60" y="990" width="30" height="30" fill="#3d5485"/><rect x="90" y="990" width="30" height="30" fill="#3d5485"/><rect x="120" y="990" width="30" height="30" fill="#3e5486"/><rect x="150" y="990" width="30" height="30" fill="#3f5387"/><rect x="180" y="990" width="30" height="30" fill="#415288"/><rect x="210" y="990" width="30" height="30" fill="#425189"/><rect x="240" y="990" width="30" height="30" fill="#43518a"/><rect x="270" y="990" width="30" height="30" fill="#44518a"/><rect x="300" y="990" width="30" height="30" fill="#45508c"/><rect x="330" y="990" width="30" height="30" fill="#46508d"/><rect x="360" y="990" width="30" height="30" fill="#46508d"/><rect x="390" y="990" width="30" height="30" fill="#46508d"/><rect x="420" y="990" width="30" height="30" fill="#47508d"/><rect x="450" y="990" width="30" height="30" fill="#47508d"/><rect x="480" y="990" width="30" height="30" fill="#47508d"/><rect x="510" y="990" width="30" height="30" fill="#46508c"/><rect x="540" y="990" width="30" height="30" fill="#44508b"/><rect x="570" y="990" width="30" height="30" fill="#44518a"/><rect x="600" y="990" width="30" height="30" fill="#43518a"/><rect x="630" y="990" width="30" height="30" fill="#425189"/><rect x="660" y="990" width="30" height="30" fill="#415287"/><rect x="690" y="990" width="30" height="30" fill="#405286"/><rect x="720" y="990" width="30" height="30" fill="#3f5286"/><rect x="750" y="990" width="30" height="30" fill="#3f5285"/><rect x="780" y="990" width="30" height="30" fill="#3e5283"/><rect x="810" y="990" width="30" height="30" fill="#3d5282"/><rect x="840" y="990" width="30" height="30" fill="#3d5182"/><rect x="870" y="990" width="30" height="30" fill="#3e5081"/><rect x="900" y="990" width="30" height="30" fill="#3e4f80"/><rect x="930" y="990" width="30" height="30" fill="#3e4f7f"/><rect x="960" y="990" width="30" height="30" fill="#3e4e7f"/><rect x="990" y="990" width="30" height="30" fill="#3e4d7e"/><rect x="1020" y="990" width="30" height="30" fill="#3f4c7d"/><rect x="1050" y="990" width="30" height="30" fill="#3f4b7c"/><rect x="1080" y="990" width="30" height="30" fill="#3f4b7c"/><rect x="1110" y="990" width="30" height="30" fill="#404a7a"/><rect x="1140" y="990" width="30" height="30" fill="#414878"/><rect x="1170" y="990" width="30" height="30" fill="#414776"/><rect x="1200" y="990" width="30" height="30" fill="#424676"/><rect x="1230" y="990" width="30" height="30" fill="#424574"/><rect x="1260" y="990" width="30" height="30" fill="#444272"/><rect x="1290" y="990" width="30" height="30" fill="#444171"/><rect x="1320" y="990" width="30" height="30" fill="#454070"/><rect x="1350" y="990" width="30" height="30" fill="#453f6f"/><rect x="1380" y="990" width="30" height="30" fill="#473d6d"/><rect x="1410" y="990" width="30" height="30" fill="#473c6c"/><rect x="1440" y="990" width="30" height="30" fill="#483b6b"/><rect x="1470" y="990" width="30" height="30" fill="#483a6a"/><rect x="1500" y="990" width="30" height="30" fill="#493869"/><rect x="1530" y="990" width="30" height="30" fill="#4a3768"/><rect x="1560" y="990" width="30" height="30" fill="#4a3667"/><rect x="1590" y="990" width="30" height="30" fill="#4b3566"/><rect x="1620" y="990" width="30" height="30" fill="#4c3265"/><rect x="1650" y="990" width="30" height="30" fill="#4d3164"/><rect x="1680" y="990" width="30" height="30" fill="#4d3063"/><rect x="1710" y="990" width="30" height="30" fill="#4e2f62"/><rect x="1740" y="990" width="30" height="30" fill="#502d60"/><rect x="1770" y="990" width="30" height="30" fill="#512b5f"/><rect x="1800" y="990" width="30" height="30" fill="#512b5f"/><rect x="1830" y="990" width="30" height="30" fill="#522a5e"/><rect x="1860" y="990" width="30" height="30" fill="#53275d"/><rect x="1890" y="990" width="30" height="30" fill="#54265b"/><rect x="1920" y="990" width="30" height="30" fill="#54265b"/><rect x="1950" y="990" width="30" height="30" fill="#54265c"/><rect x="1980" y="990" width="30" height="30" fill="#53275c"/><rect x="-60" y="1020" width="30" height="30" fill="#3b5583"/><rect x="-30" y="1020" width="30" height="30" fill="#3b5583"/><rect x="0" y="1020" width="30" height="30" fill="#3b5583"/><rect x="30" y="1020" width="30" height="30" fill="#3c5484"/><rect x="60" y="1020" width="30" height="30" fill="#3f5387"/><rect x="90" y="1020" width="30" height="30" fill="#405288"/><rect x="120" y="1020" width="30" height="30" fill="#415288"/><rect x="150" y="1020" width="30" height="30" fill="#415288"/><rect x="180" y="1020" width="30" height="30" fill="#44518a"/><rect x="210" y="1020" width="30" height="30" fill="#46508c"/><rect x="240" y="1020" width="30" height="30" fill="#46508c"/><rect x="270" y="1020" width="30" height="30" fill="#46508c"/><rect x="300" y="1020" width="30" height="30" fill="#47508d"/><rect x="330" y="1020" width="30" height="30" fill="#484f8e"/><rect x="360" y="1020" width="30" height="30" fill="#484f8e"/><rect x="390" y="1020" width="30" height="30" fill="#47508d"/><rect x="420" y="1020" width="30" height="30" fill="#46508c"/><rect x="450" y="1020" width="30" height="30" fill="#45508b"/><rect x="480" y="1020" width="30" height="30" fill="#45508b"/><rect x="510" y="1020" width="30" height="30" fill="#45508b"/><rect x="540" y="1020" width="30" height="30" fill="#435189"/><rect x="570" y="1020" width="30" height="30" fill="#415288"/><rect x="600" y="1020" width="30" height="30" fill="#415287"/><rect x="630" y="1020" width="30" height="30" fill="#415287"/><rect x="660" y="1020" width="30" height="30" fill="#3e5385"/><rect x="690" y="1020" width="30" height="30" fill="#3c5384"/><rect x="720" y="1020" width="30" height="30" fill="#3c5384"/><rect x="750" y="1020" width="30" height="30" fill="#3d5284"/><rect x="780" y="1020" width="30" height="30" fill="#3e5182"/><rect x="810" y="1020" width="30" height="30" fill="#3d4f81"/><rect x="840" y="1020" width="30" height="30" fill="#3d4f80"/><rect x="870" y="1020" width="30" height="30" fill="#3e4f80"/><rect x="900" y="1020" width="30" height="30" fill="#3e4e7f"/><rect x="930" y="1020" width="30" height="30" fill="#3e4d7e"/><rect x="960" y="1020" width="30" height="30" fill="#3e4c7d"/><rect x="990" y="1020" width="30" height="30" fill="#3e4c7d"/><rect x="1020" y="1020" width="30" height="30" fill="#3f4b7c"/><rect x="1050" y="1020" width="30" height="30" fill="#3f4a7a"/><rect x="1080" y="1020" width="30" height="30" fill="#3f4a7a"/><rect x="1110" y="1020" width="30" height="30" fill="#404979"/><rect x="1140" y="1020" width="30" height="30" fill="#414777"/><rect x="1170" y="1020" width="30" height="30" fill="#424575"/><rect x="1200" y="1020" width="30" height="30" fill="#424574"/><rect x="1230" y="1020" width="30" height="30" fill="#434474"/><rect x="1260" y="1020" width="30" height="30" fill="#444171"/><rect x="1290" y="1020" width="30" height="30" fill="#46406f"/><rect x="1320" y="1020" width="30" height="30" fill="#463f6e"/><rect x="1350" y="1020" width="30" height="30" fill="#463e6e"/><rect x="1380" y="1020" width="30" height="30" fill="#473c6c"/><rect x="1410" y="1020" width="30" height="30" fill="#483a6b"/><rect x="1440" y="1020" width="30" height="30" fill="#483a6a"/><rect x="1470" y="1020" width="30" height="30" fill="#48396a"/><rect x="1500" y="1020" width="30" height="30" fill="#4a3768"/><rect x="1530" y="1020" width="30" height="30" fill="#4b3566"/><rect x="1560" y="1020" width="30" height="30" fill="#4b3566"/><rect x="1590" y="1020" width="30" height="30" fill="#4b3466"/><rect x="1620" y="1020" width="30" height="30" fill="#4d3164"/><rect x="1650" y="1020" width="30" height="30" fill="#4e3062"/><rect x="1680" y="1020" width="30" height="30" fill="#4e2f62"/><rect x="1710" y="1020" width="30" height="30" fill="#4f2e62"/><rect x="1740" y="1020" width="30" height="30" fill="#502c60"/><rect x="1770" y="1020" width="30" height="30" fill="#522a5e"/><rect x="1800" y="1020" width="30" height="30" fill="#52295e"/><rect x="1830" y="1020" width="30" height="30" fill="#52295e"/><rect x="1860" y="1020" width="30" height="30" fill="#53275c"/><rect x="1890" y="1020" width="30" height="30" fill="#55255b"/><rect x="1920" y="1020" width="30" height="30" fill="#55255a"/><rect x="1950" y="1020" width="30" height="30" fill="#54255b"/><rect x="1980" y="1020" width="30" height="30" fill="#54265c"/><rect x="-60" y="1050" width="30" height="30" fill="#3b5583"/><rect x="-30" y="1050" width="30" height="30" fill="#3b5583"/><rect x="0" y="1050" width="30" height="30" fill="#3b5583"/><rect x="30" y="1050" width="30" height="30" fill="#3c5484"/><rect x="60" y="1050" width="30" height="30" fill="#3f5387"/><rect x="90" y="1050" width="30" height="30" fill="#415289"/><rect x="120" y="1050" width="30" height="30" fill="#415289"/><rect x="150" y="1050" width="30" height="30" fill="#425289"/><rect x="180" y="1050" width="30" height="30" fill="#45518b"/><rect x="210" y="1050" width="30" height="30" fill="#47508d"/><rect x="240" y="1050" width="30" height="30" fill="#47508d"/><rect x="270" y="1050" width="30" height="30" fill="#46508c"/><rect x="300" y="1050" width="30" height="30" fill="#47508e"/><rect x="330" y="1050" width="30" height="30" fill="#494f8f"/><rect x="360" y="1050" width="30" height="30" fill="#494f8f"/><rect x="390" y="1050" width="30" height="30" fill="#474f8e"/><rect x="420" y="1050" width="30" height="30" fill="#46508c"/><rect x="450" y="1050" width="30" height="30" fill="#45508b"/><rect x="480" y="1050" width="30" height="30" fill="#45508b"/><rect x="510" y="1050" width="30" height="30" fill="#44508a"/><rect x="540" y="1050" width="30" height="30" fill="#425188"/><rect x="570" y="1050" width="30" height="30" fill="#405287"/><rect x="600" y="1050" width="30" height="30" fill="#405287"/><rect x="630" y="1050" width="30" height="30" fill="#405287"/><rect x="660" y="1050" width="30" height="30" fill="#3d5385"/><rect x="690" y="1050" width="30" height="30" fill="#3b5483"/><rect x="720" y="1050" width="30" height="30" fill="#3b5483"/><rect x="750" y="1050" width="30" height="30" fill="#3c5383"/><rect x="780" y="1050" width="30" height="30" fill="#3d5081"/><rect x="810" y="1050" width="30" height="30" fill="#3d4f80"/><rect x="840" y="1050" width="30" height="30" fill="#3d4f80"/><rect x="870" y="1050" width="30" height="30" fill="#3e4f80"/><rect x="900" y="1050" width="30" height="30" fill="#3e4d7e"/><rect x="930" y="1050" width="30" height="30" fill="#3e4c7d"/><rect x="960" y="1050" width="30" height="30" fill="#3e4c7d"/><rect x="990" y="1050" width="30" height="30" fill="#3e4c7d"/><rect x="1020" y="1050" width="30" height="30" fill="#3f4b7b"/><rect x="1050" y="1050" width="30" height="30" fill="#3f4a7a"/><rect x="1080" y="1050" width="30" height="30" fill="#3f4a7a"/><rect x="1110" y="1050" width="30" height="30" fill="#404979"/><rect x="1140" y="1050" width="30" height="30" fill="#414676"/><rect x="1170" y="1050" width="30" height="30" fill="#424574"/><rect x="1200" y="1050" width="30" height="30" fill="#424574"/><rect x="1230" y="1050" width="30" height="30" fill="#434473"/><rect x="1260" y="1050" width="30" height="30" fill="#454170"/><rect x="1290" y="1050" width="30" height="30" fill="#463f6e"/><rect x="1320" y="1050" width="30" height="30" fill="#463f6e"/><rect x="1350" y="1050" width="30" height="30" fill="#463e6e"/><rect x="1380" y="1050" width="30" height="30" fill="#473c6c"/><rect x="1410" y="1050" width="30" height="30" fill="#483a6a"/><rect x="1440" y="1050" width="30" height="30" fill="#483a6a"/><rect x="1470" y="1050" width="30" height="30" fill="#48396a"/><rect x="1500" y="1050" width="30" height="30" fill="#4a3767"/><rect x="1530" y="1050" width="30" height="30" fill="#4b3566"/><rect x="1560" y="1050" width="30" height="30" fill="#4b3566"/><rect x="1590" y="1050" width="30" height="30" fill="#4b3466"/><rect x="1620" y="1050" width="30" height="30" fill="#4d3163"/><rect x="1650" y="1050" width="30" height="30" fill="#4e2f62"/><rect x="1680" y="1050" width="30" height="30" fill="#4e2f62"/><rect x="1710" y="1050" width="30" height="30" fill="#4f2e62"/><rect x="1740" y="1050" width="30" height="30" fill="#512b5f"/><rect x="1770" y="1050" width="30" height="30" fill="#52295e"/><rect x="1800" y="1050" width="30" height="30" fill="#52295e"/><rect x="1830" y="1050" width="30" height="30" fill="#52295e"/><rect x="1860" y="1050" width="30" height="30" fill="#54265c"/><rect x="1890" y="1050" width="30" height="30" fill="#55245a"/><rect x="1920" y="1050" width="30" height="30" fill="#55245a"/><rect x="1950" y="1050" width="30" height="30" fill="#54255b"/><rect x="1980" y="1050" width="30" height="30" fill="#54265c"/><rect x="-60" y="1080" width="30" height="30" fill="#3c5583"/><rect x="-30" y="1080" width="30" height="30" fill="#3b5583"/><rect x="0" y="1080" width="30" height="30" fill="#3b5583"/><rect x="30" y="1080" width="30" height="30" fill="#3d5485"/><rect x="60" y="1080" width="30" height="30" fill="#3f5387"/><rect x="90" y="1080" width="30" height="30" fill="#415288"/><rect x="120" y="1080" width="30" height="30" fill="#415289"/><rect x="150" y="1080" width="30" height="30" fill="#425289"/><rect x="180" y="1080" width="30" height="30" fill="#44518b"/><rect x="210" y="1080" width="30" height="30" fill="#46508c"/><rect x="240" y="1080" width="30" height="30" fill="#46508c"/><rect x="270" y="1080" width="30" height="30" fill="#46508c"/><rect x="300" y="1080" width="30" height="30" fill="#47508d"/><rect x="330" y="1080" width="30" height="30" fill="#484f8e"/><rect x="360" y="1080" width="30" height="30" fill="#484f8e"/><rect x="390" y="1080" width="30" height="30" fill="#474f8d"/><rect x="420" y="1080" width="30" height="30" fill="#46508c"/><rect x="450" y="1080" width="30" height="30" fill="#45508b"/><rect x="480" y="1080" width="30" height="30" fill="#45508b"/><rect x="510" y="1080" width="30" height="30" fill="#44508a"/><rect x="540" y="1080" width="30" height="30" fill="#425188"/><rect x="570" y="1080" width="30" height="30" fill="#415287"/><rect x="600" y="1080" width="30" height="30" fill="#405287"/><rect x="630" y="1080" width="30" height="30" fill="#405286"/><rect x="660" y="1080" width="30" height="30" fill="#3e5385"/><rect x="690" y="1080" width="30" height="30" fill="#3c5384"/><rect x="720" y="1080" width="30" height="30" fill="#3c5383"/><rect x="750" y="1080" width="30" height="30" fill="#3d5283"/><rect x="780" y="1080" width="30" height="30" fill="#3d5081"/><rect x="810" y="1080" width="30" height="30" fill="#3d4f80"/><rect x="840" y="1080" width="30" height="30" fill="#3d4f80"/><rect x="870" y="1080" width="30" height="30" fill="#3e4e80"/><rect x="900" y="1080" width="30" height="30" fill="#3e4d7e"/><rect x="930" y="1080" width="30" height="30" fill="#3e4c7d"/><rect x="960" y="1080" width="30" height="30" fill="#3e4c7d"/><rect x="990" y="1080" width="30" height="30" fill="#3f4c7d"/><rect x="1020" y="1080" width="30" height="30" fill="#3f4b7b"/><rect x="1050" y="1080" width="30" height="30" fill="#3f4a7a"/><rect x="1080" y="1080" width="30" height="30" fill="#3f4a7a"/><rect x="1110" y="1080" width="30" height="30" fill="#404979"/><rect x="1140" y="1080" width="30" height="30" fill="#414776"/><rect x="1170" y="1080" width="30" height="30" fill="#424575"/><rect x="1200" y="1080" width="30" height="30" fill="#424574"/><rect x="1230" y="1080" width="30" height="30" fill="#434473"/><rect x="1260" y="1080" width="30" height="30" fill="#454170"/><rect x="1290" y="1080" width="30" height="30" fill="#46406f"/><rect x="1320" y="1080" width="30" height="30" fill="#463f6e"/><rect x="1350" y="1080" width="30" height="30" fill="#463e6e"/><rect x="1380" y="1080" width="30" height="30" fill="#473c6c"/><rect x="1410" y="1080" width="30" height="30" fill="#483a6b"/><rect x="1440" y="1080" width="30" height="30" fill="#483a6a"/><rect x="1470" y="1080" width="30" height="30" fill="#49396a"/><rect x="1500" y="1080" width="30" height="30" fill="#4a3768"/><rect x="1530" y="1080" width="30" height="30" fill="#4b3566"/><rect x="1560" y="1080" width="30" height="30" fill="#4b3566"/><rect x="1590" y="1080" width="30" height="30" fill="#4c3466"/><rect x="1620" y="1080" width="30" height="30" fill="#4d3164"/><rect x="1650" y="1080" width="30" height="30" fill="#4e3062"/><rect x="1680" y="1080" width="30" height="30" fill="#4e2f62"/><rect x="1710" y="1080" width="30" height="30" fill="#4f2e62"/><rect x="1740" y="1080" width="30" height="30" fill="#502c60"/><rect x="1770" y="1080" width="30" height="30" fill="#522a5f"/><rect x="1800" y="1080" width="30" height="30" fill="#52295e"/><rect x="1830" y="1080" width="30" height="30" fill="#52295e"/><rect x="1860" y="1080" width="30" height="30" fill="#53275c"/><rect x="1890" y="1080" width="30" height="30" fill="#54255b"/><rect x="1920" y="1080" width="30" height="30" fill="#55255b"/><rect x="1950" y="1080" width="30" height="30" fill="#54255b"/><rect x="1980" y="1080" width="30" height="30" fill="#54265c"/><rect x="-60" y="1110" width="30" height="30" fill="#3c5484"/><rect x="-30" y="1110" width="30" height="30" fill="#3c5484"/><rect x="0" y="1110" width="30" height="30" fill="#3c5484"/><rect x="30" y="1110" width="30" height="30" fill="#3d5485"/><rect x="60" y="1110" width="30" height="30" fill="#3f5387"/><rect x="90" y="1110" width="30" height="30" fill="#405288"/><rect x="120" y="1110" width="30" height="30" fill="#415288"/><rect x="150" y="1110" width="30" height="30" fill="#425289"/><rect x="180" y="1110" width="30" height="30" fill="#44518a"/><rect x="210" y="1110" width="30" height="30" fill="#45518b"/><rect x="240" y="1110" width="30" height="30" fill="#45508c"/><rect x="270" y="1110" width="30" height="30" fill="#46508c"/><rect x="300" y="1110" width="30" height="30" fill="#46508c"/><rect x="330" y="1110" width="30" height="30" fill="#47508d"/><rect x="360" y="1110" width="30" height="30" fill="#47508d"/><rect x="390" y="1110" width="30" height="30" fill="#46508c"/><rect x="420" y="1110" width="30" height="30" fill="#45508b"/><rect x="450" y="1110" width="30" height="30" fill="#45508b"/><rect x="480" y="1110" width="30" height="30" fill="#44508a"/><rect x="510" y="1110" width="30" height="30" fill="#44508a"/><rect x="540" y="1110" width="30" height="30" fill="#425188"/><rect x="570" y="1110" width="30" height="30" fill="#415188"/><rect x="600" y="1110" width="30" height="30" fill="#415187"/><rect x="630" y="1110" width="30" height="30" fill="#405286"/><rect x="660" y="1110" width="30" height="30" fill="#3f5285"/><rect x="690" y="1110" width="30" height="30" fill="#3d5284"/><rect x="720" y="1110" width="30" height="30" fill="#3d5283"/><rect x="750" y="1110" width="30" height="30" fill="#3d5183"/><rect x="780" y="1110" width="30" height="30" fill="#3e5082"/><rect x="810" y="1110" width="30" height="30" fill="#3e4f81"/><rect x="840" y="1110" width="30" height="30" fill="#3e4f80"/><rect x="870" y="1110" width="30" height="30" fill="#3e4e80"/><rect x="900" y="1110" width="30" height="30" fill="#3e4d7f"/><rect x="930" y="1110" width="30" height="30" fill="#3e4d7e"/><rect x="960" y="1110" width="30" height="30" fill="#3f4c7d"/><rect x="990" y="1110" width="30" height="30" fill="#3f4c7d"/><rect x="1020" y="1110" width="30" height="30" fill="#3f4b7b"/><rect x="1050" y="1110" width="30" height="30" fill="#3f4a7b"/><rect x="1080" y="1110" width="30" height="30" fill="#40497a"/><rect x="1110" y="1110" width="30" height="30" fill="#404879"/><rect x="1140" y="1110" width="30" height="30" fill="#414777"/><rect x="1170" y="1110" width="30" height="30" fill="#424675"/><rect x="1200" y="1110" width="30" height="30" fill="#424574"/><rect x="1230" y="1110" width="30" height="30" fill="#434373"/><rect x="1260" y="1110" width="30" height="30" fill="#444271"/><rect x="1290" y="1110" width="30" height="30" fill="#454070"/><rect x="1320" y="1110" width="30" height="30" fill="#463f6f"/><rect x="1350" y="1110" width="30" height="30" fill="#463e6e"/><rect x="1380" y="1110" width="30" height="30" fill="#473c6c"/><rect x="1410" y="1110" width="30" height="30" fill="#483b6b"/><rect x="1440" y="1110" width="30" height="30" fill="#483a6b"/><rect x="1470" y="1110" width="30" height="30" fill="#49396a"/><rect x="1500" y="1110" width="30" height="30" fill="#4a3768"/><rect x="1530" y="1110" width="30" height="30" fill="#4a3667"/><rect x="1560" y="1110" width="30" height="30" fill="#4b3567"/><rect x="1590" y="1110" width="30" height="30" fill="#4c3466"/><rect x="1620" y="1110" width="30" height="30" fill="#4d3264"/><rect x="1650" y="1110" width="30" height="30" fill="#4d3063"/><rect x="1680" y="1110" width="30" height="30" fill="#4e3063"/><rect x="1710" y="1110" width="30" height="30" fill="#4f2e62"/><rect x="1740" y="1110" width="30" height="30" fill="#502d60"/><rect x="1770" y="1110" width="30" height="30" fill="#512b5f"/><rect x="1800" y="1110" width="30" height="30" fill="#512a5f"/><rect x="1830" y="1110" width="30" height="30" fill="#52295e"/><rect x="1860" y="1110" width="30" height="30" fill="#53285d"/><rect x="1890" y="1110" width="30" height="30" fill="#54265c"/><rect x="1920" y="1110" width="30" height="30" fill="#54265c"/><rect x="1950" y="1110" width="30" height="30" fill="#54265c"/><rect x="1980" y="1110" width="30" height="30" fill="#53275d"/><rect x="-60" y="1140" width="30" height="30" fill="#3d5484"/><rect x="-30" y="1140" width="30" height="30" fill="#3d5484"/><rect x="0" y="1140" width="30" height="30" fill="#3d5485"/><rect x="30" y="1140" width="30" height="30" fill="#3e5385"/><rect x="60" y="1140" width="30" height="30" fill="#3f5387"/><rect x="90" y="1140" width="30" height="30" fill="#405287"/><rect x="120" y="1140" width="30" height="30" fill="#415288"/><rect x="150" y="1140" width="30" height="30" fill="#425289"/><rect x="180" y="1140" width="30" height="30" fill="#43518a"/><rect x="210" y="1140" width="30" height="30" fill="#44518a"/><rect x="240" y="1140" width="30" height="30" fill="#45508b"/><rect x="270" y="1140" width="30" height="30" fill="#45508b"/><rect x="300" y="1140" width="30" height="30" fill="#46508c"/><rect x="330" y="1140" width="30" height="30" fill="#46508c"/><rect x="360" y="1140" width="30" height="30" fill="#46508c"/><rect x="390" y="1140" width="30" height="30" fill="#46508b"/><rect x="420" y="1140" width="30" height="30" fill="#45508b"/><rect x="450" y="1140" width="30" height="30" fill="#45508a"/><rect x="480" y="1140" width="30" height="30" fill="#44508a"/><rect x="510" y="1140" width="30" height="30" fill="#435089"/><rect x="540" y="1140" width="30" height="30" fill="#425188"/><rect x="570" y="1140" width="30" height="30" fill="#425188"/><rect x="600" y="1140" width="30" height="30" fill="#415187"/><rect x="630" y="1140" width="30" height="30" fill="#405186"/><rect x="660" y="1140" width="30" height="30" fill="#3f5185"/><rect x="690" y="1140" width="30" height="30" fill="#3f5284"/><rect x="720" y="1140" width="30" height="30" fill="#3e5184"/><rect x="750" y="1140" width="30" height="30" fill="#3e5183"/><rect x="780" y="1140" width="30" height="30" fill="#3e5082"/><rect x="810" y="1140" width="30" height="30" fill="#3e4f81"/><rect x="840" y="1140" width="30" height="30" fill="#3e4f81"/><rect x="870" y="1140" width="30" height="30" fill="#3f4e80"/><rect x="900" y="1140" width="30" height="30" fill="#3f4d7f"/><rect x="930" y="1140" width="30" height="30" fill="#3f4d7e"/><rect x="960" y="1140" width="30" height="30" fill="#3f4c7d"/><rect x="990" y="1140" width="30" height="30" fill="#3f4b7d"/><rect x="1020" y="1140" width="30" height="30" fill="#404b7c"/><rect x="1050" y="1140" width="30" height="30" fill="#404a7b"/><rect x="1080" y="1140" width="30" height="30" fill="#40497a"/><rect x="1110" y="1140" width="30" height="30" fill="#414879"/><rect x="1140" y="1140" width="30" height="30" fill="#414777"/><rect x="1170" y="1140" width="30" height="30" fill="#424676"/><rect x="1200" y="1140" width="30" height="30" fill="#434575"/><rect x="1230" y="1140" width="30" height="30" fill="#434373"/><rect x="1260" y="1140" width="30" height="30" fill="#444272"/><rect x="1290" y="1140" width="30" height="30" fill="#454170"/><rect x="1320" y="1140" width="30" height="30" fill="#46406f"/><rect x="1350" y="1140" width="30" height="30" fill="#463e6e"/><rect x="1380" y="1140" width="30" height="30" fill="#473d6d"/><rect x="1410" y="1140" width="30" height="30" fill="#473c6c"/><rect x="1440" y="1140" width="30" height="30" fill="#483b6b"/><rect x="1470" y="1140" width="30" height="30" fill="#49396a"/><rect x="1500" y="1140" width="30" height="30" fill="#493869"/><rect x="1530" y="1140" width="30" height="30" fill="#4a3768"/><rect x="1560" y="1140" width="30" height="30" fill="#4b3667"/><rect x="1590" y="1140" width="30" height="30" fill="#4b3466"/><rect x="1620" y="1140" width="30" height="30" fill="#4c3365"/><rect x="1650" y="1140" width="30" height="30" fill="#4d3164"/><rect x="1680" y="1140" width="30" height="30" fill="#4e3063"/><rect x="1710" y="1140" width="30" height="30" fill="#4e2f62"/><rect x="1740" y="1140" width="30" height="30" fill="#4f2e61"/><rect x="1770" y="1140" width="30" height="30" fill="#502c60"/><rect x="1800" y="1140" width="30" height="30" fill="#512b60"/><rect x="1830" y="1140" width="30" height="30" fill="#512a5f"/><rect x="1860" y="1140" width="30" height="30" fill="#52295e"/><rect x="1890" y="1140" width="30" height="30" fill="#53285d"/><rect x="1920" y="1140" width="30" height="30" fill="#53285d"/><rect x="1950" y="1140" width="30" height="30" fill="#53285d"/><rect x="1980" y="1140" width="30" height="30" fill="#52295e"/></g><defs><linearGradient id="sw1" x1="0" y1="612" x2="0" y2="760" gradientUnits="userSpaceOnUse"><stop offset="0" stop-color="#8a8ad0" stop-opacity=".16"/><stop offset="1" stop-color="#8a8ad0" stop-opacity="0"/></linearGradient></defs><path d="M1050 617 L1135 611 L1135 880 L1050 880 Z" fill="url(#sw1)"/><path d="M570 411 L760 459 L760 487 L570 459 Z" fill="#8090c0" fill-opacity="0.28"/><path d="M570 482 L760 506 L760 515 L570 500 Z" fill="#8595c8" fill-opacity="0.28"/><path d="M690 530.6 L760 545 L760 550 Z" fill="#8a9ac8" fill-opacity="0.3"/><path d="M400 521 L584 545 L760 589 L760 628 L686 605 L589 577 L494 549 Z" fill="#9aa8cc" fill-opacity="0.3"/><path d="M110 545 L252 545 L160 578 L27 578 L12 584 Z" fill="#7a90c8" fill-opacity="0.14"/><path d="M-5 529 L26 525.5 L26 548 L-5 553 Z" fill="#8a96c4" fill-opacity="0.22"/><path d="M-5 483 L26 481 L26 525.5 L-5 529 Z" fill="#6a7ab0" fill-opacity="0.08"/><path d="M1050 547.5 L1135 537.5 L1135 569 L1050 573.5 Z" fill="#9a98c0" fill-opacity="0.22"/><path d="M1050 559 L1135 595 L1135 606 L1050 569 Z" fill="#7a90d8" fill-opacity="0.3"/><path d="M1785 496 L1925 467 L1925 566 L1785 580 Z" fill="#a080b0" fill-opacity="0.07"/><path d="M1785 588 L1925 576 L1925 700 L1785 708 Z" fill="#a080b0" fill-opacity="0.08"/><path d="M1380 440 L1545 440 L1735 376 L1600 376 Z" fill="#a898d0" fill-opacity="0.08"/></svg><div class="win" style="left:596px;top:88px;width:587px;height:294px"><div class="tb in"></div><div class="abs" style="left:7px;top:4px;width:16px;height:16px;border-radius:2px;overflow:hidden;background:radial-gradient(ellipse 70% 80% at 62% 45%,#8cb562 0,#5f8a3a 40%,#34521f 75%,#1a2c10 100%);box-shadow:inset 0 0 0 1px rgba(0,0,0,.45)"><div class="abs" style="left:8px;top:1px;width:7px;height:7px;background:linear-gradient(rgba(255,255,255,.35),rgba(255,255,255,0))"></div><div class="abs" style="left:3px;top:3px;width:0;height:0;border-left:3px solid #e8e8e8;border-top:2px solid transparent;border-bottom:2px solid transparent"></div><div class="abs" style="left:6px;top:7px;width:3px;height:1px;background:#d0d0d0"></div></div><div class="ttl" style="left:22px;width:498px;letter-spacing:0px">zzd10h@AmigaOneX1000: ~</div><div class="abs" style="left:522px;top:10px;width:9px;height:2px;background:#b0b0b0"></div><div class="abs" style="left:544px;top:10px;width:10px;height:2px;background:#b0b0b0"></div><div class="abs" style="left:548px;top:6px;width:2px;height:10px;background:#b0b0b0"></div><svg class="abs" style="left:565px;top:6px" width="12" height="12" viewBox="0 0 12 12"><path d="M1.5 1.5 L10.5 10.5 M10.5 1.5 L1.5 10.5" stroke="#b0b0b0" stroke-width="1.9"/></svg><div class="menu"><span style="left:7px">Fichier</span><span style="left:66px">Édition</span><span style="left:128px">Onglets</span><span style="left:195px">Aide</span></div><div class="wl"></div><div class="bf"></div><div class="tick" style="left:25px"></div><div class="tick" style="left:559px"></div><div class="term" style="left:0px;top:49px;width:570px;height:240px"><div class="tl" style="top:2px;left:1px;">zzd10h@AmigaOneX1000:~$ echo $LD_LIBRARY_PATH</div><div class="tl" style="top:19px;left:1px;">/usr/local/mesa-10.0.4/lib</div><div class="tl" style="top:36px;left:1px;">zzd10h@AmigaOneX1000:~$ uname -a</div><div class="tl" style="top:53px;left:1px;">Linux AmigaOneX1000 3.19.0-rc7_A-EON_AMIGA_one_X1000_Nemo #1 SMP Mon Fe</div><div class="tl" style="top:70px;left:1px;">b 2 12:50:27 CET 2015 ppc64 ppc64 ppc64 GNU/Linux</div><div class="tl" style="top:87px;left:1px;">zzd10h@AmigaOneX1000:~$ </div><div class="abs" style="left:192px;top:85px;width:10px;height:19px;border:1px solid #aaaaaa"></div></div><div class="sb" style="left:570px;top:49px;width:15px;height:240px"></div><div class="th" style="left:574px;top:188px;width:7px;height:96px"></div></div><div class="win" style="left:1248px;top:37px;width:627px;height:346px"><div class="tb in"></div><svg class="abs" style="left:5px;top:3px" width="17" height="17" viewBox="0 0 20 20"><rect x="2.5" y="0.5" width="14" height="12" rx="1" fill="#e8e8e8" stroke="#8a8a8a"/><rect x="4" y="2" width="10.5" height="8" fill="#4a6aa5"/><path d="M5 3 L12 3 L6 8 Z" fill="#7d97c8" opacity=".7"/><rect x="7" y="12.5" width="5" height="1.5" fill="#9a9a9a"/><path d="M1 19.5 L3 15 L17 15 L19.5 19.5 Z" fill="#eeeeee" stroke="#8a8a8a"/></svg><div class="ttl" style="left:22px;width:538px;letter-spacing:0px">Sysinfo</div><div class="abs" style="left:562px;top:10px;width:9px;height:2px;background:#b0b0b0"></div><div class="abs" style="left:584px;top:10px;width:10px;height:2px;background:#b0b0b0"></div><div class="abs" style="left:588px;top:6px;width:2px;height:10px;background:#b0b0b0"></div><svg class="abs" style="left:605px;top:6px" width="12" height="12" viewBox="0 0 12 12"><path d="M1.5 1.5 L10.5 10.5 M10.5 1.5 L1.5 10.5" stroke="#b0b0b0" stroke-width="1.9"/></svg><div class="menu"><span style="left:8px">File</span><span style="left:46px">Edit</span><span style="left:87px">Help</span></div><div class="wl"></div><div class="bf"></div><div class="tick" style="left:25px"></div><div class="tick" style="left:599px"></div><div class="abs" style="left:0;top:48px;width:625px;height:294px;background:#f2f1f0"></div><div class="abs" style="left:0;top:48px;width:100px;height:237px;background:#fff;border-right:1px solid #bfbcb6;border-bottom:1px solid #bfbcb6;border-top:1px solid #cfccc6"></div><div class="abs" style="left:0;top:49px;width:99px;height:26px;background:linear-gradient(#e3e1dd,#d8d5d0)"></div><div class="abs" style="left:4px;top:51px"><svg class="abs" style="left:0px;top:0px" width="20" height="20" viewBox="0 0 20 20"><rect x="2.5" y="0.5" width="14" height="12" rx="1" fill="#e8e8e8" stroke="#8a8a8a"/><rect x="4" y="2" width="10.5" height="8" fill="#4a6aa5"/><path d="M5 3 L12 3 L6 8 Z" fill="#7d97c8" opacity=".7"/><rect x="7" y="12.5" width="5" height="1.5" fill="#9a9a9a"/><path d="M1 19.5 L3 15 L17 15 L19.5 19.5 Z" fill="#eeeeee" stroke="#8a8a8a"/></svg></div><svg class="abs" style="left:5px;top:77px" width="21" height="22" viewBox="0 0 21 22"><ellipse cx="10.5" cy="19.5" rx="7" ry="2" fill="rgba(0,0,0,.25)"/><path d="M10.5 1 L20 10 L10.5 19 L1 10 Z" fill="#8d9fcf" stroke="#2e3f86" stroke-width="1.2"/><path d="M10.5 3 L18 10 L10.5 17 Z" fill="#6f82bd"/><path d="M9 5 L13 8 L10 11 L13 14" stroke="#d8def0" stroke-width=".8" fill="none"/></svg><svg class="abs" style="left:6px;top:103px" width="19" height="21" viewBox="0 0 19 21"><rect x="0.8" y="2" width="17.4" height="18.2" rx="1.5" fill="#c17d11" stroke="#8f5902"/><rect x="3" y="4" width="13" height="14" fill="#f4f4f4"/><path d="M12 18 L16 14 L16 18 Z" fill="#cfcfcf"/><rect x="5.5" y="0.5" width="8" height="3.5" rx="1.2" fill="#9a9a9a"/><path d="M5 7.5h9M5 10h9M5 12.5h7M5 15h5" stroke="#9a9a9a" stroke-width="1"/></svg><svg class="abs" style="left:4px;top:131px" width="23" height="17" viewBox="0 0 23 17"><path d="M3 1 L20 1 L22.3 9 L22.3 15.5 L0.7 15.5 L0.7 9 Z" fill="#ececec" stroke="#6e6e6e"/><path d="M1 9 L22 9" stroke="#c8c8c8"/><rect x="5" y="11" width="13" height="2.5" fill="#a8a8a8"/></svg><svg class="abs" style="left:4px;top:155px" width="22" height="22" viewBox="0 0 22 22"><path d="M18.8 9.3 L21.4 9.3 L21.4 12.7 L18.8 12.7 L17.8 15.3 L19.5 17.1 L17.1 19.5 L15.3 17.8 L12.7 18.8 L12.7 21.4 L9.3 21.4 L9.3 18.8 L6.7 17.8 L4.9 19.5 L2.5 17.1 L4.2 15.3 L3.2 12.7 L0.6 12.7 L0.6 9.3 L3.2 9.3 L4.2 6.7 L2.5 4.9 L4.9 2.5 L6.7 4.2 L9.3 3.2 L9.3 0.6 L12.7 0.6 L12.7 3.2 L15.3 4.2 L17.1 2.5 L19.5 4.9 L17.8 6.7Z" fill="#e2e2e2" stroke="#9a9a9a" stroke-width="1"/><circle cx="11" cy="11" r="3.6" fill="#fafafa" stroke="#9a9a9a"/></svg><div class="abs" style="left:33px;top:53.5px;font-size:14.5px;line-height:17px;color:#2e2e2e;white-space:pre;">System</div><div class="abs" style="left:33px;top:79.5px;font-size:14.5px;line-height:17px;color:#2e2e2e;white-space:pre;">CPU</div><div class="abs" style="left:33px;top:105.5px;font-size:14.5px;line-height:17px;color:#2e2e2e;white-space:pre;">Memory</div><div class="abs" style="left:33px;top:131.5px;font-size:14.5px;line-height:17px;color:#2e2e2e;white-space:pre;">Storage</div><div class="abs" style="left:33px;top:157.5px;font-size:14.5px;line-height:17px;color:#2e2e2e;white-space:pre;">Hardware</div><svg class="abs" style="left:41px;top:290px" width="18" height="16" viewBox="0 0 18 16"><path d="M1.5 8 L9 1.5 L16.5 8" stroke="#555" stroke-width="1.8" fill="none" stroke-linejoin="round"/><path d="M13.5 2 L13.5 5" stroke="#555" stroke-width="1.6"/><path d="M3.8 7.5 L3.8 14.5 L14.2 14.5 L14.2 7.5" stroke="#555" stroke-width="1.7" fill="none"/><rect x="7.3" y="9.5" width="3.4" height="5" fill="#666"/></svg><div class="abs" style="left:101px;top:172px;width:3px;height:3px;border-radius:2px;background:#9a9893"></div><div class="abs" style="left:101px;top:177px;width:3px;height:3px;border-radius:2px;background:#9a9893"></div><div class="abs" style="left:101px;top:182px;width:3px;height:3px;border-radius:2px;background:#9a9893"></div><div class="abs" style="left:105px;top:48px;width:516px;height:34px;background:#f6f6f5"></div><div class="abs" style="left:108px;top:52px;width:510px;height:26px;border-radius:3px;border:1px solid #50638e;background:linear-gradient(#9aa9c8,#8796b6 50%,#66738f);"></div><div class="abs" style="left:119px;top:56.5px;font-size:17px;line-height:17px;color:#fff;white-space:pre;font-weight:bold;transform:scaleX(1.15);transform-origin:0 0;text-shadow:0 1px 1px rgba(0,0,0,.25)">General system information</div><div class="abs" style="left:118px;top:91.5px;font-size:14.5px;line-height:17px;color:#3c3c3c;white-space:pre;">Release</div><div class="abs" style="left:178px;top:88px;width:327px;height:21px;background:#fff;border:1px solid #a3a3a3;border-radius:2px;font-size:14.5px;line-height:19px;color:#2e2e2e;padding-left:1px;text-align:left;white-space:pre;overflow:hidden">Ubuntu 15.04 (vivid)</div><svg class="abs" style="left:0;top:0;overflow:visible" width="1" height="1"><path d="M582.95 123.22 A19.8 19.8 0 0 0 554.52 106.80" stroke="#ff6309" stroke-width="9.600000000000001" fill="none"/><path d="M552.13 108.19 A19.8 19.8 0 0 0 552.13 141.01" stroke="#ffb515" stroke-width="9.600000000000001" fill="none"/><path d="M554.52 142.40 A19.8 19.8 0 0 0 582.95 125.98" stroke="#c8001a" stroke-width="9.600000000000001" fill="none"/><circle cx="534.00" cy="124.60" r="8.4" fill="#f2f1f0"/><circle cx="534.00" cy="124.60" r="6" fill="#ff6309"/><circle cx="577.80" cy="99.31" r="8.4" fill="#f2f1f0"/><circle cx="577.80" cy="99.31" r="6" fill="#c8001a"/><circle cx="577.80" cy="149.89" r="8.4" fill="#f2f1f0"/><circle cx="577.80" cy="149.89" r="6" fill="#ffb515"/></svg><div class="abs" style="left:118px;top:172.0px;font-size:14.5px;line-height:17px;color:#3c3c3c;white-space:pre;">GNOME</div><div class="abs" style="left:179px;top:170px;width:435px;height:21px;background:#fff;border:1px solid #a3a3a3;border-radius:2px;font-size:14.5px;line-height:19px;color:#2e2e2e;padding-left:1px;text-align:left;white-space:pre;overflow:hidden">3.14.1</div><div class="abs" style="left:118px;top:195.2px;font-size:14.5px;line-height:17px;color:#3c3c3c;white-space:pre;">Kernel</div><div class="abs" style="left:179px;top:193px;width:435px;height:21px;background:#fff;border:1px solid #a3a3a3;border-radius:2px;font-size:14.5px;line-height:19px;color:#2e2e2e;padding-left:1px;text-align:left;white-space:pre;overflow:hidden">3.19.0-rc7_A-EON_AMIGA_one_X1000_Nemo</div><div class="abs" style="left:117px;top:223px;width:0;height:0;border-left:8px solid #4a4a4a;border-top:5px solid transparent;border-bottom:5px solid transparent"></div><div class="abs" style="left:131.5px;top:219.0px;font-size:15px;line-height:17px;color:#3c3c3c;white-space:pre;">More details</div><div class="abs" style="left:120px;top:286.8px;font-size:14.5px;line-height:17px;color:#3c3c3c;white-space:pre;">Uptime</div><div class="abs" style="left:178px;top:284px;width:434px;height:21px;background:#fff;border:1px solid #a3a3a3;border-radius:2px;font-size:14.5px;line-height:19px;color:#2e2e2e;padding-left:0px;text-align:center;white-space:pre;overflow:hidden">0 days 0 h 7 min</div><div class="abs" style="left:32px;top:313px;width:575px;height:1px;background:#d6d4cf"></div><div class="abs" style="left:32px;top:314px;width:575px;height:1px;background:#fbfbfa"></div><svg class="abs" style="left:8px;top:322px" width="12" height="11" viewBox="0 0 12 11"><path d="M1.2 0 L1.2 11" stroke="#555" stroke-width="1.8"/><path d="M10.5 0.5 L5 5.5 L10.5 10.5" stroke="#555" stroke-width="1.9" fill="none"/></svg><div class="abs" style="left:34.3px;top:319.0px;font-size:14.5px;line-height:17px;color:#3c3c3c;white-space:pre;">Sunday, 08/02/2015 23:49:15</div><div class="abs" style="left:623px;top:329px;width:2px;height:2px;background:#a8a6a2"></div><div class="abs" style="left:620px;top:332px;width:2px;height:2px;background:#a8a6a2"></div><div class="abs" style="left:623px;top:332px;width:2px;height:2px;background:#a8a6a2"></div><div class="abs" style="left:617px;top:335px;width:2px;height:2px;background:#a8a6a2"></div><div class="abs" style="left:620px;top:335px;width:2px;height:2px;background:#a8a6a2"></div><div class="abs" style="left:623px;top:335px;width:2px;height:2px;background:#a8a6a2"></div><div class="abs" style="left:614px;top:338px;width:2px;height:2px;background:#a8a6a2"></div><div class="abs" style="left:617px;top:338px;width:2px;height:2px;background:#a8a6a2"></div><div class="abs" style="left:620px;top:338px;width:2px;height:2px;background:#a8a6a2"></div><div class="abs" style="left:623px;top:338px;width:2px;height:2px;background:#a8a6a2"></div></div><div class="win" style="left:752px;top:432px;width:302px;height:330px"><div class="tb in"></div><div class="abs" style="left:7px;top:4px;width:16px;height:15px;background:linear-gradient(#efdcc9 0,#efdcc9 30%,#fde0e2 32%,#f8cfd2 100%);box-shadow:0 0 0 1px rgba(210,190,180,.6)"></div><div class="ttl" style="left:22px;width:213px;letter-spacing:0px">glxgears</div><div class="abs" style="left:237px;top:10px;width:9px;height:2px;background:#b0b0b0"></div><div class="abs" style="left:259px;top:10px;width:10px;height:2px;background:#b0b0b0"></div><div class="abs" style="left:263px;top:6px;width:2px;height:10px;background:#b0b0b0"></div><svg class="abs" style="left:280px;top:6px" width="12" height="12" viewBox="0 0 12 12"><path d="M1.5 1.5 L10.5 10.5 M10.5 1.5 L1.5 10.5" stroke="#b0b0b0" stroke-width="1.9"/></svg><div class="bf"></div><div class="tick" style="left:25px"></div><div class="tick" style="left:274px"></div><div class="abs" style="left:0;top:25px;width:300px;height:301px;background:#000"></div><svg class="abs" style="left:0;top:25px" width="300" height="300" viewBox="0 0 300 300"><path fill-rule="evenodd" d="M232.1 179.4 L242.9 173.9 L242.0 167.5 L230.2 166.1 L228.3 162.0 L234.3 150.4 L230.2 145.9 L219.8 152.5 L216.3 150.5 L215.0 137.2 L209.3 136.2 L204.4 148.4 L200.4 149.1 L192.4 139.2 L187.2 142.1 L189.7 155.2 L186.8 158.4 L175.1 155.6 L172.5 161.4 L181.4 170.4 L180.7 174.8 L169.9 180.3 L170.8 186.7 L182.6 188.1 L184.5 192.2 L178.5 203.8 L182.6 208.3 L193.0 201.7 L196.5 203.7 L197.8 217.0 L203.5 218.0 L208.4 205.8 L212.4 205.1 L220.4 215.0 L225.6 212.1 L223.1 199.0 L226.0 195.8 L237.7 198.6 L240.3 192.8 L231.4 183.8 Z M214.2 177.1 A7.8 8.7 0 1 0 198.6 177.1 A7.8 8.7 0 1 0 214.2 177.1 Z" fill="#005214"/><path fill-rule="evenodd" d="M230.5 177.0 L241.3 171.5 L240.4 165.1 L228.6 163.7 L226.7 159.6 L232.7 148.0 L228.6 143.5 L218.2 150.1 L214.7 148.1 L213.4 134.8 L207.7 133.8 L202.8 146.0 L198.8 146.7 L190.8 136.8 L185.6 139.7 L188.1 152.8 L185.2 156.0 L173.5 153.2 L170.9 159.0 L179.8 168.0 L179.1 172.4 L168.3 177.9 L169.2 184.3 L181.0 185.7 L182.9 189.8 L176.9 201.4 L181.0 205.9 L191.4 199.3 L194.9 201.3 L196.2 214.6 L201.9 215.6 L206.8 203.4 L210.8 202.7 L218.8 212.6 L224.0 209.7 L221.5 196.6 L224.4 193.4 L236.1 196.2 L238.7 190.4 L229.8 181.4 Z M212.6 174.7 A7.8 8.7 0 1 0 197.0 174.7 A7.8 8.7 0 1 0 212.6 174.7 Z" fill="#005214"/><path fill-rule="evenodd" d="M228.9 174.6 L239.7 169.1 L238.8 162.7 L227.0 161.3 L225.1 157.2 L231.1 145.6 L227.0 141.1 L216.6 147.7 L213.1 145.7 L211.8 132.4 L206.1 131.4 L201.2 143.6 L197.2 144.3 L189.2 134.4 L184.0 137.3 L186.5 150.4 L183.6 153.6 L171.9 150.8 L169.3 156.6 L178.2 165.6 L177.5 170.0 L166.7 175.5 L167.6 181.9 L179.4 183.3 L181.3 187.4 L175.3 199.0 L179.4 203.5 L189.8 196.9 L193.3 198.9 L194.6 212.2 L200.3 213.2 L205.2 201.0 L209.2 200.3 L217.2 210.2 L222.4 207.3 L219.9 194.2 L222.8 191.0 L234.5 193.8 L237.1 188.0 L228.2 179.0 Z M211.0 172.3 A7.8 8.7 0 1 0 195.4 172.3 A7.8 8.7 0 1 0 211.0 172.3 Z" fill="#005214"/><path fill-rule="evenodd" d="M227.3 172.2 L238.1 166.7 L237.2 160.3 L225.4 158.9 L223.5 154.8 L229.5 143.2 L225.4 138.7 L215.0 145.3 L211.5 143.3 L210.2 130.0 L204.5 129.0 L199.6 141.2 L195.6 141.9 L187.6 132.0 L182.4 134.9 L184.9 148.0 L182.0 151.2 L170.3 148.4 L167.7 154.2 L176.6 163.2 L175.9 167.6 L165.1 173.1 L166.0 179.5 L177.8 180.9 L179.7 185.0 L173.7 196.6 L177.8 201.1 L188.2 194.5 L191.7 196.5 L193.0 209.8 L198.7 210.8 L203.6 198.6 L207.6 197.9 L215.6 207.8 L220.8 204.9 L218.3 191.8 L221.2 188.6 L232.9 191.4 L235.5 185.6 L226.6 176.6 Z M209.4 169.9 A7.8 8.7 0 1 0 193.8 169.9 A7.8 8.7 0 1 0 209.4 169.9 Z" fill="#005214"/><path fill-rule="evenodd" d="M225.7 169.8 L236.5 164.3 L235.6 157.9 L223.8 156.5 L221.9 152.4 L227.9 140.8 L223.8 136.3 L213.4 142.9 L209.9 140.9 L208.6 127.6 L202.9 126.6 L198.0 138.8 L194.0 139.5 L186.0 129.6 L180.8 132.5 L183.3 145.6 L180.4 148.8 L168.7 146.0 L166.1 151.8 L175.0 160.8 L174.3 165.2 L163.5 170.7 L164.4 177.1 L176.2 178.5 L178.1 182.6 L172.1 194.2 L176.2 198.7 L186.6 192.1 L190.1 194.1 L191.4 207.4 L197.1 208.4 L202.0 196.2 L206.0 195.5 L214.0 205.4 L219.2 202.5 L216.7 189.4 L219.6 186.2 L231.3 189.0 L233.9 183.2 L225.0 174.2 Z M207.8 167.5 A7.8 8.7 0 1 0 192.2 167.5 A7.8 8.7 0 1 0 207.8 167.5 Z" fill="#005214"/><path fill-rule="evenodd" d="M233.7 181.8 L244.5 176.3 L243.6 169.9 L231.8 168.5 L229.9 164.4 L235.9 152.8 L231.8 148.3 L221.4 154.9 L217.9 152.9 L216.6 139.6 L210.9 138.6 L206.0 150.8 L202.0 151.5 L194.0 141.6 L188.8 144.5 L191.3 157.6 L188.4 160.8 L176.7 158.0 L174.1 163.8 L183.0 172.8 L182.3 177.2 L171.5 182.7 L172.4 189.1 L184.2 190.5 L186.1 194.6 L180.1 206.2 L184.2 210.7 L194.6 204.1 L198.1 206.1 L199.4 219.4 L205.1 220.4 L210.0 208.2 L214.0 207.5 L222.0 217.4 L227.2 214.5 L224.7 201.4 L227.6 198.2 L239.3 201.0 L241.9 195.2 L233.0 186.2 Z M215.8 179.5 A7.8 8.7 0 1 0 200.2 179.5 A7.8 8.7 0 1 0 215.8 179.5 Z" fill="#00c030"/><defs><linearGradient id="gh" x1="1" y1="0" x2="0" y2="1"><stop offset="0" stop-color="#001a04"/><stop offset=".5" stop-color="#004a12"/><stop offset="1" stop-color="#00b82c"/></linearGradient></defs><ellipse cx="208" cy="179.5" rx="7.6" ry="8.6" fill="url(#gh)"/><path fill-rule="evenodd" d="M162.1 196.1 L173.9 190.0 L173.3 183.9 L160.6 180.6 L159.3 175.6 L168.8 166.0 L166.4 160.3 L153.4 161.4 L150.7 157.0 L156.9 144.8 L153.0 140.2 L140.9 145.5 L137.1 142.2 L139.4 128.5 L134.4 125.4 L124.4 134.4 L119.8 132.5 L118.1 118.8 L112.4 117.5 L105.5 129.3 L100.6 129.0 L94.9 116.5 L89.1 117.2 L86.0 130.7 L81.3 132.0 L72.3 122.0 L67.0 124.5 L67.9 138.3 L63.8 141.2 L52.3 134.6 L48.0 138.7 L53.0 151.6 L49.9 155.6 L37.0 153.1 L34.1 158.5 L42.5 169.1 L40.8 173.9 L27.8 175.8 L26.6 181.8 L37.7 189.1 L37.5 194.3 L25.7 200.4 L26.3 206.5 L39.0 209.8 L40.3 214.8 L30.8 224.4 L33.2 230.1 L46.2 229.0 L48.9 233.4 L42.7 245.6 L46.6 250.2 L58.7 244.9 L62.5 248.2 L60.2 261.9 L65.2 265.0 L75.2 256.0 L79.8 257.9 L81.5 271.6 L87.2 272.9 L94.1 261.1 L99.0 261.4 L104.7 273.9 L110.5 273.2 L113.6 259.7 L118.3 258.4 L127.3 268.4 L132.6 265.9 L131.7 252.1 L135.8 249.2 L147.3 255.8 L151.6 251.7 L146.6 238.8 L149.7 234.8 L162.6 237.3 L165.5 231.9 L157.1 221.3 L158.8 216.5 L171.8 214.6 L173.0 208.6 L161.9 201.3 Z M116.9 195.2 A17.1 18.1 0 1 0 82.7 195.2 A17.1 18.1 0 1 0 116.9 195.2 Z" fill="#7a0e00"/><path fill-rule="evenodd" d="M160.9 195.3 L172.7 189.2 L172.1 183.1 L159.4 179.8 L158.1 174.8 L167.6 165.2 L165.2 159.5 L152.2 160.6 L149.5 156.2 L155.7 144.0 L151.8 139.4 L139.7 144.7 L135.9 141.4 L138.2 127.7 L133.2 124.6 L123.2 133.6 L118.6 131.7 L116.9 118.0 L111.2 116.7 L104.3 128.5 L99.4 128.2 L93.7 115.7 L87.9 116.4 L84.8 129.9 L80.1 131.2 L71.1 121.2 L65.8 123.7 L66.7 137.5 L62.6 140.4 L51.1 133.8 L46.8 137.9 L51.8 150.8 L48.7 154.8 L35.8 152.3 L32.9 157.7 L41.3 168.3 L39.6 173.1 L26.6 175.0 L25.4 181.0 L36.5 188.3 L36.3 193.5 L24.5 199.6 L25.1 205.7 L37.8 209.0 L39.1 214.0 L29.6 223.6 L32.0 229.3 L45.0 228.2 L47.7 232.6 L41.5 244.8 L45.4 249.4 L57.5 244.1 L61.3 247.4 L59.0 261.1 L64.0 264.2 L74.0 255.2 L78.6 257.1 L80.3 270.8 L86.0 272.1 L92.9 260.3 L97.8 260.6 L103.5 273.1 L109.3 272.4 L112.4 258.9 L117.1 257.6 L126.1 267.6 L131.4 265.1 L130.5 251.3 L134.6 248.4 L146.1 255.0 L150.4 250.9 L145.4 238.0 L148.5 234.0 L161.4 236.5 L164.3 231.1 L155.9 220.5 L157.6 215.7 L170.6 213.8 L171.8 207.8 L160.7 200.5 Z M115.7 194.4 A17.1 18.1 0 1 0 81.5 194.4 A17.1 18.1 0 1 0 115.7 194.4 Z" fill="#7a0e00"/><path fill-rule="evenodd" d="M159.7 194.5 L171.5 188.4 L170.9 182.3 L158.2 179.0 L156.9 174.0 L166.4 164.4 L164.0 158.7 L151.0 159.8 L148.3 155.4 L154.5 143.2 L150.6 138.6 L138.5 143.9 L134.7 140.6 L137.0 126.9 L132.0 123.8 L122.0 132.8 L117.4 130.9 L115.7 117.2 L110.0 115.9 L103.1 127.7 L98.2 127.4 L92.5 114.9 L86.7 115.6 L83.6 129.1 L78.9 130.4 L69.9 120.4 L64.6 122.9 L65.5 136.7 L61.4 139.6 L49.9 133.0 L45.6 137.1 L50.6 150.0 L47.5 154.0 L34.6 151.5 L31.7 156.9 L40.1 167.5 L38.4 172.3 L25.4 174.2 L24.2 180.2 L35.3 187.5 L35.1 192.7 L23.3 198.8 L23.9 204.9 L36.6 208.2 L37.9 213.2 L28.4 222.8 L30.8 228.5 L43.8 227.4 L46.5 231.8 L40.3 244.0 L44.2 248.6 L56.3 243.3 L60.1 246.6 L57.8 260.3 L62.8 263.4 L72.8 254.4 L77.4 256.3 L79.1 270.0 L84.8 271.3 L91.7 259.5 L96.6 259.8 L102.3 272.3 L108.1 271.6 L111.2 258.1 L115.9 256.8 L124.9 266.8 L130.2 264.3 L129.3 250.5 L133.4 247.6 L144.9 254.2 L149.2 250.1 L144.2 237.2 L147.3 233.2 L160.2 235.7 L163.1 230.3 L154.7 219.7 L156.4 214.9 L169.4 213.0 L170.6 207.0 L159.5 199.7 Z M114.5 193.6 A17.1 18.1 0 1 0 80.3 193.6 A17.1 18.1 0 1 0 114.5 193.6 Z" fill="#7a0e00"/><path fill-rule="evenodd" d="M158.5 193.7 L170.3 187.6 L169.7 181.5 L157.0 178.2 L155.7 173.2 L165.2 163.6 L162.8 157.9 L149.8 159.0 L147.1 154.6 L153.3 142.4 L149.4 137.8 L137.3 143.1 L133.5 139.8 L135.8 126.1 L130.8 123.0 L120.8 132.0 L116.2 130.1 L114.5 116.4 L108.8 115.1 L101.9 126.9 L97.0 126.6 L91.3 114.1 L85.5 114.8 L82.4 128.3 L77.7 129.6 L68.7 119.6 L63.4 122.1 L64.3 135.9 L60.2 138.8 L48.7 132.2 L44.4 136.3 L49.4 149.2 L46.3 153.2 L33.4 150.7 L30.5 156.1 L38.9 166.7 L37.2 171.5 L24.2 173.4 L23.0 179.4 L34.1 186.7 L33.9 191.9 L22.1 198.0 L22.7 204.1 L35.4 207.4 L36.7 212.4 L27.2 222.0 L29.6 227.7 L42.6 226.6 L45.3 231.0 L39.1 243.2 L43.0 247.8 L55.1 242.5 L58.9 245.8 L56.6 259.5 L61.6 262.6 L71.6 253.6 L76.2 255.5 L77.9 269.2 L83.6 270.5 L90.5 258.7 L95.4 259.0 L101.1 271.5 L106.9 270.8 L110.0 257.3 L114.7 256.0 L123.7 266.0 L129.0 263.5 L128.1 249.7 L132.2 246.8 L143.7 253.4 L148.0 249.3 L143.0 236.4 L146.1 232.4 L159.0 234.9 L161.9 229.5 L153.5 218.9 L155.2 214.1 L168.2 212.2 L169.4 206.2 L158.3 198.9 Z M113.3 192.8 A17.1 18.1 0 1 0 79.1 192.8 A17.1 18.1 0 1 0 113.3 192.8 Z" fill="#7a0e00"/><path fill-rule="evenodd" d="M157.3 192.9 L169.1 186.8 L168.5 180.7 L155.8 177.4 L154.5 172.4 L164.0 162.8 L161.6 157.1 L148.6 158.2 L145.9 153.8 L152.1 141.6 L148.2 137.0 L136.1 142.3 L132.3 139.0 L134.6 125.3 L129.6 122.2 L119.6 131.2 L115.0 129.3 L113.3 115.6 L107.6 114.3 L100.7 126.1 L95.8 125.8 L90.1 113.3 L84.3 114.0 L81.2 127.5 L76.5 128.8 L67.5 118.8 L62.2 121.3 L63.1 135.1 L59.0 138.0 L47.5 131.4 L43.2 135.5 L48.2 148.4 L45.1 152.4 L32.2 149.9 L29.3 155.3 L37.7 165.9 L36.0 170.7 L23.0 172.6 L21.8 178.6 L32.9 185.9 L32.7 191.1 L20.9 197.2 L21.5 203.3 L34.2 206.6 L35.5 211.6 L26.0 221.2 L28.4 226.9 L41.4 225.8 L44.1 230.2 L37.9 242.4 L41.8 247.0 L53.9 241.7 L57.7 245.0 L55.4 258.7 L60.4 261.8 L70.4 252.8 L75.0 254.7 L76.7 268.4 L82.4 269.7 L89.3 257.9 L94.2 258.2 L99.9 270.7 L105.7 270.0 L108.8 256.5 L113.5 255.2 L122.5 265.2 L127.8 262.7 L126.9 248.9 L131.0 246.0 L142.5 252.6 L146.8 248.5 L141.8 235.6 L144.9 231.6 L157.8 234.1 L160.7 228.7 L152.3 218.1 L154.0 213.3 L167.0 211.4 L168.2 205.4 L157.1 198.1 Z M112.1 192.0 A17.1 18.1 0 1 0 77.9 192.0 A17.1 18.1 0 1 0 112.1 192.0 Z" fill="#7a0e00"/><path fill-rule="evenodd" d="M163.3 196.9 L175.1 190.8 L174.5 184.7 L161.8 181.4 L160.5 176.4 L170.0 166.8 L167.6 161.1 L154.6 162.2 L151.9 157.8 L158.1 145.6 L154.2 141.0 L142.1 146.3 L138.3 143.0 L140.6 129.3 L135.6 126.2 L125.6 135.2 L121.0 133.3 L119.3 119.6 L113.6 118.3 L106.7 130.1 L101.8 129.8 L96.1 117.3 L90.3 118.0 L87.2 131.5 L82.5 132.8 L73.5 122.8 L68.2 125.3 L69.1 139.1 L65.0 142.0 L53.5 135.4 L49.2 139.5 L54.2 152.4 L51.1 156.4 L38.2 153.9 L35.3 159.3 L43.7 169.9 L42.0 174.7 L29.0 176.6 L27.8 182.6 L38.9 189.9 L38.7 195.1 L26.9 201.2 L27.5 207.3 L40.2 210.6 L41.5 215.6 L32.0 225.2 L34.4 230.9 L47.4 229.8 L50.1 234.2 L43.9 246.4 L47.8 251.0 L59.9 245.7 L63.7 249.0 L61.4 262.7 L66.4 265.8 L76.4 256.8 L81.0 258.7 L82.7 272.4 L88.4 273.7 L95.3 261.9 L100.2 262.2 L105.9 274.7 L111.7 274.0 L114.8 260.5 L119.5 259.2 L128.5 269.2 L133.8 266.7 L132.9 252.9 L137.0 250.0 L148.5 256.6 L152.8 252.5 L147.8 239.6 L150.9 235.6 L163.8 238.1 L166.7 232.7 L158.3 222.1 L160.0 217.3 L173.0 215.4 L174.2 209.4 L163.1 202.1 Z M118.1 196.0 A17.1 18.1 0 1 0 83.9 196.0 A17.1 18.1 0 1 0 118.1 196.0 Z" fill="#c01800"/><defs><linearGradient id="hw" x1="0" y1="0" x2="1" y2="1"><stop offset="0" stop-color="#000"/><stop offset=".55" stop-color="#300400"/><stop offset="1" stop-color="#8a1200"/></linearGradient></defs><ellipse cx="101.5" cy="196.5" rx="19.5" ry="20.5" fill="#c01800"/><ellipse cx="104" cy="198.5" rx="16.5" ry="17.5" fill="url(#hw)" transform="rotate(35 104 198.5)"/><ellipse cx="100.5" cy="196" rx="12.5" ry="15" fill="#000" transform="rotate(35 100.5 196)"/><path fill-rule="evenodd" d="M123.8 92.7 L138.0 91.4 L139.2 84.3 L126.3 77.9 L125.7 72.9 L136.4 63.1 L133.4 56.6 L119.4 59.4 L116.0 55.8 L119.2 41.2 L113.1 37.8 L103.4 48.7 L98.6 47.8 L93.0 34.1 L86.2 35.1 L84.5 49.9 L80.1 52.1 L67.9 44.5 L63.0 49.5 L69.8 62.6 L67.6 67.1 L53.4 68.4 L52.2 75.5 L65.1 81.9 L65.7 86.9 L55.0 96.7 L58.0 103.2 L72.0 100.4 L75.4 104.0 L72.2 118.6 L78.3 122.0 L88.0 111.1 L92.8 112.0 L98.4 125.7 L105.2 124.7 L106.9 109.9 L111.3 107.7 L123.5 115.3 L128.4 110.3 L121.6 97.2 Z M119.9 79.9 A24.2 25.4 0 1 0 71.5 79.9 A24.2 25.4 0 1 0 119.9 79.9 Z" fill="#1f1f99"/><path fill-rule="evenodd" d="M123.0 92.1 L137.2 90.8 L138.4 83.7 L125.5 77.3 L124.9 72.3 L135.6 62.5 L132.6 56.0 L118.6 58.8 L115.2 55.2 L118.4 40.6 L112.3 37.2 L102.6 48.1 L97.8 47.2 L92.2 33.5 L85.4 34.5 L83.7 49.3 L79.3 51.5 L67.1 43.9 L62.2 48.9 L69.0 62.0 L66.8 66.5 L52.6 67.8 L51.4 74.9 L64.3 81.3 L64.9 86.3 L54.2 96.1 L57.2 102.6 L71.2 99.8 L74.6 103.4 L71.4 118.0 L77.5 121.4 L87.2 110.5 L92.0 111.4 L97.6 125.1 L104.4 124.1 L106.1 109.3 L110.5 107.1 L122.7 114.7 L127.6 109.7 L120.8 96.6 Z M119.1 79.3 A24.2 25.4 0 1 0 70.7 79.3 A24.2 25.4 0 1 0 119.1 79.3 Z" fill="#1f1f99"/><path fill-rule="evenodd" d="M122.2 91.5 L136.4 90.2 L137.6 83.1 L124.7 76.7 L124.1 71.7 L134.8 61.9 L131.8 55.4 L117.8 58.2 L114.4 54.6 L117.6 40.0 L111.5 36.6 L101.8 47.5 L97.0 46.6 L91.4 32.9 L84.6 33.9 L82.9 48.7 L78.5 50.9 L66.3 43.3 L61.4 48.3 L68.2 61.4 L66.0 65.9 L51.8 67.2 L50.6 74.3 L63.5 80.7 L64.1 85.7 L53.4 95.5 L56.4 102.0 L70.4 99.2 L73.8 102.8 L70.6 117.4 L76.7 120.8 L86.4 109.9 L91.2 110.8 L96.8 124.5 L103.6 123.5 L105.3 108.7 L109.7 106.5 L121.9 114.1 L126.8 109.1 L120.0 96.0 Z M118.3 78.7 A24.2 25.4 0 1 0 69.9 78.7 A24.2 25.4 0 1 0 118.3 78.7 Z" fill="#1f1f99"/><path fill-rule="evenodd" d="M121.4 90.9 L135.6 89.6 L136.8 82.5 L123.9 76.1 L123.3 71.1 L134.0 61.3 L131.0 54.8 L117.0 57.6 L113.6 54.0 L116.8 39.4 L110.7 36.0 L101.0 46.9 L96.2 46.0 L90.6 32.3 L83.8 33.3 L82.1 48.1 L77.7 50.3 L65.5 42.7 L60.6 47.7 L67.4 60.8 L65.2 65.3 L51.0 66.6 L49.8 73.7 L62.7 80.1 L63.3 85.1 L52.6 94.9 L55.6 101.4 L69.6 98.6 L73.0 102.2 L69.8 116.8 L75.9 120.2 L85.6 109.3 L90.4 110.2 L96.0 123.9 L102.8 122.9 L104.5 108.1 L108.9 105.9 L121.1 113.5 L126.0 108.5 L119.2 95.4 Z M117.5 78.1 A24.2 25.4 0 1 0 69.1 78.1 A24.2 25.4 0 1 0 117.5 78.1 Z" fill="#1f1f99"/><path fill-rule="evenodd" d="M120.6 90.3 L134.8 89.0 L136.0 81.9 L123.1 75.5 L122.5 70.5 L133.2 60.7 L130.2 54.2 L116.2 57.0 L112.8 53.4 L116.0 38.8 L109.9 35.4 L100.2 46.3 L95.4 45.4 L89.8 31.7 L83.0 32.7 L81.3 47.5 L76.9 49.7 L64.7 42.1 L59.8 47.1 L66.6 60.2 L64.4 64.7 L50.2 66.0 L49.0 73.1 L61.9 79.5 L62.5 84.5 L51.8 94.3 L54.8 100.8 L68.8 98.0 L72.2 101.6 L69.0 116.2 L75.1 119.6 L84.8 108.7 L89.6 109.6 L95.2 123.3 L102.0 122.3 L103.7 107.5 L108.1 105.3 L120.3 112.9 L125.2 107.9 L118.4 94.8 Z M116.7 77.5 A24.2 25.4 0 1 0 68.3 77.5 A24.2 25.4 0 1 0 116.7 77.5 Z" fill="#1f1f99"/><path fill-rule="evenodd" d="M124.6 93.3 L138.8 92.0 L140.0 84.9 L127.1 78.5 L126.5 73.5 L137.2 63.7 L134.2 57.2 L120.2 60.0 L116.8 56.4 L120.0 41.8 L113.9 38.4 L104.2 49.3 L99.4 48.4 L93.8 34.7 L87.0 35.7 L85.3 50.5 L80.9 52.7 L68.7 45.1 L63.8 50.1 L70.6 63.2 L68.4 67.7 L54.2 69.0 L53.0 76.1 L65.9 82.5 L66.5 87.5 L55.8 97.3 L58.8 103.8 L72.8 101.0 L76.2 104.6 L73.0 119.2 L79.1 122.6 L88.8 111.7 L93.6 112.6 L99.2 126.3 L106.0 125.3 L107.7 110.5 L112.1 108.3 L124.3 115.9 L129.2 110.9 L122.4 97.8 Z M120.7 80.5 A24.2 25.4 0 1 0 72.3 80.5 A24.2 25.4 0 1 0 120.7 80.5 Z" fill="#3333ee"/></svg></div><div class="win" style="left:1131px;top:433px;width:659px;height:464px"><div class="tb in"></div><div class="abs" style="left:7px;top:4px;width:16px;height:16px;border-radius:2px;overflow:hidden;background:radial-gradient(ellipse 70% 80% at 62% 45%,#8cb562 0,#5f8a3a 40%,#34521f 75%,#1a2c10 100%);box-shadow:inset 0 0 0 1px rgba(0,0,0,.45)"><div class="abs" style="left:8px;top:1px;width:7px;height:7px;background:linear-gradient(rgba(255,255,255,.35),rgba(255,255,255,0))"></div><div class="abs" style="left:3px;top:3px;width:0;height:0;border-left:3px solid #e8e8e8;border-top:2px solid transparent;border-bottom:2px solid transparent"></div><div class="abs" style="left:6px;top:7px;width:3px;height:1px;background:#d0d0d0"></div></div><div class="ttl" style="left:22px;width:570px;letter-spacing:0px">zzd10h@AmigaOneX1000: /usr/lib/powerpc-linux-gnu/mesa</div><div class="abs" style="left:594px;top:10px;width:9px;height:2px;background:#b0b0b0"></div><div class="abs" style="left:616px;top:10px;width:10px;height:2px;background:#b0b0b0"></div><div class="abs" style="left:620px;top:6px;width:2px;height:10px;background:#b0b0b0"></div><svg class="abs" style="left:637px;top:6px" width="12" height="12" viewBox="0 0 12 12"><path d="M1.5 1.5 L10.5 10.5 M10.5 1.5 L1.5 10.5" stroke="#b0b0b0" stroke-width="1.9"/></svg><div class="menu"><span style="left:7px">Fichier</span><span style="left:66px">Édition</span><span style="left:128px">Onglets</span><span style="left:195px">Aide</span></div><div class="wl"></div><div class="bf"></div><div class="tick" style="left:25px"></div><div class="tick" style="left:631px"></div><div class="term" style="left:0px;top:49px;width:642px;height:410px"><div class="tl" style="top:2px;left:1px;">e_packing GL_ARB_texture_storage GL_ARB_transform_feedback_instanced GL_EXT_fram</div><div class="tl" style="top:19px;left:1px;">ebuffer_multisample_blit_scaled GL_EXT_transform_feedback GL_ARB_invalidate_subd</div><div class="tl" style="top:36px;left:1px;">ata GL_ARB_texture_storage_multisample GL_ARB_vertex_attrib_binding GL_KHR_debug</div><div class="tl" style="top:53px;left:1px;"> GL_ARB_texture_mirror_clamp_to_edge GL_ARB_vertex_type_10f_11f_11f_rev</div><div class="tl" style="top:70px;left:1px;">VisualID 214, 0xd6</div><div class="tl" style="top:87px;left:1px;">5154 frames in 5.0 seconds = 1030.194 FPS</div><div class="tl" style="top:104px;left:1px;">4912 frames in 5.0 seconds = 982.315 FPS</div><div class="tl" style="top:121px;left:1px;">4977 frames in 5.0 seconds = 995.392 FPS</div><div class="tl" style="top:138px;left:1px;">4745 frames in 5.0 seconds = 948.938 FPS</div><div class="tl" style="top:155px;left:1px;">4667 frames in 5.0 seconds = 932.556 FPS</div><div class="tl" style="top:172px;left:1px;">4632 frames in 5.0 seconds = 925.975 FPS</div><div class="tl" style="top:189px;left:1px;">4903 frames in 5.0 seconds = 980.495 FPS</div><div class="tl" style="top:206px;left:1px;">3882 frames in 5.0 seconds = 776.316 FPS</div><div class="tl" style="top:223px;left:1px;">4076 frames in 5.0 seconds = 815.137 FPS</div><div class="tl" style="top:240px;left:1px;">4349 frames in 5.0 seconds = 869.728 FPS</div><div class="tl" style="top:257px;left:1px;">5158 frames in 5.0 seconds = 1031.470 FPS</div><div class="tl" style="top:274px;left:1px;">4913 frames in 5.0 seconds = 982.460 FPS</div><div class="tl" style="top:291px;left:1px;">5076 frames in 5.0 seconds = 1015.178 FPS</div><div class="tl" style="top:308px;left:1px;">4985 frames in 5.0 seconds = 996.938 FPS</div><div class="tl" style="top:325px;left:1px;">5151 frames in 5.0 seconds = 1030.163 FPS</div><div class="tl" style="top:342px;left:1px;">5660 frames in 5.0 seconds = 1131.969 FPS</div><div class="tl" style="top:359px;left:1px;">5325 frames in 5.0 seconds = 1064.548 FPS</div><div class="tl" style="top:376px;left:1px;">5925 frames in 5.0 seconds = 1184.876 FPS</div><div class="abs" style="left:0px;top:391px;width:10px;height:19px;border:1px solid #aaaaaa"></div></div><div class="sb" style="left:642px;top:49px;width:15px;height:410px"></div><div class="th" style="left:646px;top:372px;width:7px;height:82px"></div></div><div class="win" style="left:27px;top:577px;width:659px;height:260px"><div class="tb in"></div><div class="abs" style="left:7px;top:4px;width:16px;height:16px;border-radius:2px;overflow:hidden;background:radial-gradient(ellipse 70% 80% at 62% 45%,#8cb562 0,#5f8a3a 40%,#34521f 75%,#1a2c10 100%);box-shadow:inset 0 0 0 1px rgba(0,0,0,.45)"><div class="abs" style="left:8px;top:1px;width:7px;height:7px;background:linear-gradient(rgba(255,255,255,.35),rgba(255,255,255,0))"></div><div class="abs" style="left:3px;top:3px;width:0;height:0;border-left:3px solid #e8e8e8;border-top:2px solid transparent;border-bottom:2px solid transparent"></div><div class="abs" style="left:6px;top:7px;width:3px;height:1px;background:#d0d0d0"></div></div><div class="ttl" style="left:22px;width:570px;letter-spacing:0.17px">zzd10h@AmigaOneX1000: /usr/local/mesa-10.0.4/lib/dri</div><div class="abs" style="left:594px;top:10px;width:9px;height:2px;background:#b0b0b0"></div><div class="abs" style="left:616px;top:10px;width:10px;height:2px;background:#b0b0b0"></div><div class="abs" style="left:620px;top:6px;width:2px;height:10px;background:#b0b0b0"></div><svg class="abs" style="left:637px;top:6px" width="12" height="12" viewBox="0 0 12 12"><path d="M1.5 1.5 L10.5 10.5 M10.5 1.5 L1.5 10.5" stroke="#b0b0b0" stroke-width="1.9"/></svg><div class="menu"><span style="left:7px">Fichier</span><span style="left:66px">Édition</span><span style="left:128px">Onglets</span><span style="left:195px">Aide</span></div><div class="wl"></div><div class="bf"></div><div class="tick" style="left:25px"></div><div class="tick" style="left:631px"></div><div class="term" style="left:0px;top:49px;width:642px;height:206px"><div class="tl" style="top:2px;left:1px;">zzd10h@AmigaOneX1000:~$ cd /usr/local/mesa-10.0.4/lib/dri</div><div class="tl" style="top:19px;left:1px;">zzd10h@AmigaOneX1000:/usr/local/mesa-10.0.4/lib/dri$ ls</div><div class="tl" style="top:36px;left:1px;"><span style="color:#54ff54;font-weight:bold">r200_dri.so  r300_dri.so  r600_dri.so    swrast_dri.la  vmwgfx_dri.la</span></div><div class="tl" style="top:53px;left:1px;"><span style="color:#54ff54;font-weight:bold">r300_dri.la  r600_dri.la  radeon_dri.so  swrast_dri.so  vmwgfx_dri.so</span></div><div class="tl" style="top:70px;left:1px;">zzd10h@AmigaOneX1000:/usr/local/mesa-10.0.4/lib/dri$ </div><div class="abs" style="left:424px;top:68px;width:10px;height:19px;border:1px solid #aaaaaa"></div></div><div class="sb" style="left:642px;top:49px;width:15px;height:206px"></div><div class="th" style="left:646px;top:54px;width:7px;height:196px"></div></div><div class="win act" style="left:21px;top:0px;width:563px;height:549px"><div class="tb"></div><div class="abs" style="left:7px;top:4px;width:16px;height:16px;border-radius:2px;overflow:hidden;background:radial-gradient(ellipse 70% 80% at 62% 45%,#8cb562 0,#5f8a3a 40%,#34521f 75%,#1a2c10 100%);box-shadow:inset 0 0 0 1px rgba(0,0,0,.45)"><div class="abs" style="left:8px;top:1px;width:7px;height:7px;background:linear-gradient(rgba(255,255,255,.35),rgba(255,255,255,0))"></div><div class="abs" style="left:3px;top:3px;width:0;height:0;border-left:3px solid #e8e8e8;border-top:2px solid transparent;border-bottom:2px solid transparent"></div><div class="abs" style="left:6px;top:7px;width:3px;height:1px;background:#d0d0d0"></div></div><div class="ttl" style="left:22px;width:474px;letter-spacing:0px">zzd10h@AmigaOneX1000: ~...3-altivec-linux-glibc2.13-ppc</div><div class="abs" style="left:498px;top:10px;width:9px;height:2px;background:#6a6a6a"></div><div class="abs" style="left:520px;top:10px;width:10px;height:2px;background:#6a6a6a"></div><div class="abs" style="left:524px;top:6px;width:2px;height:10px;background:#6a6a6a"></div><svg class="abs" style="left:541px;top:6px" width="12" height="12" viewBox="0 0 12 12"><path d="M1.5 1.5 L10.5 10.5 M10.5 1.5 L1.5 10.5" stroke="#6a6a6a" stroke-width="1.9"/></svg><div class="menu"><span style="left:7px">Fichier</span><span style="left:66px">Édition</span><span style="left:128px">Onglets</span><span style="left:195px">Aide</span></div><div class="wl"></div><div class="bf"></div><div class="tick" style="left:25px"></div><div class="tick" style="left:535px"></div><div class="term" style="left:0px;top:49px;width:546px;height:495px"><div class="tl" style="top:2px;left:1px;"><span style="color:#5c5cff;font-weight:bold">Images</span>     <span style="color:#5c5cff;font-weight:bold">Musique</span>      <span style="color:#ff5454;font-weight:bold">supertuxkart-0.8.1-3-altivec-linux-glibc2.13</span></div><div class="tl" style="top:19px;left:1px;">zzd10h@AmigaOneX1000:~$ cd supertuxkart-0.8.1-3-altivec-linux-glibc2</div><div class="tl" style="top:36px;left:1px;">zzd10h@AmigaOneX1000:~/supertuxkart-0.8.1-3-altivec-linux-glibc2.13-</div><div class="tl" style="top:53px;left:1px;">Irrlicht Engine version 1.8.0</div><div class="tl" style="top:70px;left:1px;">Linux 3.19.0-rc7_A-EON_AMIGA_one_X1000_Nemo #1 SMP Mon Feb 2 12:50:2</div><div class="tl" style="top:87px;left:1px;">[info   ] FileManager: Data files will be fetched from: &#x27;&#x27;</div><div class="tl" style="top:104px;left:1px;">[info   ] FileManager: User directory is &#x27;/home/zzd10h/.config/super</div><div class="tl" style="top:121px;left:1px;">[info   ] FileManager: Addons files will be stored in &#x27;/home/zzd10h/</div><div class="tl" style="top:138px;left:1px;">ons/&#x27;.</div><div class="tl" style="top:155px;left:1px;">[info   ] FileManager: Screenshots will be stored in &#x27;/home/zzd10h/.</div><div class="tl" style="top:172px;left:1px;">s/&#x27;.</div><div class="tl" style="top:189px;left:1px;">[debug  ] translation: Env var LANGUAGE = &#x27;fr_FR&#x27;.</div><div class="tl" style="top:206px;left:1px;">[debug  ] translation: Language &#x27;French (France)&#x27;.</div><div class="tl" style="top:223px;left:1px;">Adding language fallback fr</div><div class="tl" style="top:240px;left:1px;background:#b2b2b2;right:0;"><span style="color:#000">libGL error: unable to load driver: r600_dri.so</span></div><div class="tl" style="top:257px;left:1px;background:#b2b2b2;right:0;"><span style="color:#000">libGL error: driver pointer missing</span></div><div class="tl" style="top:274px;left:1px;background:#b2b2b2;right:0;"><span style="color:#000">libGL error: failed to load driver: r600</span></div><div class="tl" style="top:291px;left:1px;background:#b2b2b2;right:0;"><span style="color:#000">[info   ] irr_driver: GLSL supported.</span></div><div class="tl" style="top:308px;left:1px;"><span style="color:#ff5454;font-weight:bold">[error  ] MusicInformation: Music file &#x27;data/music/subsea.ogg&#x27; does</span></div><div class="tl" style="top:342px;left:1px;"><span style="color:#b40000">[warn   ] track: Music information file &#x27;subsea.ogg&#x27; not found - ign</span></div><div class="tl" style="top:376px;left:1px;"><span style="color:#b40000">[warn   ] track: Music information file &#x27;mysteriousbarricades.music&#x27;</span></div><div class="tl" style="top:410px;left:1px;"><span style="color:#b40000">[warn   ] track: Music information file &#x27;ChillCarrier-Druckverlust.m</span></div><div class="tl" style="top:444px;left:1px;">[debug  ] main: Error messages and other text output will be logged</div><div class="tl" style="top:461px;left:1px;">tuxkart//stdout.log.</div><div class="tl" style="top:478px;left:1px;">^Czzd10h@AmigaOneX1000:~/supertuxkart-0.8.1-3-altivec-linux-glibc2.1</div></div><div class="sb" style="left:546px;top:49px;width:15px;height:495px"></div><div class="th" style="left:550px;top:414px;width:7px;height:125px"></div></div><div class="abs" style="left:0;top:1055px;width:1920px;height:1px;background:rgba(20,15,60,.45)"></div><div class="abs" style="left:0;top:1056px;width:1920px;height:24px;background:linear-gradient(#ffffff 0,#ffffff 4%,#e8e8e8 8%,#c4c4c4 94%,#8c8c8c 100%)"></div><div class="abs" style="left:0;top:1056px;width:48px;height:24px;background:linear-gradient(#9ccbf2,#4e90cf 45%,#1f5d9b)"></div><svg class="abs" style="left:12px;top:1056px" width="24" height="24" viewBox="0 0 24 24"><defs><linearGradient id="lg1" x1="0" y1="0" x2="0" y2="1"><stop offset="0" stop-color="#ffffff"/><stop offset=".5" stop-color="#dce8f3"/><stop offset="1" stop-color="#6f96bf"/></linearGradient></defs><circle cx="11.6" cy="11.6" r="10.3" fill="url(#lg1)"/><path d="M2.2 7.5 A10.3 10.3 0 0 1 21.4 7.5" stroke="#1d3550" stroke-width="1" fill="none" opacity=".8"/><path d="M1.5 12 C 6 9, 11 6.5, 16.5 4.5 L 19 11 L 15 9 C 11 9.5, 6 11, 1.5 12 Z" fill="#5f93c4"/><path d="M6 18 L 10 11 C 11.5 9, 13.5 9, 15 11 L 20 20" stroke="#1d3550" stroke-width="1.2" fill="none"/><path d="M1.5 12 C 4 11, 8 11, 9 12 M3 16 L 8 11.5 M5 18 L 9.5 12" stroke="#1d3550" stroke-width="1" fill="none" opacity=".85"/></svg><svg class="abs" style="left:57px;top:1057px" width="22" height="22" viewBox="0 0 22 22"><path d="M1 3 Q1 1.5 2.5 1.5 L8 1.5 Q9 1.5 9.5 3 L19 3 Q20 3 20 4 L20 21 L1 21 Z" fill="#f4f4f4" stroke="#9a9a9a" stroke-width=".8"/><defs><linearGradient id="fg1" x1="0" y1="0" x2="0" y2="1"><stop offset="0" stop-color="#8ab8e6"/><stop offset="1" stop-color="#4a86c6"/></linearGradient></defs><rect x="3.2" y="5" width="18.3" height="16.5" rx="1.5" fill="url(#fg1)" stroke="#35669c" stroke-width=".9"/><path d="M14.5 9 L14.5 19.5 L16.6 17.5 L18 20.8 L19.3 20.2 L17.9 17 L20.6 16.8 Z" fill="#fafafa" stroke="#3a3a3a" stroke-width=".7"/></svg><svg class="abs" style="left:84px;top:1057px" width="22" height="22" viewBox="0 0 22 22"><defs><radialGradient id="gg1" cx=".5" cy=".75" r=".8"><stop offset="0" stop-color="#7cc6ee"/><stop offset=".5" stop-color="#2a7ab8"/><stop offset="1" stop-color="#0e3a6a"/></radialGradient></defs><rect x=".7" y=".7" width="20.6" height="20.6" rx="2.5" fill="url(#gg1)" stroke="#163a66" stroke-width="1.2"/><rect x="9" y="1.5" width="11.5" height="5" fill="#c8d4de" opacity=".45"/><path d="M2 8 C4 6.5 6.5 6.5 7.5 8.5 L6 11 L4.5 10 Z M4 12.5 L7 13 L6.5 17 L5 15 Z M9.5 8 C12 6.5 17 7 20.5 7.5 L20 11 L16.5 12 L15 16 L13.2 15.5 L12.8 11.5 L10 11 Z M18 15.5 L20 15 L19.5 17 Z" fill="#f2f6fa" opacity=".92"/><path d="M1 17.5 H21 M6.5 17.5 V21 M11 17.5 V21 M15.5 17.5 V21" stroke="#bfe6ff" stroke-width=".7" opacity=".8"/></svg><svg class="abs" style="left:112px;top:1057px" width="22" height="22" viewBox="0 0 22 22"><defs><linearGradient id="wg1" x1="0" y1="0" x2="0" y2="1"><stop offset="0" stop-color="#f8f8f8"/><stop offset="1" stop-color="#d2d2d2"/></linearGradient><linearGradient id="wg2" x1="0" y1="0" x2="0" y2="1"><stop offset="0" stop-color="#a6ccef"/><stop offset="1" stop-color="#4f8ac4"/></linearGradient></defs><rect x=".8" y=".8" width="20.4" height="20.4" rx="2.5" fill="url(#wg1)" stroke="#5a5a5a" stroke-width="1.1"/><rect x="1.5" y="1.5" width="19" height="4.2" fill="url(#wg2)"/><rect x="11" y="2.3" width="2.2" height="2.3" fill="#eef4fa"/><rect x="14" y="2.3" width="2.2" height="2.3" fill="#eef4fa"/><rect x="17" y="2.3" width="2.2" height="2.3" fill="#eef4fa"/><path d="M2 18.5 H20" stroke="#8a8a8a" stroke-width=".9"/></svg><div class="abs" style="left:141px;top:1058px;width:35px;height:20px;background:#5b86b5"></div><div class="abs" style="left:142px;top:1059px;width:9px;height:10px;background:#cfe0f0"></div><div class="abs" style="left:152px;top:1060px;width:11px;height:5px;border:1px solid #e6eef7;background:#8eb2d8"></div><div class="abs" style="left:165px;top:1059px;width:10px;height:6px;border:1px solid #e6eef7;background:#8eb2d8"></div><div class="abs" style="left:142px;top:1071px;width:9px;height:5px;border:1px solid #e6eef7;background:#8eb2d8"></div><div class="abs" style="left:156px;top:1066px;width:5px;height:6px;border:1px solid #e6eef7;background:#8eb2d8"></div><div class="abs" style="left:162px;top:1066px;width:13px;height:11px;border:1px solid #e6eef7;background:#8eb2d8"></div><div class="abs" style="left:177px;top:1058px;width:35px;height:20px;background:#b2aea8"></div><div class="abs" style="left:220px;top:1058px;width:146px;height:22px;background:linear-gradient(#9a9a9a,#b4b4b4 60%,#c2c2c2);border-radius:2px 2px 0 0;box-shadow:inset 1px 1px 0 rgba(0,0,0,.15)"></div><div class="abs" style="left:224px;top:1061px;width:16px;height:16px;border-radius:2px;overflow:hidden;background:radial-gradient(ellipse 70% 80% at 62% 45%,#8cb562 0,#5f8a3a 40%,#34521f 75%,#1a2c10 100%);box-shadow:inset 0 0 0 1px rgba(0,0,0,.45)"><div class="abs" style="left:8px;top:1px;width:7px;height:7px;background:linear-gradient(rgba(255,255,255,.35),rgba(255,255,255,0))"></div><div class="abs" style="left:3px;top:3px;width:0;height:0;border-left:3px solid #e8e8e8;border-top:2px solid transparent;border-bottom:2px solid transparent"></div><div class="abs" style="left:6px;top:7px;width:3px;height:1px;background:#d0d0d0"></div></div><div class="abs" style="left:244px;top:1059px;font-size:15px;line-height:18px;color:#f4f4f4;white-space:pre">zzd10h@Amiga...</div><div class="abs" style="left:375px;top:1061px;width:16px;height:16px;border-radius:2px;overflow:hidden;background:radial-gradient(ellipse 70% 80% at 62% 45%,#8cb562 0,#5f8a3a 40%,#34521f 75%,#1a2c10 100%);box-shadow:inset 0 0 0 1px rgba(0,0,0,.45)"><div class="abs" style="left:8px;top:1px;width:7px;height:7px;background:linear-gradient(rgba(255,255,255,.35),rgba(255,255,255,0))"></div><div class="abs" style="left:3px;top:3px;width:0;height:0;border-left:3px solid #e8e8e8;border-top:2px solid transparent;border-bottom:2px solid transparent"></div><div class="abs" style="left:6px;top:7px;width:3px;height:1px;background:#d0d0d0"></div></div><div class="abs" style="left:395px;top:1059px;font-size:15px;line-height:18px;color:#1e1e1e;white-space:pre">zzd10h@Amiga...</div><div class="abs" style="left:525px;top:1061px;width:16px;height:16px;border-radius:2px;overflow:hidden;background:radial-gradient(ellipse 70% 80% at 62% 45%,#8cb562 0,#5f8a3a 40%,#34521f 75%,#1a2c10 100%);box-shadow:inset 0 0 0 1px rgba(0,0,0,.45)"><div class="abs" style="left:8px;top:1px;width:7px;height:7px;background:linear-gradient(rgba(255,255,255,.35),rgba(255,255,255,0))"></div><div class="abs" style="left:3px;top:3px;width:0;height:0;border-left:3px solid #e8e8e8;border-top:2px solid transparent;border-bottom:2px solid transparent"></div><div class="abs" style="left:6px;top:7px;width:3px;height:1px;background:#d0d0d0"></div></div><div class="abs" style="left:545px;top:1059px;font-size:15px;line-height:18px;color:#1e1e1e;white-space:pre">zzd10h@Amiga...</div><div class="abs" style="left:676px;top:1061px;width:16px;height:16px;border-radius:2px;overflow:hidden;background:radial-gradient(ellipse 70% 80% at 62% 45%,#8cb562 0,#5f8a3a 40%,#34521f 75%,#1a2c10 100%);box-shadow:inset 0 0 0 1px rgba(0,0,0,.45)"><div class="abs" style="left:8px;top:1px;width:7px;height:7px;background:linear-gradient(rgba(255,255,255,.35),rgba(255,255,255,0))"></div><div class="abs" style="left:3px;top:3px;width:0;height:0;border-left:3px solid #e8e8e8;border-top:2px solid transparent;border-bottom:2px solid transparent"></div><div class="abs" style="left:6px;top:7px;width:3px;height:1px;background:#d0d0d0"></div></div><div class="abs" style="left:696px;top:1059px;font-size:15px;line-height:18px;color:#1e1e1e;white-space:pre">zzd10h@Amiga...</div><div class="abs" style="left:829px;top:1061px;width:16px;height:15px;background:linear-gradient(#efdcc9 0,#efdcc9 30%,#fde0e2 32%,#f8cfd2 100%);box-shadow:0 0 0 1px rgba(210,190,180,.6)"></div><div class="abs" style="left:847px;top:1059px;font-size:15px;line-height:18px;color:#1e1e1e;white-space:pre">glxgears</div><div class="abs" style="left:0;top:0"><svg class="abs" style="left:982px;top:1059px" width="18" height="18" viewBox="0 0 20 20"><rect x="2.5" y="0.5" width="14" height="12" rx="1" fill="#e8e8e8" stroke="#8a8a8a"/><rect x="4" y="2" width="10.5" height="8" fill="#4a6aa5"/><path d="M5 3 L12 3 L6 8 Z" fill="#7d97c8" opacity=".7"/><rect x="7" y="12.5" width="5" height="1.5" fill="#9a9a9a"/><path d="M1 19.5 L3 15 L17 15 L19.5 19.5 Z" fill="#eeeeee" stroke="#8a8a8a"/></svg></div><div class="abs" style="left:999px;top:1059px;font-size:15px;line-height:18px;color:#1e1e1e;white-space:pre">Sysinfo</div><svg class="abs" style="left:1734px;top:1060px" width="21" height="17" viewBox="0 0 21 17"><path d="M1 5.5 L4.5 5.5 L9 1.5 L9 15.5 L4.5 11.5 L1 11.5 Z" fill="#8a8a8a"/><path d="M11.5 6 Q13 8.5 11.5 11" stroke="#8a8a8a" stroke-width="1.6" fill="none"/><path d="M14 3.5 Q17 8.5 14 13.5" stroke="#a8a8a8" stroke-width="1.4" fill="none"/><path d="M16.5 1 Q21 8.5 16.5 16" stroke="#bdbdbd" stroke-width="1.3" fill="none"/></svg><div class="abs" style="left:1772px;top:1057px;width:8px;height:3px;background:#e0e0e0;border:1px solid #777;border-radius:1px"></div><div class="abs" style="left:1767px;top:1059px;width:18px;height:20px;border-radius:2px;border:1px solid #333;background:linear-gradient(90deg,rgba(0,0,0,.35),rgba(255,255,255,.25) 40%,rgba(0,0,0,.3)),linear-gradient(#c86a3c 0,#e39a70 45%,#2a2a2a 47%,#555 100%)"></div><svg class="abs" style="left:1798px;top:1057px" width="22" height="22" viewBox="0 0 22 22"><rect x="9.5" y="1" width="10" height="7" fill="none" stroke="#555" stroke-width="1.6"/><rect x="1" y="13" width="10" height="7" fill="none" stroke="#555" stroke-width="1.6"/><path d="M16 8 L16 13 L11 13" stroke="#555" stroke-width="1.6" fill="none"/></svg><div class="abs" style="left:1825px;top:1059px;font-size:15px;line-height:18px;font-weight:bold;color:#3a4fa6">FR</div><div class="abs" style="left:1846px;top:1057px;width:3px;height:23px;background:#dcdad5;border-left:1px solid #fff"></div><div class="abs" style="left:1850px;top:1057px;width:1px;height:23px;background:#222"></div><div class="abs" style="left:1856px;top:1059px;font-size:15px;line-height:18px;color:#1a1a1a">23:49</div><svg class="abs" style="left:1899px;top:1059px" width="18" height="18" viewBox="0 0 18 18"><path d="M5 3.5 A7 7 0 1 0 13 3.5" stroke="#6a6a6a" stroke-width="1.7" fill="none"/><path d="M9 1 L9 8.5" stroke="#6a6a6a" stroke-width="1.7"/></svg></body></html>
